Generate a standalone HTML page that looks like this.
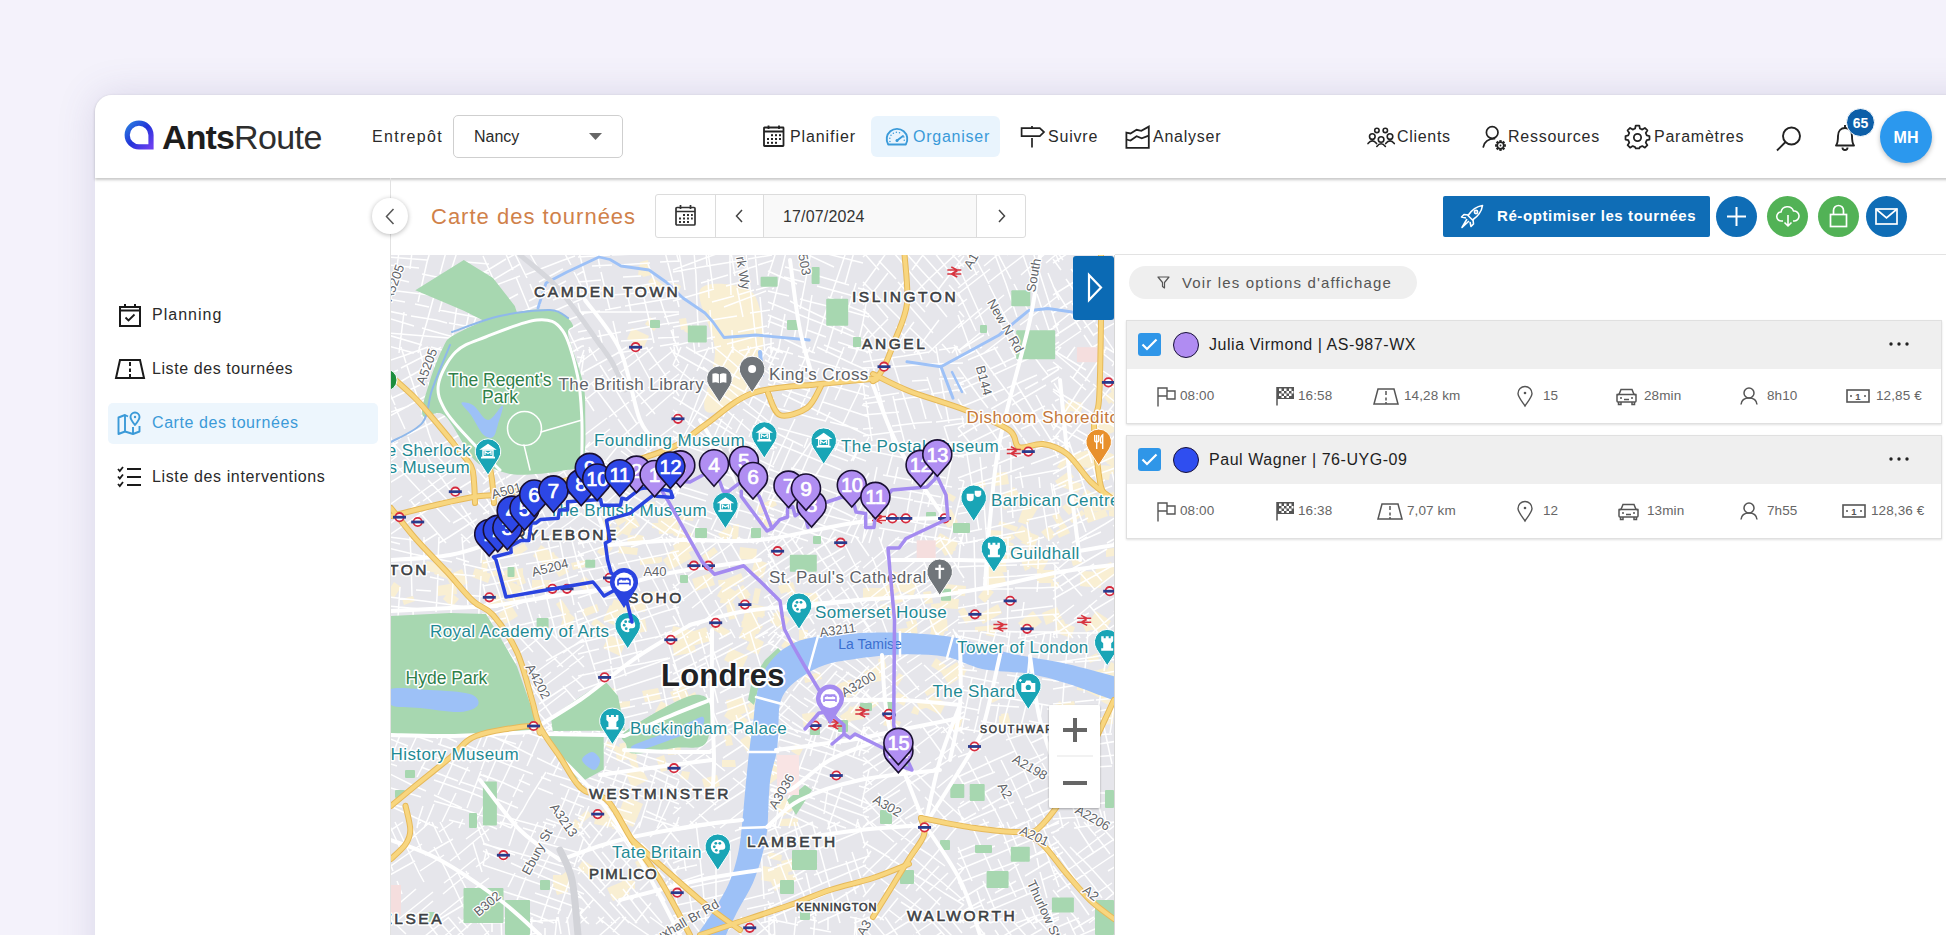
<!DOCTYPE html>
<html><head><meta charset="utf-8">
<style>
*{box-sizing:border-box;margin:0;padding:0}
html,body{width:1946px;height:935px;overflow:hidden;background:#f4f2fb;font-family:"Liberation Sans",sans-serif;color:#222}
.abs{position:absolute}
#win{position:absolute;left:95px;top:95px;width:1900px;height:900px;background:#fff;border-radius:17px 0 0 0;box-shadow:0 0 38px rgba(90,80,140,.17)}
#hdr{position:absolute;left:95px;top:95px;width:1900px;height:83px;border-radius:17px 0 0 0;background:#fff;box-shadow:0 1.5px 3px rgba(0,0,0,.22)}
.t{position:absolute;white-space:nowrap;line-height:1}
.nav{font-size:16px;color:#2a2a2a}
svg{position:absolute;overflow:visible}
</style></head><body>
<div id="win"></div>
<div id="hdr"></div>

<!-- logo -->
<svg style="left:124px;top:120px" width="31" height="30" viewBox="0 0 31 30">
 <defs><linearGradient id="lg" x1="0" y1="0" x2="1" y2="1"><stop offset="0" stop-color="#2a7de0"/><stop offset=".5" stop-color="#2233d8"/><stop offset="1" stop-color="#6a3ff0"/></linearGradient></defs>
 <path d="M15 3.2 A11.8 11.8 0 1 0 15 26.8 L27 26.8 L27 15 A12 12 0 0 0 15 3.2 Z" fill="none" stroke="url(#lg)" stroke-width="5.2"/>
</svg>
<div class="t" style="left:162px;top:120px;font-size:34px;font-weight:bold;color:#1d1d1d;letter-spacing:-0.9px">Ants<span style="font-weight:normal;letter-spacing:-0.6px;color:#2e2e2e">Route</span></div>

<div class="t nav" style="left:372px;top:129px;letter-spacing:1.3px">Entrepôt</div>
<div class="abs" style="left:453px;top:115px;width:170px;height:43px;border:1px solid #cfcfcf;border-radius:5px"></div>
<div class="t nav" style="left:474px;top:129px">Nancy</div>
<svg style="left:589px;top:133px" width="14" height="8"><path d="M0 0H13L6.5 7Z" fill="#666"/></svg>


<!-- NAV -->
<svg style="left:763px;top:125px" width="22" height="22" viewBox="0 0 22 22" fill="none" stroke="#222" stroke-width="1.8">
 <rect x="1" y="2.5" width="19.5" height="18.5" rx="0.5"/><path d="M1 6.5H20.5M5.5 0.5V4M16 0.5V4"/>
 <g fill="#222" stroke="none"><rect x="8" y="9.2" width="2" height="2"/><rect x="12" y="9.2" width="2" height="2"/><rect x="16" y="9.2" width="2" height="2"/><rect x="4" y="13" width="2" height="2"/><rect x="8" y="13" width="2" height="2"/><rect x="12" y="13" width="2" height="2"/><rect x="16" y="13" width="2" height="2"/><rect x="4" y="16.8" width="2" height="2"/><rect x="8" y="16.8" width="2" height="2"/><rect x="12" y="16.8" width="2" height="2"/></g>
</svg>
<div class="t nav" style="left:790px;top:129px;letter-spacing:.9px">Planifier</div>
<div class="abs" style="left:871px;top:116px;width:129px;height:41px;background:#e9f4fd;border-radius:6px"></div>
<svg style="left:885px;top:126px" width="24" height="20" viewBox="0 0 24 20" fill="none" stroke="#3a9ad9" stroke-width="1.9">
 <path d="M3.2 18.5A10.3 10.3 0 1 1 20.8 18.5Z" stroke-linejoin="round"/><path d="M12 14.5L18 10" stroke-width="1.9" stroke-linecap="round"/><circle cx="12" cy="14.5" r="1.5" fill="#3a9ad9" stroke="none"/>
 <g fill="#3a9ad9" stroke="none"><circle cx="4.95" cy="15.39" r="0.75"/><circle cx="4.81" cy="12.23" r="0.75"/><circle cx="6.02" cy="9.31" r="0.75"/><circle cx="8.35" cy="7.18" r="0.75"/><circle cx="11.36" cy="6.23" r="0.75"/><circle cx="14.50" cy="6.64" r="0.75"/><circle cx="18.86" cy="11.00" r="0.75"/><circle cx="19.27" cy="14.14" r="0.75"/></g>
</svg>
<div class="t nav" style="left:913px;top:129px;letter-spacing:.75px;color:#3a9ad9">Organiser</div>
<svg style="left:1020px;top:125px" width="26" height="24" viewBox="0 0 26 24" fill="none" stroke="#222" stroke-width="1.7">
 <path d="M1.6 3.1H19.8L24 7.1L19.8 11.2H1.6Z" stroke-linejoin="miter"/><path d="M12 1V3.1M12 13V22.5"/>
</svg>
<div class="t nav" style="left:1048px;top:129px;letter-spacing:.8px">Suivre</div>
<svg style="left:1125px;top:125px" width="26" height="24" viewBox="0 0 26 24" fill="none" stroke="#222" stroke-width="1.8">
 <path d="M1.4 7.7L5.5 8.5L11.6 4.8L16.3 5.8L23.8 1.6V22.8H1.4Z" stroke-linejoin="miter"/><path d="M1.4 14.5L5.5 15.6L11.6 11.2L16.7 13.4L23.8 10.6"/>
</svg>
<div class="t nav" style="left:1153px;top:129px;letter-spacing:.75px">Analyser</div>

<svg style="left:1360px;top:120px" width="40" height="35" viewBox="1360 120 40 35" fill="none" stroke="#222" stroke-width="1.6" stroke-linecap="round">
 <circle cx="1376.9" cy="130.4" r="2.2"/><circle cx="1385.3" cy="130.4" r="2.2"/>
 <circle cx="1372.3" cy="136.6" r="2.8"/><path d="M1368 143.6Q1372.3 138.2 1376.6 143.6"/>
 <circle cx="1381.1" cy="139.5" r="2.8"/><path d="M1376.8 146.4Q1381.1 141 1385.4 146.4"/>
 <circle cx="1390" cy="136.6" r="2.8"/><path d="M1385.7 143.6Q1390 138.2 1394.3 143.6"/>
</svg>
<div class="t nav" style="left:1397px;top:129px;letter-spacing:.7px">Clients</div>
<svg style="left:1478px;top:120px" width="35" height="35" viewBox="1478 120 35 35" fill="none" stroke="#222" stroke-width="1.7" stroke-linecap="round">
 <circle cx="1492.2" cy="132.5" r="5.8"/><path d="M1483.3 147Q1485 139 1494.5 138.7"/>
 <circle cx="1500.5" cy="145.5" r="3.3" stroke-width="1.7"/><circle cx="1500.5" cy="145.5" r="0.9" fill="#222" stroke="none"/><line x1="1504.10" y1="145.50" x2="1505.90" y2="145.50" stroke-width="2.3" stroke-linecap="butt"/><line x1="1503.05" y1="148.05" x2="1504.32" y2="149.32" stroke-width="2.3" stroke-linecap="butt"/><line x1="1500.50" y1="149.10" x2="1500.50" y2="150.90" stroke-width="2.3" stroke-linecap="butt"/><line x1="1497.95" y1="148.05" x2="1496.68" y2="149.32" stroke-width="2.3" stroke-linecap="butt"/><line x1="1496.90" y1="145.50" x2="1495.10" y2="145.50" stroke-width="2.3" stroke-linecap="butt"/><line x1="1497.95" y1="142.95" x2="1496.68" y2="141.68" stroke-width="2.3" stroke-linecap="butt"/><line x1="1500.50" y1="141.90" x2="1500.50" y2="140.10" stroke-width="2.3" stroke-linecap="butt"/><line x1="1503.05" y1="142.95" x2="1504.32" y2="141.68" stroke-width="2.3" stroke-linecap="butt"/>
</svg>
<div class="t nav" style="left:1508px;top:129px;letter-spacing:.75px">Ressources</div>
<svg style="left:1625px;top:125px" width="25" height="25" viewBox="0 0 24 24" fill="none" stroke="#222" stroke-width="1.7">
 <circle cx="12" cy="12" r="3.5"/>
 <path d="M10.3 1.5H13.7L14.3 4.4 16.6 5.4 19.1 3.8 21.5 6.2 19.9 8.7 20.9 11 23.5 11.6V15L20.9 15.6 19.9 17.9 21.5 20.4 19.1 22.8 16.6 21.2 14.3 22.2 13.7 23.5H10.3L9.7 22.2 7.4 21.2 4.9 22.8 2.5 20.4 4.1 17.9 3.1 15.6 0.5 15V11.6L3.1 11 4.1 8.7 2.5 6.2 4.9 3.8 7.4 5.4 9.7 4.4Z" stroke-linejoin="round" transform="translate(0,-1) scale(1,1)"/>
</svg>
<div class="t nav" style="left:1654px;top:129px;letter-spacing:.75px">Paramètres</div>
<svg style="left:1776px;top:126px" width="26" height="25" viewBox="0 0 26 25" fill="none" stroke="#222" stroke-width="1.9">
 <circle cx="15.5" cy="10" r="8.5"/><path d="M9.5 16L1 24.5"/>
</svg>
<svg style="left:1834px;top:124px" width="22" height="27" viewBox="0 0 22 27" fill="none" stroke="#222" stroke-width="1.9">
 <path d="M2 21.5C4 19 4 17 4 12C4 7 7 4 11 4S18 7 18 12C18 17 18 19 20 21.5Z" stroke-linejoin="round"/><path d="M11 1V4M8.5 23.5A2.5 2.5 0 0 0 13.5 23.5"/>
</svg>
<div class="abs" style="left:1846px;top:108px;width:29px;height:29px;border-radius:50%;background:#0d5fa8;border:1.5px solid #fff"></div>
<div class="t" style="left:1846px;top:116px;width:29px;text-align:center;font-size:14px;font-weight:bold;color:#fff">65</div>
<div class="abs" style="left:1880px;top:111px;width:52px;height:52px;border-radius:50%;background:#2b98ee;box-shadow:0 2px 5px rgba(0,0,0,.25)"></div>
<div class="t" style="left:1880px;top:130px;width:52px;text-align:center;font-size:16px;font-weight:bold;color:#fff">MH</div>

<!--MAP-->
<svg style="left:391px;top:255px;overflow:hidden" width="723" height="680" viewBox="391 255 723 680" font-family="Liberation Sans">
<defs><filter id="sh" x="-20%" y="-20%" width="140%" height="140%"><feDropShadow dx="0" dy="1" stdDeviation="1.2" flood-opacity=".3"/></filter></defs>
<rect x="391" y="255" width="723" height="680" fill="#e6e6eb"/>
<path d="M700.0,290.0 C705.0,279.7 735.0,284.7 745.0,288.0 C755.0,291.3 757.2,299.3 760.0,310.0 C762.8,320.7 765.0,337.3 762.0,352.0 C759.0,366.7 751.5,388.3 742.0,398.0 C732.5,407.7 709.5,418.0 705.0,410.0 C700.5,402.0 715.8,370.0 715.0,350.0 C714.2,330.0 695.0,300.3 700.0,290.0Z" fill="#f9efd3" stroke="none" stroke-width="0" stroke-linejoin="round" stroke-linecap="round" />
<path d="M652 523L668 523L668 529L652 528ZM659 509L673 507L673 513L659 514ZM611 514L622 507L629 519L618 526ZM636 594L657 591L658 602L637 605ZM756 507L774 498L777 505L760 514ZM619 546L638 548L637 555L618 553ZM702 556L714 547L718 552L706 561ZM633 602L646 604L645 612L632 610ZM673 545L690 538L694 550L677 557ZM692 579L711 573L715 585L696 591ZM757 518L768 512L774 524L763 529ZM678 506L695 508L693 521L677 519ZM740 547L757 549L756 560L739 559ZM673 626L694 631L691 641L671 636ZM610 605L624 612L618 627L603 620ZM646 558L662 557L662 562L646 563ZM627 518L633 514L640 526L634 529ZM640 559L660 557L660 563L640 565ZM688 633L706 627L711 641L692 646ZM666 554L684 544L692 558L674 568ZM628 535L638 536L637 546L627 545ZM642 501L655 502L654 511L641 510ZM752 604L766 607L763 618L750 615ZM609 635L626 642L620 656L603 648ZM663 560L669 555L676 565L670 570ZM611 531L618 526L623 533L616 538ZM600 523L606 518L612 525L606 530ZM740 592L748 590L750 598L742 600ZM658 518L678 517L679 533L659 534ZM677 513L685 510L687 519L680 521ZM733 524L739 524L738 540L732 540ZM623 581L629 585L622 594L617 590ZM738 604L747 600L751 608L742 613ZM724 580L741 573L744 581L727 588ZM730 648L748 656L742 669L724 660ZM718 534L730 525L735 532L724 541ZM604 542L613 548L605 558L597 552ZM672 641L693 636L696 652L674 656ZM635 534L644 536L643 543L634 541ZM744 626L757 632L752 643L739 637ZM614 599L633 606L628 619L609 612ZM676 527L693 534L690 542L673 535ZM755 559L767 563L763 578L751 574ZM627 519L635 523L629 536L621 533ZM623 624L645 619L647 631L626 636ZM755 588L761 589L758 604L752 603ZM753 636L764 642L758 655L746 649ZM721 595L732 596L731 604L720 603ZM726 605L734 603L737 618L729 620ZM746 615L763 626L758 634L741 623ZM750 612L764 611L765 616L751 617ZM718 580L737 580L737 586L719 587ZM773 613L784 614L783 625L772 624ZM778 586L793 582L795 589L781 594ZM777 610L790 619L783 630L770 622ZM744 617L758 620L755 631L741 627ZM745 612L758 616L754 631L741 627ZM788 637L796 642L789 652L781 646ZM784 588L791 584L796 592L790 596ZM724 584L738 593L731 605L717 596ZM715 623L730 631L726 637L712 629ZM797 593L818 593L818 602L797 603ZM799 630L808 630L807 640L799 640ZM734 592L743 585L751 595L742 602ZM755 606L762 608L760 616L754 615ZM541 545L559 558L550 569L533 556ZM493 561L499 559L503 572L497 574ZM496 574L515 567L520 580L500 587ZM498 614L511 605L518 616L505 624ZM487 595L497 602L494 607L484 600ZM556 604L562 600L570 612L564 616ZM584 576L593 583L587 592L577 585ZM512 550L524 543L528 549L516 557ZM499 544L508 542L511 550L502 552ZM571 563L585 560L586 567L573 570ZM482 560L488 560L487 574L481 573ZM503 578L522 587L519 593L500 584ZM532 580L551 580L551 589L532 589ZM563 619L574 622L570 635L558 632ZM556 572L566 567L569 572L559 577ZM488 599L497 594L501 599L492 605ZM581 610L597 604L599 611L584 617ZM515 577L523 574L526 583L518 586ZM595 618L607 627L603 633L591 624ZM517 569L523 568L523 578L517 578ZM540 556L554 552L555 556L542 561ZM491 572L497 570L499 575L492 577ZM508 587L522 590L519 603L505 600ZM566 610L575 618L570 625L561 617ZM498 598L512 605L510 610L495 603ZM1095 570L1111 562L1117 574L1102 583ZM1031 551L1049 559L1042 572L1025 563ZM1042 613L1057 607L1062 618L1046 625ZM945 491L956 497L953 502L943 497ZM1037 570L1053 570L1053 583L1037 583ZM941 598L959 599L958 609L940 608ZM1055 481L1069 471L1074 477L1059 487ZM986 587L994 592L985 603L978 597ZM1026 531L1039 536L1034 548L1021 543ZM1047 573L1054 570L1056 577L1050 579ZM1069 519L1082 510L1085 514L1072 523ZM987 578L1003 573L1007 585L990 589ZM1030 544L1041 551L1038 557L1027 550ZM975 627L996 625L996 630L975 632ZM1083 625L1095 620L1098 627L1086 632ZM1105 504L1120 504L1120 511L1104 510ZM1106 491L1122 501L1117 510L1100 500ZM1062 507L1078 494L1085 503L1069 515ZM941 549L952 542L956 550L945 556ZM1000 521L1018 527L1016 532L998 525ZM1086 489L1104 500L1097 511L1079 500ZM990 530L1003 531L1001 547L988 545ZM1003 538L1012 533L1015 538L1006 543ZM1085 516L1105 509L1108 516L1088 523ZM1029 500L1039 506L1031 520L1021 514ZM1081 571L1102 572L1101 588L1080 586ZM1065 478L1082 484L1078 493L1062 487ZM1052 516L1058 512L1066 526L1060 529ZM1022 525L1031 532L1023 542L1014 535ZM985 575L996 573L998 584L987 586ZM969 496L978 496L979 511L969 511ZM978 615L998 604L1002 613L983 624ZM973 485L984 480L986 486L976 490ZM985 561L1005 559L1007 572L987 574ZM1012 554L1022 547L1027 554L1017 561ZM988 625L996 626L994 637L986 635ZM1090 505L1100 503L1101 511L1091 512ZM1018 623L1033 611L1042 622L1027 634ZM946 584L966 586L965 596L944 594ZM940 533L958 543L952 555L933 545ZM1109 510L1117 510L1117 517L1109 516ZM1059 621L1075 627L1071 638L1054 632ZM1020 558L1026 556L1031 568L1025 571ZM1100 573L1110 570L1112 576L1102 579ZM1051 582L1059 582L1058 588L1051 588ZM1041 532L1049 526L1056 535L1049 541ZM992 544L1011 555L1005 565L986 554ZM1023 508L1032 510L1028 525L1018 522ZM993 473L1007 472L1009 484L995 486ZM985 577L1001 564L1006 570L989 583ZM999 537L1014 544L1011 551L996 544ZM1069 551L1078 548L1082 563L1073 566ZM1083 507L1092 504L1096 517L1086 520ZM1106 549L1115 548L1115 556L1106 557ZM1056 622L1063 619L1067 627L1059 630ZM1109 493L1116 492L1117 497L1110 498ZM1096 611L1111 621L1102 635L1087 625ZM997 500L1014 487L1022 497L1005 510ZM1056 531L1066 525L1070 533L1059 538ZM940 515L951 509L958 522L948 528ZM1103 668L1113 674L1107 686L1097 681ZM936 658L947 666L942 673L931 666ZM861 679L881 676L881 681L861 684ZM1055 705L1060 701L1063 705L1058 709ZM1089 672L1106 668L1110 682L1092 686ZM886 717L901 722L898 730L883 725ZM899 673L904 676L897 687L892 684ZM999 716L1005 716L1006 724L999 724ZM1100 717L1113 716L1113 724L1101 725ZM955 715L963 718L959 731L950 728ZM1058 705L1074 701L1076 710L1060 714ZM914 706L920 708L918 715L911 713ZM878 659L884 658L887 668L880 670ZM1108 712L1126 700L1130 707L1112 719ZM830 687L846 681L850 690L834 697ZM931 695L946 703L940 715L925 707ZM1009 663L1028 665L1027 673L1008 671ZM917 703L926 700L928 707L920 710ZM848 712L863 710L864 719L849 721ZM1112 688L1121 690L1118 704L1109 702ZM1111 662L1123 668L1117 680L1105 674ZM1087 658L1097 653L1099 659L1090 663ZM1106 693L1124 703L1119 711L1101 701ZM941 672L957 662L965 675L949 685ZM987 695L996 691L1000 699L992 703ZM864 672L878 665L883 676L869 683ZM804 676L820 672L822 679L805 683ZM864 707L876 699L879 704L867 712ZM924 691L939 683L941 689L927 696ZM1018 682L1027 688L1022 695L1013 688ZM898 692L908 698L904 706L893 700ZM1113 679L1121 675L1127 687L1118 691ZM802 714L815 712L816 726L804 728ZM1077 685L1086 686L1085 691L1077 690ZM1001 714L1008 713L1011 724L1003 726ZM958 664L967 670L961 679L952 673ZM834 687L851 679L858 693L841 701ZM840 716L857 704L863 712L846 725ZM1091 680L1109 689L1104 700L1086 691ZM850 706L859 711L854 719L846 714ZM733 706L742 707L742 716L732 716ZM661 701L670 706L663 717L655 712ZM607 741L623 749L620 754L604 745ZM619 744L633 740L636 751L622 755ZM667 742L680 741L681 754L668 755ZM670 692L685 686L689 696L674 702ZM722 760L735 760L736 767L722 767ZM617 702L630 701L630 707L618 708ZM682 694L697 699L695 704L680 699ZM724 736L731 735L733 745L726 746ZM752 702L771 709L766 724L747 717ZM730 707L748 720L742 729L724 716ZM747 705L762 694L771 707L755 717ZM656 758L664 755L669 770L661 772ZM731 703L743 697L749 711L736 717ZM642 736L652 731L654 736L644 740ZM626 774L641 767L648 780L632 788ZM726 700L740 698L742 709L728 712ZM740 740L753 732L760 744L747 752ZM759 747L771 743L775 756L763 760ZM758 742L770 741L771 754L760 755ZM628 757L635 755L639 768L633 770ZM702 779L717 775L720 786L705 790ZM600 693L609 692L610 704L601 705ZM682 771L690 772L688 780L680 778ZM604 690L615 688L616 694L605 696ZM636 743L651 745L650 752L635 750ZM676 702L695 692L698 699L680 709ZM615 747L635 745L637 758L617 761ZM642 691L658 688L661 699L645 702ZM1095 424L1115 417L1119 429L1099 437ZM1109 384L1122 379L1126 388L1112 393ZM1063 458L1068 461L1062 470L1057 467ZM1068 400L1083 403L1081 413L1066 410ZM1104 397L1113 391L1118 398L1109 404ZM1108 458L1123 466L1121 471L1106 463ZM1100 427L1117 420L1121 429L1104 436ZM1066 403L1072 405L1069 414L1063 411ZM1098 465L1115 466L1114 474L1097 472ZM1084 459L1098 462L1096 469L1082 467ZM1112 402L1131 395L1133 400L1114 407ZM1073 454L1093 449L1096 462L1076 467ZM1108 413L1117 415L1114 429L1105 428ZM1097 447L1117 456L1112 465L1093 456ZM1098 466L1111 467L1109 480L1096 479ZM652 277L665 286L662 291L648 282ZM640 262L648 260L651 275L643 277ZM640 262L646 264L644 276L638 275ZM679 319L686 318L688 329L681 330ZM687 326L705 336L702 341L684 331ZM694 336L701 332L704 338L698 342ZM632 328L649 336L644 347L627 339ZM674 283L681 286L679 291L672 289ZM644 286L656 281L658 286L646 290ZM650 317L659 324L654 331L645 324ZM780 876L796 874L797 880L781 882ZM777 864L789 864L788 877L777 876ZM769 878L775 875L782 887L775 891ZM760 772L774 761L784 773L770 784ZM780 819L798 818L798 826L780 826ZM774 873L784 870L788 885L778 888ZM769 852L782 855L781 861L767 858ZM763 866L780 869L778 883L761 880ZM774 804L785 797L793 810L782 817ZM796 744L803 749L799 756L791 751ZM780 801L800 800L801 807L780 808ZM781 861L799 857L801 869L784 873ZM893 571L911 577L907 589L889 582ZM877 591L893 582L899 591L883 601ZM906 622L916 619L918 626L908 629ZM930 619L938 616L941 622L933 625ZM893 597L900 593L904 601L896 604ZM958 611L964 607L972 620L966 624ZM898 629L917 627L918 640L900 642ZM880 605L887 603L888 611L881 612ZM863 588L882 588L882 601L863 601ZM923 592L931 591L933 603L925 604ZM934 624L946 628L942 639L930 634ZM902 576L918 583L913 596L897 590ZM930 620L947 619L948 631L931 632ZM891 604L898 607L895 616L888 613ZM931 604L941 603L942 613L932 614ZM446 576L462 569L468 583L453 590ZM449 591L459 599L452 607L443 599ZM394 582L401 587L394 598L387 593ZM437 564L452 569L448 579L434 574ZM437 586L456 583L457 594L438 596ZM475 568L491 574L488 583L472 577ZM402 599L413 596L415 601L404 605ZM427 561L439 564L436 573L424 570ZM575 819L583 825L575 835L568 830ZM593 814L610 807L614 815L596 823ZM553 875L572 875L572 887L553 887ZM596 815L617 819L616 828L594 824ZM622 880L635 881L635 889L621 888ZM553 882L564 878L568 892L557 895ZM578 818L587 810L592 815L582 823ZM612 821L622 821L622 829L612 829ZM583 860L597 869L591 877L578 868ZM625 796L643 804L637 818L620 810ZM554 881L567 871L570 875L557 885ZM635 862L644 857L647 863L638 868ZM563 875L573 882L570 887L560 881ZM619 808L638 816L633 827L615 819ZM607 888L624 881L630 894L613 901Z" fill="#f9efd3"/>
<path d="M483 252L489 253M388 257L427 260M466 262L489 264M388 265L419 268M478 272L489 273M422 274L446 279M473 283L489 286M388 277L409 282M458 294L489 301M388 290L430 295M467 299L489 301M388 299L405 302M415 304L429 307M439 310L480 318M388 311L407 315M411 316L436 320M436 320L447 323M449 323L487 330M487 330L489 330M388 318L414 326M422 328L439 333M439 333L472 342M485 346L489 347M388 333L425 336M425 336L460 339M460 339L489 341M388 335L422 345M431 347L452 353M388 346L414 353M489 275L480 305M476 317L469 339M473 293L465 333M462 344L460 353M459 291L453 334M453 334L450 353M457 252L449 277M449 277L439 312M427 352L427 353M446 252L440 274M438 281L434 296M434 296L428 318M428 318L418 353M430 252L427 262M427 262L418 302M412 252L410 269M404 312L399 353M399 252L393 295M483 273L506 259M508 258L519 252M483 286L520 264M483 290L520 276M525 275L561 261M561 261L575 256M483 313L518 294M539 282L563 269M483 326L506 314M529 301L566 281M577 275L584 271M483 327L503 319M514 315L541 304M553 300L569 293M571 292L584 287M483 342L508 331M548 314L563 307M563 307L584 298M483 353L521 338M560 323L584 314M530 353L554 339M554 339L566 331M566 331L584 321M558 348L583 338M583 338L584 338M571 353L582 346M582 346L584 346M564 252L571 265M574 272L584 291M566 291L584 325M529 252L538 268M561 315L578 351M514 252L527 278M530 284L534 294M505 252L513 270M516 277L532 316M546 350L547 353M483 256L491 274M491 274L497 288M499 292L509 314M521 341L527 353M483 285L496 314M497 317L504 333M508 340L512 350M512 350L513 353M483 329L495 353M483 352L483 353M578 257L610 255M612 255L636 254M641 254L668 252M592 266L612 265M619 265L650 263M660 262L679 261M578 282L601 280M623 277L641 276M578 294L607 290M632 287L656 283M666 282L679 281M613 295L638 293M638 293L679 290M578 314L600 311M605 310L621 307M625 306L667 299M667 299L679 297M578 312L602 312M602 312L616 312M616 312L651 312M651 312L679 312M578 332L588 330M628 323L656 318M664 317L679 314M578 340L621 332M626 331L664 324M664 324L679 322M621 341L652 339M658 338L679 337M618 353L648 348M660 346L679 343M676 252L679 262M665 252L676 294M676 294L679 307M648 264L654 280M654 280L663 308M663 308L669 325M671 330L679 353M641 285L648 315M648 315L654 343M628 297L631 312M639 348L640 353M597 252L600 268M601 272L610 310M613 321L619 347M579 252L589 292M599 330L602 343M604 351L605 353M578 303L582 318M589 349L590 353M673 254L680 252M673 270L705 258M705 258L722 252M673 272L707 266M707 266L738 261M748 259L772 255M701 283L728 275M733 273L756 266M758 265L774 260M673 301L714 289M726 286L741 282M712 302L734 296M738 295L754 290M756 290L774 285M724 307L766 291M772 289L774 288M673 327L705 321M705 321L737 316M750 313L770 310M673 346L694 341M694 341L715 337M738 332L767 326M694 353L708 349M708 349L721 346M727 344L769 333M739 351L774 343M771 333L771 353M755 252L758 285M760 297L761 308M761 308L763 333M763 333L765 353M746 252L747 266M747 266L751 295M751 295L753 314M753 314L755 332M755 332L757 350M731 252L735 276M737 288L743 317M748 346L749 353M730 252L730 264M730 264L731 295M732 330L733 353M708 252L713 288M706 252L707 265M708 279L709 298M710 310L712 340M712 342L713 353M694 252L696 275M696 275L697 304M697 304L699 347M679 252L685 290M691 324L695 353M673 329L674 341M674 347L675 353M864 252L869 254M820 252L863 263M802 252L834 267M785 267L808 273M808 273L849 285M858 288L869 291M784 277L804 282M817 286L850 295M850 295L869 300M768 271L797 284M828 297L840 302M842 303L853 308M853 308L869 314M768 291L789 296M800 299L811 302M811 302L848 311M848 311L869 317M790 301L799 306M799 306L818 315M818 315L854 332M768 302L805 317M805 317L833 328M833 328L869 343M768 315L801 328M807 330L826 337M838 342L853 347M866 352L868 353M768 321L786 328M824 345L843 353M784 339L805 349M805 349L815 353M768 347L783 353M869 291L866 304M866 304L863 322M863 322L856 353M856 283L845 320M845 320L841 334M854 252L845 284M842 296L834 326M834 326L831 336M831 336L826 353M846 252L842 264M842 264L828 305M827 308L818 336M818 336L812 353M812 295L809 313M809 313L808 323M808 323L805 340M805 340L803 353M811 252L807 273M807 273L800 309M798 316L794 339M785 314L779 347M779 347L778 353M786 252L778 285M778 285L772 310M771 315L768 328M776 252L769 273M769 273L768 276M950 252L961 264M961 264L964 267M934 252L960 285M920 252L943 278M949 285L964 302M905 252L922 271M922 271L946 297M946 297L953 305M959 311L964 317M893 252L900 260M900 260L913 276M913 276L925 290M930 296L947 317M879 261L896 279M898 282L925 312M954 345L961 353M863 252L879 270M905 301L933 333M942 344L950 353M863 282L876 295M876 295L906 325M910 328L929 346M929 346L936 353M863 288L888 318M896 327L915 349M915 349L918 353M863 309L894 341M894 341L905 353M863 324L888 353M863 342L872 353M957 346L952 353M964 320L941 341M941 341L928 353M939 320L918 348M916 351L914 353M964 256L941 286M941 286L926 307M914 322L899 342M899 342L890 353M958 252L930 278M930 278L915 293M888 319L874 333M874 333L863 344M925 252L912 270M907 278L890 301M868 331L863 338M888 273L863 305M887 252L877 266M876 268L863 286M868 252L863 257M958 257L965 252M958 267L983 252M958 288L979 271M984 266L996 256M996 256L1002 252M958 294L990 269M1007 255L1011 252M958 306L967 299M989 282L1003 271M1003 271L1028 252M958 328L982 308M1021 275L1031 266M1031 266L1047 252M975 319L1004 295M1046 263L1059 252M958 351L985 329M995 320L1021 299M958 351L984 335M984 353L1015 329M1020 325L1035 314M1035 314L1059 295M1012 353L1020 348M1022 347L1055 327M1055 327L1059 324M1031 353L1048 342M1056 336L1059 335M1054 345L1059 342M1055 252L1059 262M1048 273L1059 300M1033 252L1040 274M1040 274L1047 296M1047 296L1059 334M1022 252L1033 284M1037 294L1050 333M1050 333L1054 343M997 252L1011 279M1014 284L1031 316M1036 325L1045 343M994 252L1006 284M1006 284L1017 317M1028 347L1030 353M972 252L989 284M989 285L998 303M998 303L1018 341M966 252L977 275M991 304L1009 341M958 265L970 292M970 292L978 310M978 310L989 336M958 292L976 331M958 315L963 328M963 328L972 353M958 349L960 353M1053 263L1070 252M1087 265L1106 252M1053 295L1082 277M1112 258L1121 252M1053 313L1072 301M1082 295L1101 284M1101 284L1113 276M1053 327L1078 307M1107 284L1137 260M1146 254L1148 252M1053 337L1079 320M1079 320L1105 304M1053 350L1081 331M1084 328L1098 318M1100 317L1129 296M1132 294L1154 278M1093 335L1124 318M1136 311L1154 301M1082 353L1100 343M1142 320L1154 313M1149 327L1154 324M1127 353L1142 341M1134 252L1154 275M1121 252L1139 271M1139 271L1154 289M1111 252L1126 271M1126 271L1137 285M1137 285L1154 306M1154 306L1154 306M1120 281L1143 309M1151 320L1154 323M1097 277L1125 309M1125 309L1149 337M1149 337L1154 342M1081 263L1107 296M1125 319L1144 344M1144 344L1151 353M1057 252L1063 260M1071 269L1095 299M1101 306L1111 319M1120 330L1138 352M1053 259L1061 270M1066 279L1075 292M1075 292L1095 322M1096 324L1115 352M1115 352L1116 353M1072 303L1094 336M1099 344L1105 353M1053 286L1067 308M1069 311L1081 330M1084 335L1096 353M1080 352L1080 353M388 361L403 356M403 356L428 347M388 375L398 370M401 368L440 348M440 348L441 347M388 389L399 383M400 382L412 375M412 375L442 358M442 358L456 350M388 400L420 385M466 362L489 351M388 417L417 401M417 401L431 393M443 386L464 375M464 375L479 366M388 413L409 406M420 402L438 396M438 396L451 391M451 391L470 385M470 385L486 379M421 416L457 401M463 398L475 393M475 393L488 387M388 444L401 438M407 435L445 416M448 415L480 399M454 426L465 420M467 419L489 407M435 448L444 443M444 443L454 438M454 438L479 424M486 420L489 418M463 448L489 437M487 347L489 352M481 347L488 378M457 347L466 370M466 370L470 380M474 390L478 400M480 406L489 429M454 347L457 362M465 394L469 410M470 415L478 448M427 347L443 387M447 399L452 411M419 347L427 379M428 382L437 414M401 347L406 363M407 366L414 387M414 387L418 399M418 399L426 424M426 424L429 434M429 434L434 448M420 441L423 448M388 389L395 405M395 407L405 429M408 437L412 448M388 431L395 448M540 347L570 355M577 357L584 358M510 347L520 349M529 351L573 361M483 363L505 366M510 366L537 369M538 369L554 371M554 371L584 374M483 370L510 374M510 374L539 378M549 380L572 383M583 385L584 385M522 382L554 389M557 390L584 396M483 389L508 393M508 393L519 394M523 394L555 398M555 398L584 402M536 407L556 409M556 409L568 410M569 410L584 412M483 413L500 415M500 415L528 420M557 425L580 429M483 421L509 424M509 424L532 427M532 427L575 433M581 434L584 434M483 437L509 440M547 443L571 446M571 446L583 447M583 447L584 447M483 439L498 443M498 443L519 448M584 443L582 448M584 355L578 394M577 405L574 427M572 438L570 448M584 350L571 391M571 391L560 428M558 433L554 448M554 397L546 441M546 441L544 448M561 347L556 361M547 393L535 432M535 432L531 448M550 347L542 375M527 426L521 444M521 444L520 448M527 347L523 373M523 373L516 416M516 416L511 448M516 347L508 387M507 395L500 433M499 439L497 448M512 347L501 380M501 380L498 390M495 400L487 424M490 364L484 388M484 388L483 390M578 364L601 347M578 375L616 354M616 354L627 347M578 393L603 375M608 371L631 355M631 355L642 347M578 406L600 388M600 388L633 363M633 363L653 347M620 392L640 377M649 370L675 349M578 440L607 418M609 417L629 402M631 401L645 390M648 388L670 371M675 367L679 364M586 448L610 429M641 404L661 388M661 388L679 374M609 448L639 422M646 416L677 389M645 448L679 422M658 448L679 436M670 347L679 363M646 347L657 363M657 363L666 376M676 391L679 396M632 347L653 385M599 347L607 356M613 364L633 388M635 390L655 414M673 436L679 443M589 347L597 361M600 365L619 395M619 395L637 424M643 434L652 448M592 384L617 417M618 419L632 438M639 447L639 448M578 386L594 411M770 347L774 349M756 347L774 359M765 360L774 365M731 347L760 367M760 367L774 377M714 347L733 363M733 363L760 387M686 347L715 364M715 364L740 379M748 384L768 395M768 395L774 399M673 352L696 365M696 365L727 382M727 382L741 390M741 390L754 397M754 397L773 408M703 367L728 388M728 388L747 404M747 404L774 426M705 383L718 392M718 392L738 405M743 409L766 425M772 429L774 430M673 365L707 393M707 393L740 422M740 422L756 436M757 437L771 448M714 415L732 429M673 397L697 412M697 412L725 429M725 429L756 448M702 421L711 426M673 410L695 428M695 428L713 443M673 431L702 448M774 436L769 445M768 448L768 448M774 412L764 437M760 446L759 448M774 386L755 424M754 425L749 437M745 445L743 448M774 347L768 362M763 373L749 405M743 419L736 433M734 439L730 448M768 347L760 361M749 384L738 405M734 414L716 448M757 347L742 378M729 405L723 417M722 419L709 448M751 347L731 380M727 385L720 398M698 432L688 448M734 347L723 366M708 392L702 404M702 404L686 432M686 432L677 448M702 388L688 425M709 347L697 371M694 377L680 405M677 411L673 418M688 364L673 394M681 347L673 365M848 347L869 352M817 347L853 364M853 364L869 371M769 347L782 351M782 351L793 354M798 356L840 368M842 368L869 376M768 356L779 359M799 365L812 369M855 382L869 387M768 368L788 374M798 376L815 381M815 381L832 386M832 386L869 396M768 379L797 387M797 387L810 391M862 405L869 407M768 384L786 390M786 390L813 399M823 402L848 410M848 410L869 417M782 394L815 410M815 410L852 428M852 428L869 436M768 406L792 412M792 412L813 418M813 418L826 421M830 422L858 429M832 438L858 448M778 428L822 440M822 440L843 446M768 429L803 446M768 445L777 448M869 437L863 448M849 438L843 448M869 369L862 383M862 383L857 395M857 395L842 426M832 447L832 448M859 347L851 364M848 372L835 400M830 412L825 422M821 431L813 448M844 347L828 388M828 388L817 415M808 438L804 448M819 368L801 407M795 419L783 444M783 445L781 448M810 347L799 372M799 372L784 407M789 347L773 387M770 395L768 400M779 347L768 370M863 362L904 356M904 356L929 352M939 350L958 347M863 368L890 367M890 367L930 364M930 364L963 363M912 381L928 380M939 379L964 378M863 399L880 396M880 396L899 393M912 392L929 389M954 385L964 384M863 404L885 401M894 400L922 396M931 394L964 389M863 415L899 412M959 407L964 407M863 429L873 428M892 426L917 423M917 423L932 422M936 422L959 419M959 419L964 419M863 436L901 431M945 426L964 423M863 446L904 444M911 444L937 443M937 443L960 442M955 347L958 357M962 416L964 428M936 347L941 376M941 380L949 423M952 444L953 448M917 347L922 360M927 377L938 409M938 409L942 419M944 426L951 448M918 390L926 419M888 347L897 375M897 375L900 385M900 385L907 406M907 406L915 429M893 396L897 413M897 413L906 448M868 347L874 370M874 370L879 391M879 392L888 425M888 425L892 440M892 440L894 448M863 383L865 399M866 401L872 441M958 359L975 351M980 348L982 347M968 360L996 348M996 348L998 347M958 384L978 375M990 369L1024 353M1030 350L1036 347M958 391L983 380M993 375L1032 357M1037 354L1053 347M958 408L973 402M973 402L1004 389M1007 388L1037 375M1047 371L1059 366M958 428L980 416M991 409L1022 391M1025 389L1038 382M1042 380L1059 369M958 437L990 418M1012 405L1046 385M1051 382L1059 377M959 448L998 429M998 429L1011 423M1011 423L1035 411M1035 411L1045 406M1055 401L1059 399M979 448L1010 435M1021 429L1041 420M1050 417L1059 413M1038 448L1059 436M1057 448L1059 447M1058 347L1059 348M1057 367L1059 369M1027 347L1041 366M1041 366L1048 375M1054 383L1059 391M1052 404L1059 415M1010 347L1018 361M1036 395L1043 408M1043 408L1054 429M994 347L1006 367M1014 379L1019 388M1019 388L1041 424M1041 424L1056 448M974 347L999 381M999 381L1014 401M1014 401L1040 436M1043 440L1049 448M986 385L997 401M1010 420L1022 437M1023 438L1030 448M958 367L978 395M978 395L988 408M1017 447L1017 448M958 382L966 394M977 411L995 436M995 436L1003 448M958 399L977 431M958 428L974 448M1125 347L1154 365M1105 347L1123 358M1135 365L1154 377M1095 347L1127 373M1127 373L1147 388M1147 388L1154 394M1103 371L1127 387M1128 387L1150 402M1150 402L1154 405M1053 350L1086 370M1105 382L1133 399M1147 407L1154 411M1053 351L1061 358M1061 358L1090 382M1093 384L1120 406M1053 362L1062 369M1070 376L1086 390M1109 409L1138 432M1138 432L1152 444M1152 444L1154 446M1053 389L1078 404M1078 404L1092 413M1093 414L1112 425M1112 425L1126 434M1135 439L1148 447M1053 391L1086 418M1086 418L1112 440M1053 417L1072 427M1077 430L1109 448M1053 424L1089 444M1091 445L1096 448M1053 436L1070 447M1070 447L1071 448M1154 432L1142 448M1154 420L1143 432M1140 435L1130 445M1137 418L1125 436M1154 386L1127 420M1127 420L1105 448M1145 386L1130 402M1131 382L1105 416M1105 416L1083 444M1143 347L1119 377M1111 387L1099 402M1090 413L1067 441M1127 347L1118 358M1118 358L1112 366M1095 388L1072 416M1072 416L1055 437M1107 347L1085 381M1083 384L1069 406M1069 406L1053 430M1094 347L1088 356M1087 357L1073 378M1075 347L1067 358M1061 347L1053 356M388 448L398 442M388 463L397 456M388 476L404 467M388 484L420 464M388 506L402 496M439 469L451 460M456 457L477 442M409 501L441 478M441 478L477 452M487 445L489 443M388 525L420 502M423 501L456 478M483 459L489 454M388 536L413 519M413 519L443 500M460 488L473 480M483 473L489 469M486 479L489 477M422 543L438 533M453 523L471 513M439 543L449 537M449 537L477 519M483 514L489 511M462 543L483 526M472 442L485 457M485 457L489 462M456 442L463 451M477 469L487 481M435 442L444 451M425 442L435 454M437 456L451 471M468 491L489 514M417 442L434 467M436 470L459 503M461 505L485 541M485 541L487 543M392 442L407 458M407 458L425 477M428 480L452 505M452 506L477 531M477 531L488 543M397 466L420 491M421 491L450 522M461 534L470 543M411 501L422 515M422 515L446 543M408 528L415 536M421 542L421 543M483 446L488 442M483 460L504 446M483 469L494 463M517 449L528 442M483 484L505 465M505 465L527 446M483 492L505 478M506 478L528 464M483 509L498 496M498 496L509 488M513 485L537 465M483 525L505 507M505 507L538 479M571 451L581 442M539 488L575 464M581 459L584 457M483 530L494 523M529 503L566 482M572 478L584 471M533 519L542 512M556 502L576 487M576 487L584 482M507 543L543 522M552 517L578 501M583 498L584 498M529 543L556 521M560 517L584 497M541 543L569 523M569 523L582 513M563 543L574 534M574 534L584 527M578 543L584 539M584 464L584 465M559 442L563 451M566 456L571 466M549 442L562 468M562 468L567 477M573 488L584 509M527 442L548 473M548 473L561 493M520 451L538 478M545 489L561 513M570 527L581 543M531 488L543 513M543 513L549 526M483 445L502 482M502 482L518 514M521 521L527 532M528 534L532 543M502 508L512 523M522 539L525 543M483 493L498 517M498 517L514 543M488 532L495 543M483 537L487 543M675 442L679 445M652 442L676 457M676 457L679 459M636 442L669 465M669 465L679 473M619 442L653 471M657 474L668 483M672 487L679 493M621 451L657 478M657 478L671 488M676 492L679 494M578 446L615 467M641 482L653 489M578 445L614 471M656 501L666 508M578 464L611 483M614 485L652 507M578 463L601 479M610 485L627 497M661 521L679 534M633 512L668 535M669 536L679 542M578 483L610 506M610 506L638 527M578 499L601 514M601 514L616 524M578 512L606 531M615 537L623 543M578 532L596 543M578 536L588 543M679 539L676 543M679 518L661 537M679 487L652 517M649 520L634 538M679 478L659 496M649 505L637 516M634 518L619 532M619 532L607 543M679 442L661 464M661 464L636 493M635 494L619 513M614 519L595 541M640 472L627 484M626 485L598 510M598 510L589 518M659 442L629 467M625 470L603 488M601 490L592 497M584 504L578 509M621 442L605 462M605 462L588 482M588 482L578 494M590 442L581 453M764 442L774 446M747 442L774 449M721 442L745 453M751 456L774 467M701 442L727 452M727 452L761 466M770 469L774 471M675 442L712 455M714 456L753 469M700 467L739 478M769 485L774 487M673 461L687 466M739 483L774 494M703 476L733 491M736 492L759 503M761 504L774 510M673 484L708 495M763 512L774 516M673 491L706 501M717 504L746 512M746 512L772 520M772 520L774 521M698 507L728 520M673 508L712 519M720 521L759 531M768 534L774 535M714 530L732 536M737 538L749 541M749 541L754 543M673 517L709 533M709 533L731 543M673 529L704 543M673 540L679 543M774 531L768 543M774 495L761 526M774 451L768 471M768 471L762 493M762 493L754 520M752 527L747 543M759 442L755 456M755 456L747 480M740 503L736 518M733 528L728 543M755 442L747 457M747 457L737 477M720 511L711 530M706 538L704 543M733 442L720 472M719 473L713 487M699 519L692 534M692 534L688 543M713 442L702 471M686 514L678 536M678 536L675 543M683 481L673 500M681 442L673 461M820 442L850 455M850 455L866 461M815 449L826 453M826 453L848 461M773 442L800 453M800 453L841 470M791 468L834 480M834 480L846 484M846 484L869 490M768 469L780 473M780 473L805 482M812 485L840 495M847 497L858 501M865 504L869 505M768 477L786 485M786 485L815 499M815 499L832 507M832 507L845 513M845 513L857 519M768 499L792 505M801 508L837 518M837 518L850 521M768 507L793 516M799 518L816 523M816 523L833 529M833 529L859 538M768 517L806 531M806 531L822 537M822 537L840 543M768 528L808 541M869 527L862 543M869 503L857 529M857 529L851 543M863 503L846 534M869 473L851 503M835 529L827 543M862 442L853 461M845 479L839 491M838 494L824 524M824 526L816 543M863 442L851 461M839 442L835 451M816 497L802 529M800 535L796 543M836 442L813 480M790 518L775 542M815 442L807 460M807 460L792 495M789 502L782 517M811 442L793 468M793 468L769 504M793 442L780 472M780 472L768 500M784 442L773 465M769 473L768 475M926 452L940 454M951 455L964 457M863 450L875 452M875 452L905 458M911 471L946 478M959 480L964 481M883 475L911 480M931 483L952 487M899 489L941 497M863 492L881 495M887 496L913 500M914 501L952 507M863 513L882 516M882 516L908 521M908 521L946 528M946 528L964 532M863 525L873 527M879 528L915 534M918 535L961 542M895 539L920 543M964 530L961 543M964 481L960 498M960 498L950 538M950 538L948 543M955 442L948 477M948 477L940 513M940 513L934 543M936 473L933 485M931 494L928 507M926 519L924 528M924 528L920 543M935 442L925 485M925 485L917 522M916 524L912 543M920 442L912 484M911 490L907 513M898 467L894 484M889 505L886 522M884 529L881 542M896 442L887 475M884 487L881 498M881 498L876 518M876 518L869 543M877 467L870 503M870 503L863 540M864 442L863 450M958 457L980 450M980 450L992 445M958 456L988 451M995 450L1011 448M958 478L987 467M992 466L1009 459M1009 459L1027 453M1036 449L1055 442M971 485L990 479M990 479L1024 467M1031 464L1059 454M958 489L1001 481M1015 478L1058 470M1058 470L1059 470M958 507L968 504M1001 494L1017 489M1057 476L1059 476M958 514L984 509M1033 501L1059 496M1007 512L1031 508M958 534L982 529M985 529L1015 522M1027 520L1059 513M965 543L984 539M988 538L1025 531M1048 527L1059 524M1027 543L1044 537M1057 533L1059 532M1057 543L1059 542M1058 442L1059 449M1051 483L1057 519M1039 477L1040 488M1042 497L1049 541M1020 472L1023 488M1027 522L1030 543M1010 442L1011 454M1011 454L1011 472M1011 475L1012 504M1012 504L1013 518M999 442L999 460M1000 465L1001 502M1001 505L1002 524M1002 525L1002 543M980 457L983 489M984 503L987 543M965 442L972 485M972 487L979 530M965 522L967 543M1053 451L1070 442M1053 465L1081 451M1084 450L1096 444M1096 444L1100 442M1053 474L1089 454M1097 450L1112 442M1053 487L1072 478M1080 474L1102 462M1102 462L1121 453M1121 453L1130 448M1130 448L1142 442M1053 490L1066 485M1070 484L1090 477M1090 477L1115 468M1123 465L1137 460M1053 498L1085 487M1091 485L1105 480M1115 477L1147 466M1147 466L1154 463M1079 498L1112 486M1116 484L1154 470M1053 528L1080 514M1110 498L1137 484M1152 477L1154 476M1053 535L1088 518M1143 490L1154 485M1072 543L1105 524M1105 524L1118 516M1118 516L1149 497M1153 495L1154 494M1076 543L1092 536M1092 536L1101 532M1113 526L1151 509M1151 509L1154 508M1107 543L1127 532M1132 529L1154 517M1115 543L1144 532M1142 543L1154 538M1147 442L1154 470M1124 442L1136 478M1136 478L1142 492M1142 492L1147 508M1147 508L1154 527M1129 483L1132 497M1132 497L1140 531M1140 531L1142 543M1112 472L1116 488M1118 496L1121 509M1124 519L1130 543M1086 442L1092 463M1093 466L1103 503M1114 542L1114 543M1069 442L1082 480M1082 481L1086 493M1086 493L1095 520M1053 445L1058 458M1077 508L1086 532M1053 484L1059 513M1053 542L1053 543M487 542L489 543M389 537L421 541M388 541L400 544M456 558L469 562M388 548L413 554M413 554L452 562M463 564L476 567M476 567L489 570M388 568L430 572M454 574L475 576M430 577L444 580M416 590L431 591M465 595L489 597M388 597L424 601M424 601L452 605M452 605L472 608M388 606L431 610M482 614L489 615M416 617L445 622M447 632L471 637M483 537L481 563M481 576L479 610M479 610L478 630M478 630L478 638M462 537L463 550M463 550L466 579M466 579L468 605M453 583L451 613M439 537L438 561M438 574L437 597M437 597L436 612M435 626L435 638M424 537L424 572M423 616L423 638M410 537L411 559M411 559L412 596M413 610L414 638M400 587L398 617M483 550L498 546M498 546L527 538M483 563L496 560M498 559L537 551M537 551L559 546M483 571L519 565M526 564L566 558M566 558L584 555M483 586L508 581M508 581L521 578M540 573L550 571M550 571L562 569M574 566L584 564M483 605L504 598M510 596L545 585M549 584L578 575M483 617L521 603M521 603L534 599M534 599L557 591M557 591L577 584M483 623L506 618M483 634L504 629M506 628L525 624M525 624L566 614M577 612L584 610M523 638L558 627M558 627L584 618M563 638L584 632M580 537L584 548M571 537L579 568M559 537L564 562M564 562L567 573M567 573L570 586M570 586L574 605M575 613L580 636M547 537L552 559M560 599L566 628M566 628L568 638M535 551L543 583M543 583L550 611M550 611L557 638M528 578L536 603M539 614L547 638M507 537L513 555M515 563L527 603M527 603L538 638M489 537L504 575M507 582L518 609M483 546L488 563M488 563L495 581M495 581L507 617M507 617L514 638M483 584L489 612M490 619L494 635M494 635L494 638M483 626L486 638M578 544L592 541M592 541L611 537M578 555L614 543M615 543L634 537M578 565L592 560M595 559L619 551M631 547L662 537M578 572L614 565M618 564L661 555M661 555L679 551M594 581L613 576M613 576L630 572M578 598L602 590M604 599L635 594M578 625L605 615M605 615L618 610M628 607L650 599M650 599L679 589M604 622L632 614M632 614L666 604M670 603L679 601M585 638L616 628M621 626L642 619M642 619L659 613M659 613L679 607M665 627L679 624M655 638L672 631M666 537L671 546M675 552L679 561M662 537L672 565M672 565L679 583M643 537L655 563M657 567L661 577M663 579L679 614M639 556L651 577M652 578L670 611M673 616L679 626M615 537L623 553M623 553L634 577M634 577L640 591M643 598L661 637M661 637L662 638M600 537L606 550M612 563L630 598M631 601L646 632M586 537L602 565M602 566L618 594M629 615L642 638M578 551L584 561M589 571L601 595M601 595L607 606M610 612L624 638M578 560L592 601M592 601L597 613M578 602L584 614M584 614L595 636M578 625L586 638M673 545L684 537M673 560L697 541M697 541L701 537M700 555L724 537M673 588L686 578M686 578L704 564M704 564L722 551M722 551L730 545M730 545L740 537M673 607L708 580M708 580L717 573M756 544L764 537M692 608L725 582M752 560L774 543M722 592L743 579M743 579L774 560M681 638L695 628M697 626L729 601M729 601L752 583M752 583L761 576M761 576L774 566M764 598L774 592M739 638L765 623M765 623L774 618M755 638L774 626M772 638L774 636M761 537L774 562M755 560L761 572M766 582L774 598M727 537L749 574M769 608L774 616M715 537L733 574M738 585L752 613M752 613L760 629M763 636L764 638M699 537L713 568M728 599L740 627M743 633L745 638M703 576L712 594M715 600L727 622M730 629L735 638M673 553L679 563M679 563L691 584M691 584L697 594M697 594L718 630M720 633L723 638M673 584L684 601M706 636L707 638M673 602L684 628M687 636L688 638M768 551L779 542M779 542L784 537M768 557L795 537M768 570L791 555M791 555L803 547M768 579L779 572M785 569L803 558M803 558L836 537M783 582L804 570M807 568L831 555M831 555L843 548M768 607L792 591M803 584L818 574M821 572L845 556M797 605L827 584M832 581L861 561M768 636L784 623M804 608L816 599M816 599L826 591M845 577L859 566M777 638L813 614M816 611L849 588M851 587L869 575M804 638L815 629M819 638L841 623M843 622L869 604M837 638L858 624M858 624L869 617M855 638L867 631M867 631L869 630M869 537L869 537M856 537L869 556M841 537L853 561M853 561L869 591M820 537L832 556M832 557L844 575M847 581L853 589M853 589L863 606M814 548L827 567M827 567L835 578M841 587L862 618M863 619L869 627M791 537L815 572M827 589L851 625M851 625L860 638M782 537L790 550M790 550L796 560M816 592L839 630M839 630L843 638M768 554L788 584M788 584L796 596M796 596L814 624M768 561L780 585M790 604L799 621M799 621L807 638M768 597L788 633M768 612L776 628M863 539L865 537M863 568L884 550M884 550L899 537M863 579L891 555M891 555L906 543M906 543L913 537M863 583L874 577M904 559L941 537M863 604L890 582M900 574L908 567M908 567L938 542M938 542L945 537M863 614L894 588M898 585L925 563M930 558L956 537M863 617L872 612M875 610L887 603M887 603L926 582M926 582L956 565M863 631L876 622M901 605L935 582M897 624L918 607M918 607L937 592M917 619L929 610M947 595L957 586M963 582L964 581M898 638L930 615M938 610L948 603M954 599L964 592M913 638L945 617M963 605L964 605M932 638L959 619M959 537L964 546M939 537L960 572M960 572L964 578M925 537L930 547M930 547L947 583M922 557L931 579M931 579L936 589M953 629L957 638M912 577L926 610M926 610L934 629M934 629L938 638M879 537L886 556M886 556L901 594M901 594L913 624M872 557L889 597M875 600L879 611M880 614L889 638M863 620L873 635M958 544L978 541M989 540L1011 537M1003 547L1035 546M1046 546L1057 546M984 555L1028 553M958 567L978 566M978 566L1017 565M1020 565L1057 563M1057 563L1059 563M983 578L1017 576M1017 576L1041 574M1050 573L1059 573M958 590L997 589M997 589L1013 589M1015 588L1038 588M1038 588L1059 587M958 608L988 603M991 603L1008 600M958 617L980 614M980 614L1001 612M1011 611L1053 606M958 623L985 620M991 620L1030 616M1030 616L1059 614M958 631L978 631M990 631L1022 632M1022 632L1059 632M1018 638L1059 631M1055 565L1055 585M1055 585L1056 622M1056 622L1057 638M1039 537L1038 569M1038 581L1037 592M1036 636L1036 638M1031 537L1028 567M1024 602L1022 617M1021 625L1020 638M1008 537L1008 560M1008 570L1008 602M1008 602L1007 630M1007 630L1007 638M988 537L988 575M988 575L988 595M988 600L988 633M974 537L975 578M975 578L976 607M961 537L958 569M1077 543L1087 537M1053 573L1078 552M1053 580L1070 570M1070 570L1081 564M1081 564L1107 549M1053 591L1062 585M1062 585L1094 564M1053 599L1083 582M1083 582L1121 561M1142 549L1154 542M1053 621L1074 605M1091 592L1121 569M1121 569L1144 552M1150 547L1154 544M1074 619L1097 600M1100 597L1112 587M1112 587L1126 575M1126 575L1141 563M1146 559L1154 552M1053 635L1089 613M1094 610L1131 588M1139 583L1154 574M1086 638L1115 614M1124 607L1148 587M1096 638L1126 617M1126 617L1140 608M1140 608L1154 598M1115 638L1143 617M1149 612L1154 608M1134 638L1154 626M1147 638L1154 632M1151 537L1154 541M1140 537L1145 546M1145 546L1154 560M1120 537L1134 560M1138 587L1149 602M1149 602L1154 610M1119 573L1132 594M1132 594L1148 619M1148 619L1154 628M1073 548L1085 561M1092 569L1102 581M1053 543L1066 558M1075 567L1095 590M1114 611L1138 638M1053 563L1082 596M1089 605L1099 617M1099 617L1117 638M1053 579L1063 591M1083 614L1102 638M1078 635L1080 638M1053 614L1073 638M1053 636L1055 638M481 632L489 642M473 632L488 647M443 632L466 657M473 665L489 682M432 632L443 644M443 644L450 653M472 677L489 697M424 632L449 663M455 672L476 697M485 709L489 714M438 663L457 688M396 632L422 664M422 664L430 674M462 712L474 728M388 639L414 669M414 669L438 696M456 716L471 733M388 641L410 672M414 677L435 708M388 668L417 700M388 674L404 692M428 722L438 733M407 713L425 733M388 723L397 733M489 722L475 733M489 708L460 730M470 701L457 712M429 718L409 733M489 650L463 670M457 675L436 691M436 691L426 699M420 704L405 715M404 716L388 728M489 638L470 651M452 664L417 689M417 689L396 704M472 632L435 655M435 655L401 676M401 676L388 684M450 632L432 642M400 659L388 666M411 632L388 651M391 632L388 634M483 638L492 632M483 649L506 632M498 647L524 632M483 664L513 647M483 685L515 657M515 657L540 637M545 632L546 632M483 692L491 686M561 634L564 632M483 697L512 680M546 661L584 640M483 709L492 703M535 673L557 657M563 653L583 639M506 708L531 688M531 688L551 672M557 667L584 645M483 732L509 712M514 709L530 697M530 697L543 687M543 687L569 668M569 667L584 656M494 733L521 715M539 704L568 685M568 685L580 677M580 677L584 674M511 733L529 719M531 718L566 691M514 733L536 721M539 733L558 720M559 720L576 708M576 708L584 703M544 733L559 724M569 717L584 708M560 733L584 715M573 733L584 724M580 632L584 636M550 632L572 654M572 654L584 667M528 632L552 657M554 658L563 667M572 676L584 688M515 632L533 652M563 686L584 710M528 661L540 677M567 714L581 733M495 632L516 663M525 676L537 694M537 694L559 727M559 727L563 733M483 650L492 660M523 695L531 704M531 704L556 733M483 654L492 668M492 668L502 682M503 684L517 704M517 704L536 733M483 680L503 707M504 709L522 733M483 699L493 713M578 635L587 632M578 643L617 634M617 634L629 632M578 654L599 649M604 648L620 645M620 645L633 642M633 642L661 636M666 635L677 632M594 664L608 660M608 660L642 651M578 676L618 668M618 668L645 663M645 663L668 658M578 691L600 683M600 683L618 677M618 677L642 668M642 668L670 658M608 693L632 685M632 685L672 672M578 711L594 708M600 706L622 702M630 700L662 693M674 690L679 689M578 718L597 714M605 712L635 706M642 704L653 702M653 702L679 696M607 722L648 712M677 706L679 705M620 733L644 724M644 724L679 712M658 733L670 730M670 730L679 728M665 632L677 671M662 681L664 692M664 692L672 733M632 632L639 662M647 694L651 709M652 714L656 733M615 632L626 676M605 632L609 653M609 653L611 664M611 666L617 700M620 714L623 733M583 632L595 670M595 671L606 706M608 713L613 729M613 729L614 733M673 642L685 636M673 655L702 638M709 634L713 632M673 662L710 643M719 639L732 632M673 674L697 662M699 661L733 643M673 680L706 663M712 660L747 642M756 638L768 632M673 690L693 680M733 661L750 653M750 653L774 641M673 694L691 687M691 687L715 677M718 676L730 671M701 703L710 699M720 693L735 685M735 685L749 678M751 677L774 665M673 723L702 712M702 712L712 708M725 703L751 693M751 693L763 689M716 714L751 701M757 700L773 694M715 733L746 715M746 715L767 703M767 703L774 699M719 733L754 721M757 733L771 725M750 632L762 671M762 671L767 687M767 687L774 708M756 694L760 712M732 663L740 688M742 694L753 733M707 632L721 673M736 715L742 733M699 632L705 654M705 656L710 671M713 683L718 703M682 632L691 654M691 654L705 692M706 694L719 727M720 728L722 733M673 664L683 686M685 691L698 721M673 679L683 706M683 708L693 733M673 721L677 733M863 632L869 636M845 632L857 639M857 639L869 646M841 632L869 655M824 632L845 650M854 657L869 670M805 632L830 650M835 654L869 679M781 632L810 650M810 650L843 670M846 672L864 683M774 632L800 650M834 673L866 695M866 695L869 698M768 642L805 665M809 668L820 674M850 693L869 705M800 672L813 681M768 658L795 679M795 679L815 695M849 722L863 733M804 698L818 706M818 706L842 720M842 720L864 733M768 679L788 693M790 694L799 701M799 701L808 707M817 714L826 720M833 725L845 733M768 691L801 718M801 718L819 732M819 732L820 733M768 706L781 715M781 715L790 721M792 722L809 733M768 709L798 733M798 733L798 733M768 721L783 733M869 727L864 733M869 689L851 713M846 719L837 732M869 682L840 712M832 721L820 733M869 666L844 692M840 696L819 718M811 726L805 733M849 672L824 697M822 699L808 713M869 635L854 652M837 671L813 699M784 732L783 733M837 660L807 689M790 706L768 728M837 632L827 645M827 645L821 654M817 659L793 691M791 694L777 713M777 713L768 725M803 663L781 691M778 694L768 707M816 632L808 641M800 651L784 669M783 670L768 688M778 658L772 667M772 667L768 671M786 632L771 651M777 632L768 643M863 635L867 632M863 640L876 632M863 657L899 632M892 643L901 638M901 638L911 632M863 677L889 655M863 683L875 675M879 673L897 661M897 661L928 641M928 641L937 636M882 680L897 670M907 663L925 651M926 650L938 641M938 641L951 632M863 705L890 686M891 685L922 663M951 643L962 636M863 710L896 690M939 665L952 657M952 657L963 651M863 726L889 707M889 707L909 693M909 693L919 686M925 681L951 663M951 663L964 654M880 724L911 702M915 698L925 691M925 691L933 685M942 679L964 662M926 700L957 677M903 727L912 721M945 699L964 686M950 705L964 693M927 733L938 727M949 720L964 712M941 733L964 716M955 632L964 644M936 632L949 648M951 651L964 667M924 665L947 687M955 696L964 704M872 632L895 661M895 661L919 690M926 698L952 729M952 729L955 733M863 654L884 675M884 675L902 692M902 692L926 716M926 716L940 729M944 732L944 733M863 690L889 717M889 717L901 730M901 730L904 733M863 714L870 721M981 632L1009 637M1022 640L1038 643M1038 643L1059 647M958 636L978 640M978 640L1013 647M958 649L989 653M1002 655L1024 659M1036 660L1054 663M1054 663L1059 664M958 662L996 667M1001 667L1043 673M958 669L977 671M1007 675L1038 679M1042 679L1059 681M1059 681L1059 681M958 675L999 683M958 689L989 695M989 695L1024 701M1024 701L1057 707M1057 707L1059 707M990 705L1019 707M1047 709L1059 710M958 706L978 710M1029 721L1059 727M958 717L970 720M981 721L1023 729M1023 729L1043 733M958 728L989 733M1051 632L1048 660M1042 705L1040 718M1045 632L1038 660M1038 660L1030 689M1030 689L1021 726M1021 726L1019 733M1027 632L1024 643M1023 650L1013 688M1012 691L1002 728M1010 632L1007 653M999 703L994 732M996 632L993 642M993 642L990 657M990 657L985 680M985 680L978 714M978 716L974 733M981 632L973 671M972 678L966 707M966 707L961 733M964 632L959 658M1053 633L1090 633M1090 633L1119 633M1100 646L1120 643M1130 642L1154 638M1053 663L1093 657M1093 657L1132 650M1142 649L1153 647M1153 647L1154 647M1053 662L1073 662M1075 662L1101 660M1103 660L1147 659M1053 681L1092 675M1098 674L1129 669M1150 665L1154 665M1053 689L1083 684M1089 683L1133 676M1133 676L1154 673M1113 691L1152 690M1152 690L1154 689M1053 704L1071 702M1075 702L1094 700M1096 700L1140 696M1152 695L1154 695M1053 718L1063 717M1071 716L1110 709M1133 705L1145 703M1148 703L1154 702M1053 722L1083 720M1083 720L1113 718M1119 717L1154 715M1136 723L1154 722M1131 733L1145 732M1153 731L1154 731M1150 632L1148 669M1148 669L1146 699M1146 699L1145 710M1145 710L1144 733M1134 669L1132 696M1132 704L1131 715M1130 726L1130 733M1123 632L1118 671M1118 671L1116 692M1115 697L1111 727M1111 727L1110 733M1111 632L1104 671M1104 674L1097 716M1097 716L1095 733M1088 632L1087 645M1087 648L1085 669M1085 677L1084 693M1083 706L1081 733M1069 632L1065 670M1065 670L1062 711M1062 711L1060 733M480 727L489 730M454 727L484 735M423 727L457 742M463 744L478 750M388 727L407 733M407 733L433 742M438 744L471 755M480 758L489 762M388 738L408 746M435 757L470 771M479 774L489 778M421 767L458 781M461 782L473 786M473 786L489 792M388 763L397 766M434 780L469 792M469 792L489 800M388 773L410 784M410 784L426 791M434 795L462 808M388 787L421 797M434 801L465 810M465 810L489 818M388 803L402 807M449 820L465 824M472 826L480 828M388 805L429 824M429 824L438 828M489 795L478 817M478 817L473 828M489 749L481 770M481 771L467 808M463 819L459 828M486 727L470 763M468 767L459 785M456 793L442 822M462 743L455 757M455 757L451 767M451 767L438 795M434 804L424 828M445 727L440 744M423 806L419 818M419 818L417 828M443 727L437 739M428 756L417 777M421 727L407 757M403 727L394 751M567 727L584 735M546 727L564 735M570 738L584 745M510 727L549 740M549 740L584 752M483 734L516 744M556 755L574 760M577 761L584 763M483 732L509 744M509 744L533 756M537 758L562 770M483 752L513 762M547 773L573 781M483 755L506 764M506 764L533 774M541 777L551 781M560 784L580 792M519 780L530 785M538 788L553 794M561 798L584 807M483 775L504 783M504 783L523 792M575 814L584 818M553 811L567 815M578 818L584 820M483 794L494 798M494 798L518 808M546 819L571 828M483 810L520 821M520 821L546 828M483 817L501 824M502 824L511 828M584 817L579 828M584 782L567 821M567 821L564 828M584 751L574 777M569 789L557 819M555 824L553 828M576 727L559 763M559 763L553 776M574 727L551 764M546 772L529 799M529 799L523 810M523 810L511 828M544 727L527 766M524 774L513 797M512 801L500 828M528 727L523 737M522 741L504 779M504 779L497 793M492 804L483 823M511 727L500 751M499 753L486 783M484 789L483 790M491 727L483 747M637 727L663 734M663 734L679 739M643 735L659 740M671 744L679 746M584 727L600 732M651 746L676 754M578 736L592 740M592 740L615 747M625 750L664 762M665 763L679 767M606 749L642 764M642 764L669 776M669 776L679 780M679 780L679 780M603 752L612 757M612 757L644 772M650 775L677 788M605 770L622 774M622 774L655 783M667 786L679 789M578 766L588 770M601 775L638 788M656 795L679 804M578 774L604 783M610 785L650 799M674 807L679 809M578 780L601 791M608 794L634 805M646 811L666 820M673 823L679 826M578 796L588 799M588 799L599 803M599 803L615 808M615 808L632 813M642 816L668 824M668 824L679 828M620 818L635 824M612 825L619 828M679 817L675 828M679 781L666 809M666 809L657 828M668 775L664 792M664 792L656 819M657 768L650 791M648 799L639 828M656 727L649 747M649 747L643 769M626 822L624 828M627 775L616 804M616 804L607 828M633 727L622 761M619 767L609 796M622 727L607 763M606 766L599 783M599 783L593 797M589 806L580 828M612 727L597 766M581 808L578 816M594 727L583 767M583 767L578 783M579 727L578 730M673 749L690 736M683 761L714 737M714 737L724 729M724 729L727 727M673 775L706 753M706 753L726 740M736 733L745 727M723 758L743 745M673 800L692 788M763 743L774 736M673 814L681 807M686 804L713 785M713 785L748 760M768 746L774 741M686 828L720 799M728 792L761 766M761 766L774 754M714 810L748 788M720 828L734 817M734 817L753 802M758 805L773 794M745 828L769 811M768 727L774 735M741 727L758 745M758 745L774 762M724 727L739 741M739 741L761 762M764 765L774 775M743 771L771 803M771 803L774 806M706 755L714 762M714 762L725 771M733 778L757 797M767 806L774 811M673 749L704 777M704 777L713 785M673 769L689 783M689 783L716 805M673 788L694 808M699 814L715 828M690 821L697 828M866 727L869 728M826 727L853 738M853 738L869 744M785 727L809 734M820 737L841 744M856 748L869 752M772 727L801 737M805 739L838 751M838 751L869 763M768 736L809 748M809 748L839 757M779 747L790 752M819 764L842 774M845 775L857 781M768 758L802 768M802 768L833 778M859 786L869 789M768 762L801 776M801 776L818 782M841 792L869 804M768 770L809 786M812 787L850 802M850 802L869 810M768 784L796 793M798 794L815 799M820 801L835 806M835 806L867 817M867 817L869 817M804 802L842 819M842 819L861 828M768 797L779 801M786 804L825 820M825 820L840 826M840 826L846 828M768 804L783 811M783 811L818 828M768 825L781 828M869 770L861 807M858 819L856 828M865 727L859 756M864 727L853 757M842 787L828 828M838 727L833 758M828 787L824 814M835 727L828 747M827 752L813 791M818 727L810 756M797 801L792 818M792 818L789 828M815 727L801 764M801 764L788 800M788 800L778 828M778 809L775 828M782 727L770 768M770 768L768 773M863 732L870 727M863 743L878 731M863 754L876 744M863 765L883 752M920 728L922 727M863 773L898 752M863 788L894 764M894 764L925 740M925 740L942 727M863 794L898 770M954 732L961 727M863 810L891 791M891 791L907 779M907 779L931 762M935 760L958 743M962 741L964 739M863 813L900 790M908 785L944 763M944 763L956 755M963 750L964 750M863 827L874 820M874 820L906 798M886 828L915 805M937 788L953 775M957 771L964 766M889 828L902 820M905 819L924 808M932 828L953 810M960 804L964 801M957 727L964 734M943 727L962 753M923 727L946 759M897 727L920 753M868 727L887 745M910 767L941 798M941 798L964 819M863 731L872 740M894 763L912 783M912 783L920 791M925 797L941 814M941 814L954 828M863 757L878 771M916 808L936 827M863 775L872 785M878 793L893 810M900 818L909 828M863 797L870 805M870 805L891 828M863 815L874 828M958 731L969 727M972 746L995 734M995 734L1007 727M958 757L981 749M1006 740L1027 733M1027 733L1044 727M958 777L988 763M988 763L1015 751M1031 743L1059 730M958 786L995 772M1016 765L1044 754M1058 749L1059 749M958 808L996 786M1005 781L1024 771M1024 771L1047 757M958 823L976 813M982 809L1005 796M1007 795L1043 775M1050 771L1059 765M958 825L996 809M999 808L1014 802M1025 798L1053 786M1026 811L1052 797M1055 795L1059 793M1015 828L1046 812M1046 812L1059 806M1046 828L1059 821M1055 727L1059 733M1022 727L1041 761M1042 763L1051 779M1058 790L1059 793M1004 727L1022 766M1022 766L1033 792M1038 803L1049 828M1001 760L1009 776M1011 779L1023 805M1025 808L1032 822M985 756L993 772M999 784L1008 801M1008 801L1017 819M968 762L980 784M982 788L996 812M996 812L1004 828M958 775L964 785M970 795L979 811M983 819L988 828M958 809L964 824M1053 737L1083 735M1093 735L1112 734M1053 751L1084 746M1084 746L1099 744M1099 744L1118 741M1081 758L1117 755M1117 755L1142 753M1151 752L1154 752M1053 769L1079 768M1080 768L1112 766M1118 766L1145 764M1145 764L1154 764M1119 768L1152 762M1053 790L1089 786M1063 793L1090 793M1090 793L1113 793M1113 793L1137 792M1149 792L1154 792M1093 804L1125 801M1125 801L1144 799M1144 799L1154 798M1053 819L1079 817M1079 817L1098 815M1124 813L1154 810M1074 828L1094 825M1099 824L1129 820M1148 727L1151 740M1151 740L1154 749M1140 727L1148 758M1135 771L1144 798M1144 798L1154 828M1115 727L1120 749M1122 757L1127 778M1127 778L1133 806M1137 821L1139 828M1104 727L1112 764M1118 792L1123 815M1125 821L1126 828M1088 727L1091 742M1091 742L1098 778M1104 811L1107 828M1074 727L1081 750M1095 795L1099 807M1099 807L1105 828M1065 727L1071 752M1071 752L1076 772M1076 772L1078 783M1087 818L1089 828M1065 784L1069 796M1069 796L1080 828M1053 785L1057 804M1059 812L1063 828M388 832L403 822M417 825L421 822M388 859L411 839M411 839L430 822M388 868L399 860M399 860L422 844M439 832L453 822M388 876L415 861M425 855L453 839M420 871L444 855M466 839L489 822M388 913L416 889M450 861L459 854M459 854L489 829M394 923L409 911M409 911L433 892M444 883L461 870M461 870L476 858M407 923L433 901M443 894L455 884M455 884L469 873M476 867L489 857M430 923L459 900M459 900L489 878M433 923L470 901M470 901L488 890M459 923L487 906M477 923L489 916M479 822L489 841M476 822L484 843M486 849L489 857M473 843L482 872M440 822L460 860M466 871L471 881M432 822L442 843M457 871L471 898M471 898L480 915M480 915L484 923M434 847L446 870M446 870L456 891M456 891L462 904M462 904L472 923M410 822L421 849M395 822L408 850M408 850L419 873M419 873L424 882M388 822L400 848M388 858L393 871M397 881L402 894M410 914L413 923M388 886L393 896M393 896L400 912M388 920L389 923M543 822L556 826M563 828L584 834M500 822L512 825M523 828L536 832M543 833L566 839M540 842L580 853M580 853L584 854M483 823L497 829M537 847L558 857M558 857L575 864M583 868L584 868M483 844L510 851M510 851L542 860M542 860L562 866M562 866L575 869M575 869L584 872M483 843L515 855M523 859L561 874M483 851L506 861M511 863L522 868M528 870L563 885M563 885L584 894M483 865L519 877M519 877L551 888M551 888L582 898M535 893L550 898M550 898L573 906M576 907L584 910M496 889L521 897M521 897L561 910M483 894L522 910M527 912L552 922M552 922L554 923M525 918L543 923M504 918L516 923M575 902L566 923M584 837L574 867M571 876L558 914M556 921L555 923M574 822L571 832M553 884L547 902M547 902L540 923M565 822L554 844M550 854L538 878M524 907L517 920M517 920L516 923M546 822L533 858M532 860L528 871M526 877L520 892M520 892L516 903M513 910L509 923M538 822L521 859M515 873L508 887M502 900L497 910M497 910L491 923M517 822L509 846M486 853L483 865M662 822L677 840M677 840L679 842M674 849L679 855M657 847L679 879M641 843L653 855M653 855L670 872M676 878L679 881M611 822L629 841M651 864L665 878M670 883L679 893M611 822L636 857M642 867L649 877M657 888L665 901M589 822L602 836M609 843L638 876M674 915L679 921M578 823L590 838M602 852L628 883M628 883L639 896M639 896L662 923M578 831L603 863M603 863L615 879M623 889L635 905M635 905L649 923M578 855L605 886M611 894L637 923M578 867L605 896M610 902L629 923M578 883L607 913M607 913L616 923M578 893L590 908M599 918L603 923M578 912L587 923M679 919L676 923M679 866L669 880M668 881L656 896M651 903L635 923M679 846L656 873M649 881L640 890M638 892L631 901M612 922L611 923M678 822L662 844M635 882L617 906M664 822L650 837M632 857L609 883M609 883L599 893M594 899L578 917M640 822L628 841M622 849L600 882M583 909L578 916M625 822L602 848M580 872L578 874M607 822L585 852M585 852L578 862M591 822L578 836M673 831L698 827M698 827L710 825M710 825L729 822M735 831L754 824M673 863L705 851M713 848L754 832M754 832L774 825M673 870L697 865M743 854L774 847M673 884L704 874M756 857L774 851M673 891L706 884M706 884L741 877M744 876L756 873M768 871L774 869M673 906L714 897M714 897L744 890M673 916L704 909M704 909L717 906M730 903L771 893M771 893L774 892M682 923L697 920M697 920L719 915M747 909L774 903M761 923L774 920M760 822L762 864M762 864L764 899M765 907L765 923M748 921L748 923M730 851L731 893M731 893L731 922M716 843L716 873M716 873L716 910M696 822L700 858M700 858L703 888M703 888L706 923M683 850L686 871M687 880L692 911M673 873L678 912M678 912L679 923M768 831L777 827M768 842L797 829M797 829L813 822M768 859L807 839M807 839L821 832M827 829L840 822M768 870L787 863M787 863L825 846M825 846L861 831M861 831L869 828M768 891L785 881M793 877L817 863M768 890L803 878M814 875L824 871M824 871L839 866M839 866L869 856M768 908L801 893M801 893L826 882M826 882L866 865M768 919L795 907M798 906L835 890M835 890L860 879M797 923L825 907M825 907L859 886M818 923L855 906M855 906L869 900M854 923L869 917M858 822L865 845M867 849L869 857M852 852L866 894M868 900L869 903M834 822L837 832M846 861L856 894M828 822L838 862M846 892L850 907M812 822L819 847M819 847L826 873M826 873L834 902M834 902L840 923M797 822L805 842M805 842L822 884M794 822L803 860M806 873L816 916M773 822L787 857M787 857L803 893M803 893L809 909M813 916L815 923M780 864L789 887M768 856L771 866M774 879L787 922M768 901L777 921M777 921L777 923M910 822L924 834M957 863L964 869M882 822L891 828M891 828L916 846M919 848L930 855M930 855L945 866M871 822L894 842M903 849L924 867M924 867L955 893M955 893L964 901M863 842L890 858M890 859L902 866M904 868L932 885M932 885L944 893M944 893L964 905M900 871L920 887M920 887L940 905M950 914L961 923M863 865L898 892M898 892L927 914M901 902L933 923M889 910L902 920M863 908L884 920M863 921L866 923M964 904L954 914M964 868L946 890M941 897L929 911M924 918L919 923M948 873L929 891M921 898L905 914M905 914L895 923M939 866L916 891M961 822L945 841M943 845L916 877M914 879L906 889M898 898L880 920M942 822L925 842M920 848L905 867M905 867L884 892M865 914L863 917M922 830L908 845M908 845L885 871M875 883L863 897M919 822L901 840M897 843L870 869M870 869L863 876M871 851L863 863M868 841L863 848M868 822L863 828M958 823L960 822M978 826L989 822M991 830L1004 825M958 852L975 845M987 839L1025 822M958 859L995 846M1004 843L1021 836M1022 836L1059 823M958 870L992 856M992 856L1031 840M1051 833L1059 830M958 883L982 874M982 874L1005 866M1005 866L1021 860M1021 860L1059 847M958 901L986 884M988 883L1009 871M1009 871L1019 864M1025 861L1059 841M958 914L985 899M995 893L1016 881M1025 876L1050 861M1055 859L1059 856M958 915L982 905M987 903L1004 896M1004 896L1029 886M1042 880L1058 873M1058 873L1059 873M958 922L970 918M975 916L1000 906M1000 906L1031 893M990 923L1017 913M1057 899L1059 898M1016 923L1053 910M1053 910L1059 908M1033 923L1053 915M1053 915L1059 913M1041 822L1047 837M1047 837L1056 860M1035 822L1049 860M1049 860L1058 884M1058 884L1059 887M1028 822L1036 853M1037 858L1039 868M1040 872L1047 898M1050 910L1054 923M1007 822L1020 854M1037 892L1050 923M999 822L1013 860M1013 860L1027 894M1031 906L1035 917M1035 917L1037 923M998 859L1016 897M1022 909L1029 923M970 822L979 842M979 842L989 865M989 865L999 889M983 881L996 912M958 847L972 881M977 891L981 903M981 903L990 923M958 879L962 890M1146 822L1154 834M1126 822L1143 839M1143 839L1154 850M1114 822L1134 848M1134 848L1154 875M1097 822L1122 849M1148 876L1154 882M1084 822L1096 836M1097 837L1110 854M1115 859L1126 873M1135 884L1144 894M1074 822L1094 853M1115 882L1129 904M1129 904L1142 923M1070 847L1089 866M1089 866L1118 898M1126 907L1141 923M1053 836L1067 853M1067 853L1093 885M1093 885L1102 898M1106 902L1115 913M1115 913L1122 923M1053 847L1075 879M1075 879L1082 889M1087 895L1105 922M1053 866L1070 889M1071 891L1080 902M1080 902L1089 915M1053 890L1069 910M1069 910L1080 923M1154 907L1127 923M1154 891L1121 909M1121 909L1095 923M1154 874L1138 886M1134 889L1113 905M1103 912L1089 923M1119 889L1092 911M1154 855L1129 872M1112 883L1097 893M1154 843L1140 851M1134 855L1108 871M1061 900L1053 905M1154 828L1118 852M1118 852L1109 858M1109 858L1088 872M1088 872L1057 892M1119 836L1087 857M1087 857L1059 876M1059 876L1053 880M1119 822L1109 830M1105 833L1076 855M1056 870L1053 872M1113 822L1095 833M1063 852L1053 858M1069 822L1053 833M485 917L489 923M476 917L489 935M458 917L468 928M448 917L475 949M435 917L453 937M455 939L479 964M423 917L450 951M450 951L459 964M459 964L476 985M425 936L449 964M449 964L467 984M470 988L486 1006M388 917L406 934M410 939L435 964M435 964L452 980M457 985L484 1011M394 917L400 926M415 947L432 971M439 981L465 1016M465 1016L466 1018M388 937L402 952M431 980L442 991M442 991L452 1001M457 1007L469 1018M388 943L404 963M413 976L433 1003M433 1003L445 1018M418 996L425 1005M388 984L412 1007M419 1015L423 1018M399 1008L407 1018M388 1006L397 1018M489 1016L486 1018M489 1002L479 1008M479 1008L464 1018M464 1005L454 1014M453 1014L450 1018M489 959L471 976M458 988L450 995M439 1005L424 1018M489 956L462 973M450 981L424 998M399 1015L394 1018M489 931L477 942M474 943L454 962M452 963L438 975M435 978L407 1003M478 917L457 936M431 959L402 984M455 927L447 934M447 934L426 951M426 951L395 976M395 976L388 982M449 917L415 944M415 944L405 952M396 958L388 965M483 923L520 922M520 922L558 920M483 943L504 939M504 939L538 933M483 953L526 947M527 947L567 941M572 940L584 939M483 958L501 956M501 956L513 955M520 955L552 952M552 952L579 950M483 964L518 962M518 962L562 961M483 975L507 975M513 974L536 974M536 974L558 974M559 974L583 973M483 991L501 988M504 988L547 980M547 980L584 974M483 1000L513 998M553 995L580 994M584 994L584 994M537 1006L577 1006M577 1006L584 1006M496 1016L516 1015M516 1015L536 1014M562 1013L584 1011M567 917L571 945M571 945L573 963M573 963L578 1006M578 1006L579 1018M558 917L561 934M566 979L570 1009M571 1016L571 1018M557 917L554 947M554 947L552 976M552 977L549 1014M545 928L545 941M545 950L544 970M544 978L543 1018M532 917L531 940M531 940L531 955M530 965L530 990M529 1001L529 1018M526 917L525 954M522 1016L521 1018M510 917L509 946M508 978L507 997M507 1002L506 1018M501 917L502 948M502 955L503 997M492 917L492 932M492 939L491 971M483 997L484 1008M650 917L679 938M622 917L638 928M638 928L657 941M657 941L678 956M678 956L679 956M645 942L675 967M598 917L618 934M618 934L652 961M655 964L663 970M663 970L679 983M581 917L589 924M639 965L647 971M578 935L590 943M663 992L679 1002M578 948L604 969M632 992L642 1001M594 971L618 990M578 987L589 996M609 1011L617 1018M578 1003L603 1018M679 1002L665 1018M679 988L653 1018M679 976L668 985M666 987L633 1016M633 1016L631 1018M679 953L660 970M628 999L608 1018M656 957L626 988M626 988L606 1009M605 1009L597 1018M679 917L671 925M671 925L661 935M625 971L605 991M595 1001L586 1010M585 1011L578 1018M642 949L628 961M602 983L580 1001M628 938L605 963M605 963L582 986M626 917L613 932M607 939L579 973M620 917L607 929M607 929L592 942M592 942L582 951M604 917L596 924M587 917L578 925M774 917L774 917M754 917L774 938M725 917L735 928M735 928L764 960M764 960L774 971M709 917L716 924M740 951L755 968M699 917L725 948M726 948L738 963M753 981L774 1007M688 917L701 934M701 934L725 965M725 965L752 1000M752 1000L758 1008M765 1017L766 1018M701 957L727 985M727 985L751 1012M673 943L698 973M698 973L721 1001M673 971L700 997M707 1004L721 1018M673 981L695 1014M673 999L690 1018M774 1003L765 1011M758 1017L757 1018M743 1009L733 1018M774 960L748 982M748 982L727 1001M724 1004L708 1018M774 934L755 952M755 952L743 964M743 964L716 990M774 921L752 939M752 939L732 956M732 956L716 969M716 969L681 997M681 997L673 1004M742 917L714 943M714 943L683 972M683 973L673 982M725 917L696 944M688 926L673 940M850 917L869 921M798 917L817 921M768 919L798 925M810 928L831 932M852 936L869 940M768 935L803 938M808 939L851 943M851 943L869 944M768 946L802 949M768 953L812 956M812 956L833 958M833 958L847 959M768 956L801 962M817 965L852 971M852 971L869 975M781 963L823 974M825 974L861 984M792 974L819 980M819 980L853 988M855 989L869 992M768 984L797 989M797 989L838 996M840 996L855 999M863 1000L869 1001M768 988L806 998M807 998L849 1009M861 1012L869 1014M768 1001L797 1005M855 1011L869 1013M768 1004L812 1012M820 1013L836 1016M836 1016L845 1018M768 1013L791 1018M869 917L869 922M855 917L858 948M860 968L863 1003M863 1003L865 1017M856 917L853 952M853 952L852 974M851 987L849 1010M849 1010L848 1018M840 939L841 965M828 917L828 930M828 985L829 1018M822 979L821 1004M815 917L813 945M812 983L811 1001M811 1001L810 1018M800 936L802 972M802 972L804 1004M796 917L793 947M793 953L789 995M789 1001L787 1018M774 917L775 941M775 941L778 980M769 917L769 934M768 939L768 945M958 917L964 923M949 917L962 933M933 917L958 942M960 945L964 949M928 917L955 947M955 947L964 957M908 917L924 941M940 964L960 993M960 993L964 1000M916 948L934 973M940 981L947 991M885 917L907 949M907 949L915 961M928 980L941 997M941 997L955 1018M869 917L886 937M893 945L922 979M922 979L941 1000M941 1000L956 1018M863 927L885 950M892 957L901 967M901 967L926 993M932 1000L949 1018M863 936L889 970M894 976L920 1011M863 956L892 985M892 985L914 1006M914 1006L924 1016M887 997L902 1018M863 976L882 998M882 998L900 1018M863 991L882 1018M863 1008L870 1018M964 1014L956 1018M964 991L945 1003M942 1004L925 1015M923 1016L920 1018M912 1006L891 1018M964 962L928 982M922 985L894 1002M880 1010L866 1018M964 936L944 950M944 950L915 972M899 983L889 990M881 996L863 1009M942 932L910 953M909 954L883 972M879 974L863 985M940 917L916 933M914 935L904 942M894 949L863 970M917 917L906 923M906 923L888 934M888 934L865 946M878 917L863 924M1048 917L1059 931M1035 917L1059 943M1027 917L1036 929M1050 947L1059 960M1009 917L1028 938M1030 941L1046 959M1053 967L1059 974M997 917L1021 948M1027 957L1049 986M1054 993L1059 999M995 930L1001 939M1023 968L1048 1001M1048 1001L1058 1014M971 917L997 951M1015 976L1032 999M1032 999L1046 1018M965 936L976 948M984 957L1000 975M1000 975L1027 1004M958 937L982 967M982 967L1009 1002M1009 1002L1022 1018M958 958L989 991M989 991L1008 1011M958 974L984 1003M992 1011L998 1018M958 1018L958 1018M1059 1001L1033 1017M1059 984L1037 998M1036 999L1006 1018M1027 991L1014 998M1009 1001L979 1018M1059 949L1042 959M1042 959L1025 969M1025 969L997 986M979 998L958 1010M1059 942L1030 957M1030 957L990 977M978 983L960 992M1059 919L1046 926M1042 929L1028 937M998 954L970 971M970 971L958 978M1037 917L1014 930M1014 930L975 952M964 957L958 961M985 933L958 950M991 917L970 928M959 917L958 917M1053 919L1059 917M1053 929L1079 918M1053 941L1066 934M1072 930L1094 917M1053 947L1074 938M1074 938L1095 929M1095 929L1108 924M1108 924L1119 919M1053 958L1064 954M1064 954L1105 936M1109 935L1142 921M1142 921L1150 917M1053 974L1073 963M1073 963L1107 944M1107 944L1134 929M1053 976L1063 973M1116 953L1147 941M1153 939L1154 939M1053 994L1087 979M1091 977L1101 973M1101 973L1113 968M1121 965L1152 951M1053 1011L1082 995M1064 1018L1090 1002M1092 1001L1116 987M1054 1018L1074 1011M1096 1003L1118 995M1118 995L1132 991M1091 1018L1126 1003M1117 1018L1133 1009M1148 917L1154 930M1146 938L1154 950M1111 917L1125 943M1125 943L1134 960M1144 977L1150 989M1097 917L1107 936M1133 988L1147 1015M1075 917L1084 932M1091 945L1106 968M1134 1015L1136 1018M1067 917L1084 953M1099 987L1110 1010M1053 935L1071 972M1053 992L1063 1009M1063 1009L1068 1018" stroke="#fff" stroke-width="1.5" fill="none"/>
<path d="M422.6,415.2 C420.2,409.5 426.4,392.5 429.8,381.2 C433.2,369.9 439.1,354.9 443.2,347.2 C447.2,339.5 445.8,340.0 454.1,335.1 C462.4,330.2 479.2,322.4 493.0,318.1 C506.8,313.9 525.3,310.4 536.6,309.6 C547.9,308.8 554.8,310.7 560.9,313.3 C567.0,315.9 571.8,321.8 573.0,325.4 C574.2,329.0 566.6,325.8 568.2,335.1 C569.8,344.4 579.9,368.2 582.7,381.2 C585.5,394.1 585.2,399.4 585.2,412.8 C585.2,426.2 586.8,451.6 582.7,461.3 C578.7,471.0 571.8,468.8 560.9,471.0 C550.0,473.2 528.5,475.1 517.2,474.7 C505.9,474.3 500.3,471.2 493.0,468.6 C485.7,466.0 481.6,467.8 473.5,458.9 C465.4,450.0 452.9,422.5 444.4,415.2 C435.9,407.9 425.0,420.9 422.6,415.2Z" fill="#a7d7b0" stroke="none" stroke-width="0" stroke-linejoin="round" stroke-linecap="round" />
<polygon points="415.3,290.2 463.8,259.9 493.0,278.0 514.8,306.0 517.2,313.3 483.2,320.5 463.8,310.8 446.8,303.5" fill="#a7d7b0" />
<polygon points="391.0,616.0 450.0,613.0 486.0,614.0 500.0,637.0 517.0,666.5 532.0,709.0 538.0,726.0 530.0,733.0 470.0,735.0 391.0,736.0" fill="#a7d7b0" />
<polygon points="550.8,717.0 604.7,680.4 618.0,696.0 625.0,730.6 552.7,731.0" fill="#a7d7b0" />
<polygon points="545.7,736.0 603.7,734.0 603.7,769.4 582.0,781.5 565.0,769.4" fill="#a7d7b0" />
<path d="M626.0,731.0 C635.0,723.6 667.2,705.6 680.0,699.7 C692.8,693.8 697.9,693.9 703.0,695.8 C708.1,697.7 710.3,703.0 710.6,711.0 C710.9,719.0 711.1,737.8 705.0,744.0 C698.9,750.2 685.9,746.4 674.0,748.0 C662.1,749.6 641.6,754.3 633.6,753.6 C625.6,752.9 627.3,747.8 626.0,744.0 C624.7,740.2 617.0,738.4 626.0,731.0Z" fill="#a7d7b0" stroke="none" stroke-width="0" stroke-linejoin="round" stroke-linecap="round" />
<polygon points="748.0,700.0 752.0,680.0 765.0,660.0 778.0,648.0 782.0,652.0 770.0,668.0 758.0,690.0 754.0,705.0" fill="#a7d7b0" />
<polygon points="787.0,800.0 805.0,785.0 812.0,790.0 796.0,815.0" fill="#a7d7b0" />
<rect x="687.8" y="325.4" width="19" height="17" fill="#a7d7b0" rx="1"/>
<rect x="826.2" y="298.7" width="22" height="27" fill="#a7d7b0" rx="1"/>
<rect x="760.6" y="276.8" width="17" height="10" fill="#a7d7b0" rx="1"/>
<rect x="811.6" y="267" width="8" height="17" fill="#a7d7b0" rx="1"/>
<rect x="787" y="320" width="12" height="10" fill="#a7d7b0" rx="1"/>
<rect x="853" y="337" width="8" height="10" fill="#a7d7b0" rx="1"/>
<rect x="1011.3" y="290.2" width="19" height="16" fill="#a7d7b0" rx="1"/>
<rect x="1016.2" y="330.2" width="39" height="29" fill="#a7d7b0" rx="1"/>
<rect x="980" y="325" width="7" height="8" fill="#a7d7b0" rx="1"/>
<rect x="507.5" y="567" width="7" height="10" fill="#a7d7b0" rx="1"/>
<rect x="536.6" y="617.9" width="12" height="10" fill="#a7d7b0" rx="1"/>
<rect x="585.2" y="559.7" width="10" height="8" fill="#a7d7b0" rx="1"/>
<rect x="789.8" y="554.8" width="27" height="17" fill="#a7d7b0" rx="1"/>
<rect x="695" y="528" width="12" height="10" fill="#a7d7b0" rx="1"/>
<rect x="751" y="528" width="10" height="10" fill="#a7d7b0" rx="1"/>
<rect x="813" y="536" width="8" height="8" fill="#a7d7b0" rx="1"/>
<rect x="680" y="575" width="8" height="8" fill="#a7d7b0" rx="1"/>
<rect x="953" y="523" width="17" height="10" fill="#a7d7b0" rx="1"/>
<rect x="941" y="588.8" width="10" height="12" fill="#a7d7b0" rx="1"/>
<rect x="926" y="512" width="10" height="8" fill="#a7d7b0" rx="1"/>
<rect x="950.3" y="784" width="14" height="14" fill="#a7d7b0" rx="1"/>
<rect x="969.7" y="784" width="15" height="17" fill="#a7d7b0" rx="1"/>
<rect x="1010.8" y="846.8" width="19" height="15" fill="#a7d7b0" rx="1"/>
<rect x="986.6" y="871" width="22" height="17" fill="#a7d7b0" rx="1"/>
<rect x="1051.9" y="897.5" width="22" height="15" fill="#a7d7b0" rx="1"/>
<rect x="975" y="845" width="17" height="8" fill="#a7d7b0" rx="1"/>
<rect x="940" y="840" width="10" height="10" fill="#a7d7b0" rx="1"/>
<rect x="482.9" y="781.5" width="14" height="44" fill="#a7d7b0" rx="1"/>
<rect x="469" y="813" width="8" height="15" fill="#a7d7b0" rx="1"/>
<rect x="463.5" y="888" width="40" height="35" fill="#a7d7b0" rx="1"/>
<rect x="505" y="900" width="25" height="35" fill="#a7d7b0" rx="1"/>
<rect x="405" y="770" width="10" height="8" fill="#a7d7b0" rx="1"/>
<rect x="395" y="790" width="10" height="8" fill="#a7d7b0" rx="1"/>
<rect x="540" y="880" width="10" height="10" fill="#a7d7b0" rx="1"/>
<rect x="810" y="725" width="10" height="10" fill="#a7d7b0" rx="1"/>
<rect x="860" y="703" width="12" height="8" fill="#a7d7b0" rx="1"/>
<rect x="885" y="700" width="8" height="10" fill="#a7d7b0" rx="1"/>
<rect x="880" y="810" width="12" height="14" fill="#a7d7b0" rx="1"/>
<rect x="900" y="870" width="14" height="14" fill="#a7d7b0" rx="1"/>
<rect x="1105" y="790" width="9" height="18" fill="#a7d7b0" rx="1"/>
<rect x="1095" y="900" width="19" height="35" fill="#a7d7b0" rx="1"/>
<rect x="420" y="912" width="15" height="10" fill="#a7d7b0" rx="1"/>
<rect x="792" y="850" width="25" height="20" fill="#a7d7b0" rx="1"/>
<rect x="780" y="880" width="14" height="14" fill="#a7d7b0" rx="1"/>
<rect x="838" y="720" width="10" height="12" fill="#a7d7b0" rx="1"/>
<rect x="900" y="760" width="10" height="10" fill="#a7d7b0" rx="1"/>
<rect x="800" y="900" width="10" height="20" fill="#a7d7b0" rx="1"/>
<rect x="650" y="320" width="10" height="8" fill="#a7d7b0" rx="1"/>
<rect x="445" y="280" width="20" height="10" fill="#a7d7b0" rx="1"/>
<rect x="916.7" y="540.3" width="19" height="19" fill="#f5dede"/>
<rect x="1076.9" y="347.2" width="22" height="15" fill="#f5dede"/>
<rect x="777" y="755" width="22" height="40" fill="#f9e4e4"/>
<rect x="391" y="885" width="10" height="30" fill="#f5dede"/>
<path d="M697.0,935.0 C699.8,930.8 708.7,918.7 714.0,910.0 C719.3,901.3 725.0,892.3 729.0,883.0 C733.0,873.7 735.8,863.7 738.0,854.0 C740.2,844.3 740.7,837.0 742.0,825.0 C743.3,813.0 744.7,795.3 746.0,782.0 C747.3,768.7 748.8,754.5 750.0,745.0 C751.2,735.5 752.0,732.8 753.0,725.0 C754.0,717.2 754.3,706.8 756.0,698.0 C757.7,689.2 759.9,679.7 763.4,672.4 C766.9,665.1 771.6,659.4 776.9,654.4 C782.1,649.4 788.2,645.5 794.9,642.5 C801.6,639.5 808.6,638.0 817.3,636.5 C826.0,635.0 833.5,634.1 847.3,633.5 C861.1,632.9 882.4,632.1 900.0,632.7 C917.6,633.3 937.3,634.5 953.0,637.3 C968.7,640.1 981.9,646.2 994.4,649.5 C1006.9,652.8 1016.2,654.4 1028.3,656.8 C1040.4,659.2 1052.9,660.8 1067.2,664.0 C1081.5,667.2 1103.5,673.5 1114.0,676.2 C1124.5,678.9 1127.3,679.4 1130.0,680.0 L1130.0,705.0 C1127.3,704.2 1124.5,704.0 1114.0,700.4 C1103.5,696.8 1081.5,688.0 1067.2,683.5 C1052.9,679.0 1042.5,676.1 1028.3,673.7 C1014.1,671.3 996.0,671.7 982.2,668.9 C968.5,666.1 959.5,659.2 945.8,656.8 C932.1,654.4 915.2,654.0 900.0,654.4 C884.8,654.8 867.3,657.1 854.8,658.9 C842.3,660.6 833.3,662.1 824.8,664.9 C816.3,667.6 810.1,671.4 803.9,675.4 C797.7,679.4 791.4,684.1 787.4,688.9 C783.4,693.6 781.4,697.9 779.9,703.9 C778.4,709.9 778.9,717.1 778.4,724.8 C777.9,732.5 778.4,740.5 777.0,750.0 C775.6,759.5 771.6,768.6 770.0,781.5 C768.4,794.4 768.6,815.3 767.4,827.4 C766.1,839.5 764.9,844.7 762.5,854.0 C760.1,863.3 756.9,873.7 752.9,883.0 C748.9,892.3 742.9,900.9 738.4,909.6 C733.9,918.3 729.1,928.3 726.0,935.0 C722.9,941.7 726.0,947.5 720.0,950.0 C714.0,952.5 695.0,950.0 690.0,950.0Z" fill="#9dc1f7" stroke="none" stroke-width="0" stroke-linejoin="round" stroke-linecap="round" />
<path d="M461.4,403.0 C461.8,401.4 469.1,402.7 473.5,405.5 C477.9,408.3 483.2,420.0 488.1,420.0 C493.0,420.0 501.1,404.7 502.7,405.5 C504.3,406.3 499.4,419.6 497.8,424.9 C496.2,430.1 495.4,435.4 493.0,437.0 C490.6,438.6 486.8,438.2 483.2,434.6 C479.6,431.0 474.7,420.5 471.1,415.2 C467.5,409.9 461.0,404.6 461.4,403.0Z" fill="#9dc1f7" stroke="none" stroke-width="0" stroke-linejoin="round" stroke-linecap="round" />
<path d="M391.0,689.0 C397.5,686.5 416.8,689.2 430.0,690.0 C443.2,690.8 462.0,691.5 470.0,694.0 C478.0,696.5 479.7,702.0 478.0,705.0 C476.3,708.0 469.7,711.5 460.0,712.0 C450.3,712.5 431.5,709.2 420.0,708.0 C408.5,706.8 395.8,708.2 391.0,705.0 C386.2,701.8 384.5,691.5 391.0,689.0Z" fill="#9dc1f7" stroke="none" stroke-width="0" stroke-linejoin="round" stroke-linecap="round" />
<path d="M632.0,746.0 C635.3,743.5 650.3,739.0 660.0,735.0 C669.7,731.0 682.8,725.0 690.0,722.0 C697.2,719.0 701.3,716.0 703.0,717.0 C704.7,718.0 705.5,724.2 700.0,728.0 C694.5,731.8 680.0,736.3 670.0,740.0 C660.0,743.7 646.3,749.0 640.0,750.0 C633.7,751.0 628.7,748.5 632.0,746.0Z" fill="#9dc1f7" stroke="none" stroke-width="0" stroke-linejoin="round" stroke-linecap="round" />
<path d="M582.0,760.0 C581.7,757.0 589.0,752.0 592.0,752.0 C595.0,752.0 599.7,757.0 600.0,760.0 C600.3,763.0 597.0,770.0 594.0,770.0 C591.0,770.0 582.3,763.0 582.0,760.0Z" fill="#9dc1f7" stroke="none" stroke-width="0" stroke-linejoin="round" stroke-linecap="round" />
<polyline points="538.0,308.0 546.0,283.0 567.0,272.0 599.0,257.0 610.0,259.5 621.0,266.0 649.0,270.0 666.0,282.0 683.0,298.0 705.0,313.0 713.0,322.0 724.0,337.5 755.8,335.0 809.2,340.0" fill="none" stroke="#9dc1f7" stroke-width="2.8" stroke-linejoin="round" stroke-linecap="round" />
<polyline points="907.0,361.8 941.0,366.7 999.2,335.0 1028.3,310.8 1047.8,308.4 1114.0,318.0" fill="none" stroke="#9dc1f7" stroke-width="3" stroke-linejoin="round" stroke-linecap="round" />
<polyline points="941.0,366.7 953.0,398.2" fill="none" stroke="#9dc1f7" stroke-width="3" stroke-linejoin="round" stroke-linecap="round" />
<polyline points="952.0,372.0 962.0,392.0" fill="none" stroke="#9dc1f7" stroke-width="2.5" stroke-linejoin="round" stroke-linecap="round" />
<path d="M452.0,332.0 C460.0,329.3 483.7,319.7 500.0,316.0 C516.3,312.3 538.7,309.7 550.0,310.0 C561.3,310.3 565.0,316.7 568.0,318.0" fill="none" stroke="#8fb8ea" stroke-width="2" stroke-linejoin="round" stroke-linecap="round" />
<path d="M391.0,442.0 C396.3,438.8 415.8,431.2 422.6,422.5 C429.4,413.8 427.4,402.9 432.0,390.0 C436.6,377.1 447.0,352.5 450.0,345.0" fill="none" stroke="#8fb8ea" stroke-width="2" stroke-linejoin="round" stroke-linecap="round" />
<polyline points="760.0,352.0 762.0,375.0" fill="none" stroke="#9dc1f7" stroke-width="4" stroke-linejoin="round" stroke-linecap="round" />
<path d="M391.0,611.0 C400.8,610.5 432.3,608.8 450.0,608.0 C467.7,607.2 489.2,606.3 497.0,606.0" fill="none" stroke="#fff" stroke-width="4" stroke-linejoin="round" stroke-linecap="round" />
<path d="M493.0,606.0 C504.2,604.2 540.5,598.0 560.0,595.0 C579.5,592.0 593.3,591.3 610.0,588.0 C626.7,584.7 645.0,578.3 660.0,575.0 C675.0,571.7 683.3,570.5 700.0,568.0 C716.7,565.5 750.0,561.3 760.0,560.0" fill="none" stroke="#fff" stroke-width="4" stroke-linejoin="round" stroke-linecap="round" />
<path d="M537.0,727.0 C544.2,722.5 568.8,707.5 580.0,700.0 C591.2,692.5 594.0,689.5 604.0,682.0 C614.0,674.5 625.7,664.5 640.0,655.0 C654.3,645.5 681.7,630.0 690.0,625.0" fill="none" stroke="#fff" stroke-width="4" stroke-linejoin="round" stroke-linecap="round" />
<path d="M545.0,734.0 C554.7,734.2 589.8,734.7 603.0,735.0 C616.2,735.3 620.5,735.8 624.0,736.0" fill="none" stroke="#fff" stroke-width="4" stroke-linejoin="round" stroke-linecap="round" />
<path d="M624.0,736.0 C631.7,732.7 655.7,722.0 670.0,716.0 C684.3,710.0 703.3,702.7 710.0,700.0" fill="none" stroke="#fff" stroke-width="4" stroke-linejoin="round" stroke-linecap="round" />
<path d="M624.0,750.0 C631.7,750.3 655.7,751.7 670.0,752.0 C684.3,752.3 703.3,752.0 710.0,752.0" fill="none" stroke="#fff" stroke-width="4" stroke-linejoin="round" stroke-linecap="round" />
<path d="M600.0,775.0 C608.3,773.8 631.3,770.5 650.0,768.0 C668.7,765.5 701.7,761.3 712.0,760.0" fill="none" stroke="#fff" stroke-width="4" stroke-linejoin="round" stroke-linecap="round" />
<path d="M712.0,630.0 C712.0,641.7 711.7,678.3 712.0,700.0 C712.3,721.7 714.0,743.3 714.0,760.0 C714.0,776.7 712.3,793.3 712.0,800.0" fill="none" stroke="#fff" stroke-width="4" stroke-linejoin="round" stroke-linecap="round" />
<path d="M690.0,625.0 C698.3,622.8 721.7,615.3 740.0,612.0 C758.3,608.7 780.0,607.0 800.0,605.0 C820.0,603.0 850.0,600.8 860.0,600.0" fill="none" stroke="#fff" stroke-width="4" stroke-linejoin="round" stroke-linecap="round" />
<path d="M610.0,545.0 C621.7,544.2 655.0,540.8 680.0,540.0 C705.0,539.2 730.0,543.0 760.0,540.0 C790.0,537.0 830.0,525.7 860.0,522.0 C890.0,518.3 926.7,518.7 940.0,518.0" fill="none" stroke="#fff" stroke-width="4" stroke-linejoin="round" stroke-linecap="round" />
<path d="M780.0,610.0 C793.3,608.3 833.3,602.5 860.0,600.0 C886.7,597.5 916.7,597.5 940.0,595.0 C963.3,592.5 980.0,588.8 1000.0,585.0 C1020.0,581.2 1041.0,575.3 1060.0,572.0 C1079.0,568.7 1105.0,566.2 1114.0,565.0" fill="none" stroke="#fff" stroke-width="4" stroke-linejoin="round" stroke-linecap="round" />
<path d="M830.0,700.0 C841.7,700.0 878.3,699.2 900.0,700.0 C921.7,700.8 950.0,704.2 960.0,705.0" fill="none" stroke="#fff" stroke-width="4" stroke-linejoin="round" stroke-linecap="round" />
<path d="M882.0,655.0 C883.3,667.5 882.8,701.7 890.0,730.0 C897.2,758.3 919.2,809.2 925.0,825.0" fill="none" stroke="#fff" stroke-width="4" stroke-linejoin="round" stroke-linecap="round" />
<path d="M1000.0,655.0 C997.5,665.8 989.2,705.0 985.0,720.0 C980.8,735.0 985.0,727.5 975.0,745.0 C965.0,762.5 933.3,811.7 925.0,825.0" fill="none" stroke="#fff" stroke-width="4" stroke-linejoin="round" stroke-linecap="round" />
<path d="M790.0,840.0 C801.7,838.3 837.5,832.5 860.0,830.0 C882.5,827.5 914.2,825.8 925.0,825.0" fill="none" stroke="#fff" stroke-width="4" stroke-linejoin="round" stroke-linecap="round" />
<path d="M772.0,790.0 C775.0,790.0 780.3,795.0 790.0,790.0 C799.7,785.0 815.0,768.3 830.0,760.0 C845.0,751.7 871.7,743.3 880.0,740.0" fill="none" stroke="#fff" stroke-width="4" stroke-linejoin="round" stroke-linecap="round" />
<path d="M585.0,300.0 C590.8,308.3 610.8,330.0 620.0,350.0 C629.2,370.0 633.3,404.0 640.0,420.0 C646.7,436.0 656.7,441.7 660.0,446.0" fill="none" stroke="#fff" stroke-width="4" stroke-linejoin="round" stroke-linecap="round" />
<path d="M790.0,260.0 C791.7,271.7 795.8,309.2 800.0,330.0 C804.2,350.8 812.5,375.8 815.0,385.0" fill="none" stroke="#fff" stroke-width="4" stroke-linejoin="round" stroke-linecap="round" />
<path d="M873.0,385.0 C877.5,395.8 887.8,427.5 900.0,450.0 C912.2,472.5 938.3,508.3 946.0,520.0" fill="none" stroke="#fff" stroke-width="4" stroke-linejoin="round" stroke-linecap="round" />
<path d="M1040.0,255.0 C1038.3,265.8 1036.7,289.2 1030.0,320.0 C1023.3,350.8 1006.7,406.7 1000.0,440.0 C993.3,473.3 992.5,495.8 990.0,520.0 C987.5,544.2 985.8,574.2 985.0,585.0" fill="none" stroke="#fff" stroke-width="4" stroke-linejoin="round" stroke-linecap="round" />
<path d="M391.0,735.0 C400.8,735.2 426.8,736.5 450.0,736.0 C473.2,735.5 516.7,732.7 530.0,732.0" fill="none" stroke="#fff" stroke-width="4" stroke-linejoin="round" stroke-linecap="round" />
<path d="M560.0,860.0 C570.0,856.7 596.7,845.8 620.0,840.0 C643.3,834.2 679.7,828.3 700.0,825.0 C720.3,821.7 735.0,820.8 742.0,820.0" fill="none" stroke="#fff" stroke-width="4" stroke-linejoin="round" stroke-linecap="round" />
<path d="M560.0,757.0 C566.7,764.2 586.7,782.8 600.0,800.0 C613.3,817.2 626.7,837.5 640.0,860.0 C653.3,882.5 673.3,922.5 680.0,935.0" fill="none" stroke="#fff" stroke-width="4" stroke-linejoin="round" stroke-linecap="round" />
<path d="M767.0,827.0 C772.5,822.5 784.5,807.8 800.0,800.0 C815.5,792.2 836.7,785.0 860.0,780.0 C883.3,775.0 926.7,771.7 940.0,770.0" fill="none" stroke="#fff" stroke-width="4" stroke-linejoin="round" stroke-linecap="round" />
<path d="M960.0,640.0 C960.0,650.8 961.7,685.0 960.0,705.0 C958.3,725.0 951.7,750.8 950.0,760.0" fill="none" stroke="#fff" stroke-width="4" stroke-linejoin="round" stroke-linecap="round" />
<path d="M1030.0,656.0 C1031.7,666.7 1035.0,699.3 1040.0,720.0 C1045.0,740.7 1056.7,770.0 1060.0,780.0" fill="none" stroke="#fff" stroke-width="4" stroke-linejoin="round" stroke-linecap="round" />
<path d="M391.0,560.0 C400.8,559.2 431.8,558.3 450.0,555.0 C468.2,551.7 491.7,542.5 500.0,540.0" fill="none" stroke="#fff" stroke-width="4" stroke-linejoin="round" stroke-linecap="round" />
<path d="M582.0,470.0 C585.0,478.3 595.3,507.5 600.0,520.0 C604.7,532.5 608.3,540.8 610.0,545.0" fill="none" stroke="#fff" stroke-width="4" stroke-linejoin="round" stroke-linecap="round" />
<path d="M700.0,420.0 C705.0,428.3 723.2,458.2 730.0,470.0 C736.8,481.8 739.2,487.5 741.0,491.0" fill="none" stroke="#fff" stroke-width="4" stroke-linejoin="round" stroke-linecap="round" />
<path d="M890.0,560.0 C901.7,560.0 938.3,560.0 960.0,560.0 C981.7,560.0 994.3,562.5 1020.0,560.0 C1045.7,557.5 1098.3,547.5 1114.0,545.0" fill="none" stroke="#fff" stroke-width="4" stroke-linejoin="round" stroke-linecap="round" />
<path d="M1060.0,380.0 C1061.7,396.7 1066.7,450.0 1070.0,480.0 C1073.3,510.0 1078.3,546.7 1080.0,560.0" fill="none" stroke="#fff" stroke-width="4" stroke-linejoin="round" stroke-linecap="round" />
<path d="M480.0,780.0 C486.7,788.3 506.7,816.7 520.0,830.0 C533.3,843.3 553.3,855.0 560.0,860.0" fill="none" stroke="#fff" stroke-width="4" stroke-linejoin="round" stroke-linecap="round" />
<path d="M391.0,840.0 C399.2,843.3 421.8,850.0 440.0,860.0 C458.2,870.0 483.3,887.5 500.0,900.0 C516.7,912.5 533.3,929.2 540.0,935.0" fill="none" stroke="#fff" stroke-width="4" stroke-linejoin="round" stroke-linecap="round" />
<path d="M620.0,900.0 C633.3,896.7 676.7,885.0 700.0,880.0 C723.3,875.0 750.0,871.7 760.0,870.0" fill="none" stroke="#fff" stroke-width="4" stroke-linejoin="round" stroke-linecap="round" />
<path d="M925.0,825.0 C930.8,834.2 950.8,861.7 960.0,880.0 C969.2,898.3 976.7,925.8 980.0,935.0" fill="none" stroke="#fff" stroke-width="4" stroke-linejoin="round" stroke-linecap="round" />
<path d="M925.0,825.0 C927.5,814.2 934.2,780.0 940.0,760.0 C945.8,740.0 956.7,714.2 960.0,705.0" fill="none" stroke="#fff" stroke-width="4" stroke-linejoin="round" stroke-linecap="round" />
<path d="M776.0,750.0 C788.3,748.3 829.3,743.3 850.0,740.0 C870.7,736.7 881.7,733.7 900.0,730.0 C918.3,726.3 950.0,720.0 960.0,718.0" fill="none" stroke="#fff" stroke-width="4" stroke-linejoin="round" stroke-linecap="round" />
<path d="M500.0,470.0 C495.0,465.0 479.2,450.0 470.0,440.0 C460.8,430.0 450.2,419.3 445.0,410.0 C439.8,400.7 436.7,393.7 438.5,384.0 C440.3,374.3 447.8,359.8 455.6,352.0 C463.5,344.2 472.0,342.3 485.6,337.0 C499.2,331.7 524.2,321.1 537.0,320.0 C549.8,318.9 555.9,321.3 562.6,330.6 C569.4,339.9 574.3,361.0 577.5,375.6 C580.7,390.2 581.1,404.1 581.8,418.3 C582.5,432.5 581.8,453.9 581.8,461.0" fill="none" stroke="#fff" stroke-width="3" stroke-linejoin="round" stroke-linecap="round" />
<circle cx="524.5" cy="428.5" r="17" fill="none" stroke="#fff" stroke-width="1.5"/>
<polyline points="541.0,432.0 582.0,420.0" fill="none" stroke="#fff" stroke-width="1.5" stroke-linejoin="round" stroke-linecap="round" />
<polyline points="524.0,445.0 530.0,470.0" fill="none" stroke="#fff" stroke-width="1.5" stroke-linejoin="round" stroke-linecap="round" />
<polyline points="748.0,752.0 778.0,752.0" fill="none" stroke="#fff" stroke-width="2.5" stroke-linejoin="round" stroke-linecap="round" />
<polyline points="740.0,828.0 770.0,827.0" fill="none" stroke="#fff" stroke-width="2.5" stroke-linejoin="round" stroke-linecap="round" />
<polyline points="756.0,697.0 782.0,704.0" fill="none" stroke="#fff" stroke-width="2.5" stroke-linejoin="round" stroke-linecap="round" />
<polyline points="818.0,636.0 808.0,672.0" fill="none" stroke="#fff" stroke-width="2.5" stroke-linejoin="round" stroke-linecap="round" />
<polyline points="900.0,632.0 900.0,656.0" fill="none" stroke="#fff" stroke-width="2.5" stroke-linejoin="round" stroke-linecap="round" />
<polyline points="953.0,636.0 947.0,658.0" fill="none" stroke="#fff" stroke-width="2.5" stroke-linejoin="round" stroke-linecap="round" />
<polyline points="1030.0,655.0 1028.0,675.0" fill="none" stroke="#fff" stroke-width="2.5" stroke-linejoin="round" stroke-linecap="round" />
<path d="M560.0,850.0 C562.0,855.0 569.0,865.8 572.0,880.0 C575.0,894.2 577.0,925.8 578.0,935.0" fill="none" stroke="#d2d3d8" stroke-width="7" stroke-linejoin="round" stroke-linecap="round" />
<path d="M720.0,440.0 C722.5,445.0 731.5,461.5 735.0,470.0 C738.5,478.5 740.0,487.5 741.0,491.0" fill="none" stroke="#d8d9de" stroke-width="5" stroke-linejoin="round" stroke-linecap="round" />
<path d="M520.0,255.0 C525.5,259.7 543.7,273.7 553.0,283.0 C562.3,292.3 568.5,301.2 576.0,311.0 C583.5,320.8 592.0,333.5 598.0,342.0 C604.0,350.5 607.5,354.0 612.0,362.0 C616.5,370.0 622.8,385.3 625.0,390.0" fill="none" stroke="#d6d7dc" stroke-width="5" stroke-linejoin="round" stroke-linecap="round" />
<path d="M391.0,508.0 C395.0,513.0 405.7,527.3 415.0,538.0 C424.3,548.7 437.3,561.5 447.0,572.0 C456.7,582.5 465.3,593.8 473.0,601.0 C480.7,608.2 485.7,606.5 493.0,615.0 C500.3,623.5 510.5,637.8 517.0,652.0 C523.5,666.2 528.2,687.5 532.0,700.0 C535.8,712.5 535.3,717.5 540.0,727.0 C544.7,736.5 554.2,748.0 560.0,757.0 C565.8,766.0 570.8,775.3 575.0,781.0 C579.2,786.7 579.5,787.7 585.0,791.0 C590.5,794.3 600.2,792.8 608.0,801.0 C615.8,809.2 623.3,826.8 632.0,840.0 C640.7,853.2 650.3,864.2 660.0,880.0 C669.7,895.8 685.0,925.8 690.0,935.0" fill="none" stroke="#e6b95a" stroke-width="6" stroke-linejoin="round" stroke-linecap="round" />
<path d="M391.0,516.0 C399.2,514.0 426.3,507.2 440.0,504.0 C453.7,500.8 463.0,498.7 473.0,497.0 C483.0,495.3 485.5,496.5 500.0,494.0 C514.5,491.5 540.0,486.8 560.0,482.0 C580.0,477.2 601.2,470.8 620.0,465.0 C638.8,459.2 658.8,453.7 673.0,447.0 C687.2,440.3 691.7,434.0 705.0,425.0 C718.3,416.0 733.7,399.8 753.0,393.0 C772.3,386.2 801.0,386.3 821.0,384.0 C841.0,381.7 864.3,379.5 873.0,379.0 C881.7,378.5 873.0,380.7 873.0,381.0" fill="none" stroke="#e6b95a" stroke-width="6" stroke-linejoin="round" stroke-linecap="round" />
<path d="M768.0,393.0 C770.0,396.7 773.5,412.5 780.0,415.0 C786.5,417.5 800.2,412.8 807.0,408.0 C813.8,403.2 818.7,389.7 821.0,386.0" fill="none" stroke="#e6b95a" stroke-width="6" stroke-linejoin="round" stroke-linecap="round" />
<path d="M873.0,374.0 C879.0,376.8 893.7,385.0 909.0,391.0 C924.3,397.0 948.3,403.5 965.0,410.0 C981.7,416.5 1000.0,423.8 1009.0,430.0 C1018.0,436.2 1013.3,444.7 1019.0,447.0 C1024.7,449.3 1035.0,442.8 1043.0,444.0 C1051.0,445.2 1059.0,447.7 1067.0,454.0 C1075.0,460.3 1083.2,474.3 1091.0,482.0 C1098.8,489.7 1110.2,497.0 1114.0,500.0" fill="none" stroke="#e6b95a" stroke-width="6" stroke-linejoin="round" stroke-linecap="round" />
<path d="M904.6,255.0 C905.0,263.1 908.6,289.3 907.0,303.5 C905.4,317.7 899.0,329.1 895.0,340.0 C891.0,350.9 886.7,362.2 883.0,369.0 C879.3,375.8 874.7,379.0 873.0,381.0" fill="none" stroke="#e6b95a" stroke-width="6" stroke-linejoin="round" stroke-linecap="round" />
<path d="M1101.0,255.0 C1101.0,265.8 1101.3,295.8 1101.0,320.0 C1100.7,344.2 1100.2,382.5 1099.0,400.0 C1097.8,417.5 1093.8,411.3 1094.0,425.0 C1094.2,438.7 1098.0,470.2 1100.0,482.0 C1102.0,493.8 1105.0,493.7 1106.0,496.0" fill="none" stroke="#e6b95a" stroke-width="6" stroke-linejoin="round" stroke-linecap="round" />
<path d="M391.0,806.0 C395.0,802.7 405.0,794.2 415.0,786.0 C425.0,777.8 440.8,765.3 451.0,757.0 C461.2,748.7 462.7,741.2 476.0,736.0 C489.3,730.8 520.3,726.5 531.0,726.0 C541.7,725.5 538.5,731.8 540.0,733.0" fill="none" stroke="#e6b95a" stroke-width="6" stroke-linejoin="round" stroke-linecap="round" />
<path d="M405.5,805.7 C406.3,809.7 410.3,823.5 410.3,829.9 C410.3,836.3 408.7,839.5 405.5,844.4 C402.3,849.2 393.4,856.6 391.0,859.0" fill="none" stroke="#e6b95a" stroke-width="6" stroke-linejoin="round" stroke-linecap="round" />
<path d="M391.0,376.0 C395.0,379.7 408.5,391.5 415.0,398.0 C421.5,404.5 423.5,407.3 430.0,415.0 C436.5,422.7 447.2,435.5 454.0,444.0 C460.8,452.5 467.7,459.7 471.0,466.0 C474.3,472.3 473.3,475.8 474.0,482.0 C474.7,488.2 474.8,499.5 475.0,503.0" fill="none" stroke="#e6b95a" stroke-width="6" stroke-linejoin="round" stroke-linecap="round" />
<path d="M488.0,458.0 C488.7,461.7 491.0,472.5 492.0,480.0 C493.0,487.5 493.7,499.2 494.0,503.0" fill="none" stroke="#e6b95a" stroke-width="6" stroke-linejoin="round" stroke-linecap="round" />
<path d="M921.0,818.0 C930.0,819.7 958.5,825.7 975.0,828.0 C991.5,830.3 1008.8,832.5 1020.0,832.0 C1031.2,831.5 1032.0,835.3 1042.0,825.0 C1052.0,814.7 1068.0,790.8 1080.0,770.0 C1092.0,749.2 1108.3,711.7 1114.0,700.0" fill="none" stroke="#e6b95a" stroke-width="6" stroke-linejoin="round" stroke-linecap="round" />
<path d="M1020.0,832.0 C1023.7,834.0 1034.3,837.2 1042.0,844.0 C1049.7,850.8 1058.0,863.7 1066.0,873.0 C1074.0,882.3 1082.0,892.3 1090.0,900.0 C1098.0,907.7 1110.0,915.8 1114.0,919.0" fill="none" stroke="#e6b95a" stroke-width="6" stroke-linejoin="round" stroke-linecap="round" />
<path d="M921.0,818.0 C921.5,820.8 926.0,828.2 924.0,835.0 C922.0,841.8 915.0,849.3 909.0,859.0 C903.0,868.7 894.0,883.3 888.0,893.0 C882.0,902.7 875.5,913.0 873.0,917.0" fill="none" stroke="#e6b95a" stroke-width="6" stroke-linejoin="round" stroke-linecap="round" />
<path d="M909.0,864.0 C903.0,866.3 886.2,873.7 873.0,878.0 C859.8,882.3 843.8,885.5 830.0,890.0 C816.2,894.5 806.7,899.2 790.0,905.0 C773.3,910.8 745.0,920.0 730.0,925.0 C715.0,930.0 705.0,933.3 700.0,935.0" fill="none" stroke="#e6b95a" stroke-width="6" stroke-linejoin="round" stroke-linecap="round" />
<path d="M632.0,840.0 C643.3,850.0 682.0,885.0 700.0,900.0 C718.0,915.0 733.3,925.0 740.0,930.0" fill="none" stroke="#e6b95a" stroke-width="6" stroke-linejoin="round" stroke-linecap="round" />
<path d="M391.0,508.0 C395.0,513.0 405.7,527.3 415.0,538.0 C424.3,548.7 437.3,561.5 447.0,572.0 C456.7,582.5 465.3,593.8 473.0,601.0 C480.7,608.2 485.7,606.5 493.0,615.0 C500.3,623.5 510.5,637.8 517.0,652.0 C523.5,666.2 528.2,687.5 532.0,700.0 C535.8,712.5 535.3,717.5 540.0,727.0 C544.7,736.5 554.2,748.0 560.0,757.0 C565.8,766.0 570.8,775.3 575.0,781.0 C579.2,786.7 579.5,787.7 585.0,791.0 C590.5,794.3 600.2,792.8 608.0,801.0 C615.8,809.2 623.3,826.8 632.0,840.0 C640.7,853.2 650.3,864.2 660.0,880.0 C669.7,895.8 685.0,925.8 690.0,935.0" fill="none" stroke="#f8d67f" stroke-width="4" stroke-linejoin="round" stroke-linecap="round" />
<path d="M391.0,516.0 C399.2,514.0 426.3,507.2 440.0,504.0 C453.7,500.8 463.0,498.7 473.0,497.0 C483.0,495.3 485.5,496.5 500.0,494.0 C514.5,491.5 540.0,486.8 560.0,482.0 C580.0,477.2 601.2,470.8 620.0,465.0 C638.8,459.2 658.8,453.7 673.0,447.0 C687.2,440.3 691.7,434.0 705.0,425.0 C718.3,416.0 733.7,399.8 753.0,393.0 C772.3,386.2 801.0,386.3 821.0,384.0 C841.0,381.7 864.3,379.5 873.0,379.0 C881.7,378.5 873.0,380.7 873.0,381.0" fill="none" stroke="#f8d67f" stroke-width="4" stroke-linejoin="round" stroke-linecap="round" />
<path d="M768.0,393.0 C770.0,396.7 773.5,412.5 780.0,415.0 C786.5,417.5 800.2,412.8 807.0,408.0 C813.8,403.2 818.7,389.7 821.0,386.0" fill="none" stroke="#f8d67f" stroke-width="4" stroke-linejoin="round" stroke-linecap="round" />
<path d="M873.0,374.0 C879.0,376.8 893.7,385.0 909.0,391.0 C924.3,397.0 948.3,403.5 965.0,410.0 C981.7,416.5 1000.0,423.8 1009.0,430.0 C1018.0,436.2 1013.3,444.7 1019.0,447.0 C1024.7,449.3 1035.0,442.8 1043.0,444.0 C1051.0,445.2 1059.0,447.7 1067.0,454.0 C1075.0,460.3 1083.2,474.3 1091.0,482.0 C1098.8,489.7 1110.2,497.0 1114.0,500.0" fill="none" stroke="#f8d67f" stroke-width="4" stroke-linejoin="round" stroke-linecap="round" />
<path d="M904.6,255.0 C905.0,263.1 908.6,289.3 907.0,303.5 C905.4,317.7 899.0,329.1 895.0,340.0 C891.0,350.9 886.7,362.2 883.0,369.0 C879.3,375.8 874.7,379.0 873.0,381.0" fill="none" stroke="#f8d67f" stroke-width="4" stroke-linejoin="round" stroke-linecap="round" />
<path d="M1101.0,255.0 C1101.0,265.8 1101.3,295.8 1101.0,320.0 C1100.7,344.2 1100.2,382.5 1099.0,400.0 C1097.8,417.5 1093.8,411.3 1094.0,425.0 C1094.2,438.7 1098.0,470.2 1100.0,482.0 C1102.0,493.8 1105.0,493.7 1106.0,496.0" fill="none" stroke="#f8d67f" stroke-width="4" stroke-linejoin="round" stroke-linecap="round" />
<path d="M391.0,806.0 C395.0,802.7 405.0,794.2 415.0,786.0 C425.0,777.8 440.8,765.3 451.0,757.0 C461.2,748.7 462.7,741.2 476.0,736.0 C489.3,730.8 520.3,726.5 531.0,726.0 C541.7,725.5 538.5,731.8 540.0,733.0" fill="none" stroke="#f8d67f" stroke-width="4" stroke-linejoin="round" stroke-linecap="round" />
<path d="M405.5,805.7 C406.3,809.7 410.3,823.5 410.3,829.9 C410.3,836.3 408.7,839.5 405.5,844.4 C402.3,849.2 393.4,856.6 391.0,859.0" fill="none" stroke="#f8d67f" stroke-width="4" stroke-linejoin="round" stroke-linecap="round" />
<path d="M391.0,376.0 C395.0,379.7 408.5,391.5 415.0,398.0 C421.5,404.5 423.5,407.3 430.0,415.0 C436.5,422.7 447.2,435.5 454.0,444.0 C460.8,452.5 467.7,459.7 471.0,466.0 C474.3,472.3 473.3,475.8 474.0,482.0 C474.7,488.2 474.8,499.5 475.0,503.0" fill="none" stroke="#f8d67f" stroke-width="4" stroke-linejoin="round" stroke-linecap="round" />
<path d="M488.0,458.0 C488.7,461.7 491.0,472.5 492.0,480.0 C493.0,487.5 493.7,499.2 494.0,503.0" fill="none" stroke="#f8d67f" stroke-width="4" stroke-linejoin="round" stroke-linecap="round" />
<path d="M921.0,818.0 C930.0,819.7 958.5,825.7 975.0,828.0 C991.5,830.3 1008.8,832.5 1020.0,832.0 C1031.2,831.5 1032.0,835.3 1042.0,825.0 C1052.0,814.7 1068.0,790.8 1080.0,770.0 C1092.0,749.2 1108.3,711.7 1114.0,700.0" fill="none" stroke="#f8d67f" stroke-width="4" stroke-linejoin="round" stroke-linecap="round" />
<path d="M1020.0,832.0 C1023.7,834.0 1034.3,837.2 1042.0,844.0 C1049.7,850.8 1058.0,863.7 1066.0,873.0 C1074.0,882.3 1082.0,892.3 1090.0,900.0 C1098.0,907.7 1110.0,915.8 1114.0,919.0" fill="none" stroke="#f8d67f" stroke-width="4" stroke-linejoin="round" stroke-linecap="round" />
<path d="M921.0,818.0 C921.5,820.8 926.0,828.2 924.0,835.0 C922.0,841.8 915.0,849.3 909.0,859.0 C903.0,868.7 894.0,883.3 888.0,893.0 C882.0,902.7 875.5,913.0 873.0,917.0" fill="none" stroke="#f8d67f" stroke-width="4" stroke-linejoin="round" stroke-linecap="round" />
<path d="M909.0,864.0 C903.0,866.3 886.2,873.7 873.0,878.0 C859.8,882.3 843.8,885.5 830.0,890.0 C816.2,894.5 806.7,899.2 790.0,905.0 C773.3,910.8 745.0,920.0 730.0,925.0 C715.0,930.0 705.0,933.3 700.0,935.0" fill="none" stroke="#f8d67f" stroke-width="4" stroke-linejoin="round" stroke-linecap="round" />
<path d="M632.0,840.0 C643.3,850.0 682.0,885.0 700.0,900.0 C718.0,915.0 733.3,925.0 740.0,930.0" fill="none" stroke="#f8d67f" stroke-width="4" stroke-linejoin="round" stroke-linecap="round" />
<text x="534" y="296.7" font-size="15.5" fill="#3c4043" text-anchor="start" letter-spacing="2.55" stroke="#fff" stroke-width="3.5" stroke-linejoin="round">CAMDEN TOWN</text>
<text x="534" y="296.7" font-size="15.5" fill="#3c4043" text-anchor="start" letter-spacing="2.55" stroke="#3c4043" stroke-width="0.55">CAMDEN TOWN</text>
<text x="852" y="301.6" font-size="15.5" fill="#3c4043" text-anchor="start" letter-spacing="2.55" stroke="#fff" stroke-width="3.5" stroke-linejoin="round">ISLINGTON</text>
<text x="852" y="301.6" font-size="15.5" fill="#3c4043" text-anchor="start" letter-spacing="2.55" stroke="#3c4043" stroke-width="0.55">ISLINGTON</text>
<text x="862" y="349" font-size="15.5" fill="#3c4043" text-anchor="start" letter-spacing="2.55" stroke="#fff" stroke-width="3.5" stroke-linejoin="round">ANGEL</text>
<text x="862" y="349" font-size="15.5" fill="#3c4043" text-anchor="start" letter-spacing="2.55" stroke="#3c4043" stroke-width="0.55">ANGEL</text>
<text x="619" y="540.2" font-size="15.5" fill="#3c4043" text-anchor="end" letter-spacing="2.55" stroke="#fff" stroke-width="3.5" stroke-linejoin="round">MARYLEBONE</text>
<text x="619" y="540.2" font-size="15.5" fill="#3c4043" text-anchor="end" letter-spacing="2.55" stroke="#3c4043" stroke-width="0.55">MARYLEBONE</text>
<text x="429" y="575.4" font-size="15.5" fill="#3c4043" text-anchor="end" letter-spacing="2.55" stroke="#fff" stroke-width="3.5" stroke-linejoin="round">PADDINGTON</text>
<text x="429" y="575.4" font-size="15.5" fill="#3c4043" text-anchor="end" letter-spacing="2.55" stroke="#3c4043" stroke-width="0.55">PADDINGTON</text>
<text x="628" y="603.4" font-size="15.5" fill="#3c4043" text-anchor="start" letter-spacing="2.55" stroke="#fff" stroke-width="3.5" stroke-linejoin="round">SOHO</text>
<text x="628" y="603.4" font-size="15.5" fill="#3c4043" text-anchor="start" letter-spacing="2.55" stroke="#3c4043" stroke-width="0.55">SOHO</text>
<text x="589" y="798.9" font-size="15.5" fill="#3c4043" text-anchor="start" letter-spacing="2.5" stroke="#fff" stroke-width="3.5" stroke-linejoin="round">WESTMINSTER</text>
<text x="589" y="798.9" font-size="15.5" fill="#3c4043" text-anchor="start" letter-spacing="2.5" stroke="#3c4043" stroke-width="0.55">WESTMINSTER</text>
<text x="747" y="846.8" font-size="15.5" fill="#3c4043" text-anchor="start" letter-spacing="2.5" stroke="#fff" stroke-width="3.5" stroke-linejoin="round">LAMBETH</text>
<text x="747" y="846.8" font-size="15.5" fill="#3c4043" text-anchor="start" letter-spacing="2.5" stroke="#3c4043" stroke-width="0.55">LAMBETH</text>
<text x="589" y="879.4" font-size="15" fill="#3c4043" text-anchor="start" letter-spacing="1.0" stroke="#fff" stroke-width="3.5" stroke-linejoin="round">PIMLICO</text>
<text x="589" y="879.4" font-size="15" fill="#3c4043" text-anchor="start" letter-spacing="1.0" stroke="#3c4043" stroke-width="0.55">PIMLICO</text>
<text x="796" y="910.8" font-size="11" fill="#3c4043" text-anchor="start" letter-spacing="0.8" stroke="#fff" stroke-width="3.5" stroke-linejoin="round">KENNINGTON</text>
<text x="796" y="910.8" font-size="11" fill="#3c4043" text-anchor="start" letter-spacing="0.8" stroke="#3c4043" stroke-width="0.55">KENNINGTON</text>
<text x="907" y="920.5" font-size="15.5" fill="#3c4043" text-anchor="start" letter-spacing="2.5" stroke="#fff" stroke-width="3.5" stroke-linejoin="round">WALWORTH</text>
<text x="907" y="920.5" font-size="15.5" fill="#3c4043" text-anchor="start" letter-spacing="2.5" stroke="#3c4043" stroke-width="0.55">WALWORTH</text>
<text x="980" y="733.2" font-size="10.5" fill="#3c4043" text-anchor="start" letter-spacing="1.7" stroke="#fff" stroke-width="3.5" stroke-linejoin="round">SOUTHWARK</text>
<text x="980" y="733.2" font-size="10.5" fill="#3c4043" text-anchor="start" letter-spacing="1.7" stroke="#3c4043" stroke-width="0.55">SOUTHWARK</text>
<text x="444" y="924.1" font-size="15.5" fill="#3c4043" text-anchor="end" letter-spacing="2.5" stroke="#fff" stroke-width="3.5" stroke-linejoin="round">CHELSEA</text>
<text x="444" y="924.1" font-size="15.5" fill="#3c4043" text-anchor="end" letter-spacing="2.5" stroke="#3c4043" stroke-width="0.55">CHELSEA</text>
<text x="661" y="686" font-size="31" fill="#202124" font-weight="bold" text-anchor="start" letter-spacing="0.2" stroke="#fff" stroke-width="4" paint-order="stroke" stroke-linejoin="round">Londres</text>
<text x="471" y="456" font-size="17" fill="#1f8a94" font-weight="normal" text-anchor="end" letter-spacing="0.4" stroke="#fff" stroke-width="3" paint-order="stroke" stroke-linejoin="round">The Sherlock</text>
<text x="470" y="473.4" font-size="17" fill="#1f8a94" font-weight="normal" text-anchor="end" letter-spacing="0.4" stroke="#fff" stroke-width="3" paint-order="stroke" stroke-linejoin="round">Holmes Museum</text>
<text x="594" y="445.5" font-size="17" fill="#1f8a94" font-weight="normal" text-anchor="start" letter-spacing="0.4" stroke="#fff" stroke-width="3" paint-order="stroke" stroke-linejoin="round">Foundling Museum</text>
<text x="841" y="452" font-size="17" fill="#1f8a94" font-weight="normal" text-anchor="start" letter-spacing="0.4" stroke="#fff" stroke-width="3" paint-order="stroke" stroke-linejoin="round">The Postal Museum</text>
<text x="707" y="516" font-size="17" fill="#1f8a94" font-weight="normal" text-anchor="end" letter-spacing="0.4" stroke="#fff" stroke-width="3" paint-order="stroke" stroke-linejoin="round">The British Museum</text>
<text x="991" y="506.3" font-size="17" fill="#1f8a94" font-weight="normal" text-anchor="start" letter-spacing="0.4" stroke="#fff" stroke-width="3" paint-order="stroke" stroke-linejoin="round">Barbican Centre</text>
<text x="1010" y="559.2" font-size="17" fill="#1f8a94" font-weight="normal" text-anchor="start" letter-spacing="0.4" stroke="#fff" stroke-width="3" paint-order="stroke" stroke-linejoin="round">Guildhall</text>
<text x="815" y="618" font-size="17" fill="#1f8a94" font-weight="normal" text-anchor="start" letter-spacing="0.4" stroke="#fff" stroke-width="3" paint-order="stroke" stroke-linejoin="round">Somerset House</text>
<text x="430" y="637.3" font-size="17" fill="#1f8a94" font-weight="normal" text-anchor="start" letter-spacing="0.4" stroke="#fff" stroke-width="3" paint-order="stroke" stroke-linejoin="round">Royal Academy of Arts</text>
<text x="957" y="653.1" font-size="17" fill="#1f8a94" font-weight="normal" text-anchor="start" letter-spacing="0.4" stroke="#fff" stroke-width="3" paint-order="stroke" stroke-linejoin="round">Tower of London</text>
<text x="932.5" y="696.8" font-size="17" fill="#1f8a94" font-weight="normal" text-anchor="start" letter-spacing="0.4" stroke="#fff" stroke-width="3" paint-order="stroke" stroke-linejoin="round">The Shard</text>
<text x="630" y="734.4" font-size="17" fill="#1f8a94" font-weight="normal" text-anchor="start" letter-spacing="0.4" stroke="#fff" stroke-width="3" paint-order="stroke" stroke-linejoin="round">Buckingham Palace</text>
<text x="519" y="760.2" font-size="17" fill="#1f8a94" font-weight="normal" text-anchor="end" letter-spacing="0.4" stroke="#fff" stroke-width="3" paint-order="stroke" stroke-linejoin="round">Natural History Museum</text>
<text x="612" y="857.7" font-size="17" fill="#1f8a94" font-weight="normal" text-anchor="start" letter-spacing="0.4" stroke="#fff" stroke-width="3" paint-order="stroke" stroke-linejoin="round">Tate Britain</text>
<text x="448" y="386" font-size="17.5" fill="#2e8049" font-weight="normal" text-anchor="start" letter-spacing="0" stroke="#fff" stroke-width="3" paint-order="stroke" stroke-linejoin="round">The Regent's</text>
<text x="482" y="403" font-size="17.5" fill="#2e8049" font-weight="normal" text-anchor="start" letter-spacing="0" stroke="#fff" stroke-width="3" paint-order="stroke" stroke-linejoin="round">Park</text>
<text x="405.6" y="683.5" font-size="17.5" fill="#2e8049" font-weight="normal" text-anchor="start" letter-spacing="0" stroke="#fff" stroke-width="3" paint-order="stroke" stroke-linejoin="round">Hyde Park</text>
<text x="558.5" y="389.7" font-size="17" fill="#5f6368" font-weight="normal" text-anchor="start" letter-spacing="0.4" stroke="#fff" stroke-width="3" paint-order="stroke" stroke-linejoin="round">The British Library</text>
<text x="769" y="380" font-size="17" fill="#5f6368" font-weight="normal" text-anchor="start" letter-spacing="0.4" stroke="#fff" stroke-width="3" paint-order="stroke" stroke-linejoin="round">King's Cross</text>
<text x="769" y="582.7" font-size="17" fill="#5f6368" font-weight="normal" text-anchor="start" letter-spacing="0.4" stroke="#fff" stroke-width="3" paint-order="stroke" stroke-linejoin="round">St. Paul's Cathedral</text>
<text x="966.4" y="422.5" font-size="17" fill="#c4773a" font-weight="normal" text-anchor="start" letter-spacing="0.5" stroke="#fff" stroke-width="3" paint-order="stroke" stroke-linejoin="round">Dishoom Shoreditch</text>
<text x="838.3" y="649.2" font-size="14" fill="#3a6fd0" font-weight="normal" text-anchor="start" letter-spacing="0">La Tamise</text>
<text x="431" y="368" font-size="13" fill="#5f6368" font-weight="normal" text-anchor="middle" letter-spacing="0" stroke="#fff" stroke-width="2.5" paint-order="stroke" stroke-linejoin="round" transform="rotate(-70 431 368)">A5205</text>
<text x="398" y="284" font-size="13" fill="#5f6368" font-weight="normal" text-anchor="middle" letter-spacing="0" stroke="#fff" stroke-width="2.5" paint-order="stroke" stroke-linejoin="round" transform="rotate(-70 398 284)">A5205</text>
<text x="507.5" y="495" font-size="13" fill="#5f6368" font-weight="normal" text-anchor="middle" letter-spacing="0" stroke="#fff" stroke-width="2.5" paint-order="stroke" stroke-linejoin="round" transform="rotate(-15 507.5 495)">A501</text>
<text x="551.2" y="572" font-size="13" fill="#5f6368" font-weight="normal" text-anchor="middle" letter-spacing="0" stroke="#fff" stroke-width="2.5" paint-order="stroke" stroke-linejoin="round" transform="rotate(-15 551.2 572)">A5204</text>
<text x="655" y="576" font-size="13" fill="#5f6368" font-weight="normal" text-anchor="middle" letter-spacing="0" stroke="#fff" stroke-width="2.5" paint-order="stroke" stroke-linejoin="round" transform="rotate(0 655 576)">A40</text>
<text x="534.2" y="683.5" font-size="13" fill="#5f6368" font-weight="normal" text-anchor="middle" letter-spacing="0" stroke="#fff" stroke-width="2.5" paint-order="stroke" stroke-linejoin="round" transform="rotate(62 534.2 683.5)">A4202</text>
<text x="560.2" y="822.6" font-size="13" fill="#5f6368" font-weight="normal" text-anchor="middle" letter-spacing="0" stroke="#fff" stroke-width="2.5" paint-order="stroke" stroke-linejoin="round" transform="rotate(55 560.2 822.6)">A3213</text>
<text x="540.9" y="854" font-size="13" fill="#5f6368" font-weight="normal" text-anchor="middle" letter-spacing="0" stroke="#fff" stroke-width="2.5" paint-order="stroke" stroke-linejoin="round" transform="rotate(-62 540.9 854)">Ebury St</text>
<text x="490.1" y="907.2" font-size="13" fill="#5f6368" font-weight="normal" text-anchor="middle" letter-spacing="0" stroke="#fff" stroke-width="2.5" paint-order="stroke" stroke-linejoin="round" transform="rotate(-40 490.1 907.2)">B302</text>
<text x="838.3" y="634.5" font-size="13" fill="#5f6368" font-weight="normal" text-anchor="middle" letter-spacing="0" stroke="#fff" stroke-width="2.5" paint-order="stroke" stroke-linejoin="round" transform="rotate(-8 838.3 634.5)">A3211</text>
<text x="860.8" y="688" font-size="13" fill="#5f6368" font-weight="normal" text-anchor="middle" letter-spacing="0" stroke="#fff" stroke-width="2.5" paint-order="stroke" stroke-linejoin="round" transform="rotate(-30 860.8 688)">A3200</text>
<text x="785.5" y="793.6" font-size="13" fill="#5f6368" font-weight="normal" text-anchor="middle" letter-spacing="0" stroke="#fff" stroke-width="2.5" paint-order="stroke" stroke-linejoin="round" transform="rotate(-60 785.5 793.6)">A3036</text>
<text x="1027.7" y="771" font-size="13" fill="#5f6368" font-weight="normal" text-anchor="middle" letter-spacing="0" stroke="#fff" stroke-width="2.5" paint-order="stroke" stroke-linejoin="round" transform="rotate(30 1027.7 771)">A2198</text>
<text x="1001.1" y="792.8" font-size="13" fill="#5f6368" font-weight="normal" text-anchor="middle" letter-spacing="0" stroke="#fff" stroke-width="2.5" paint-order="stroke" stroke-linejoin="round" transform="rotate(62 1001.1 792.8)">A2</text>
<text x="885.1" y="809.7" font-size="13" fill="#5f6368" font-weight="normal" text-anchor="middle" letter-spacing="0" stroke="#fff" stroke-width="2.5" paint-order="stroke" stroke-linejoin="round" transform="rotate(30 885.1 809.7)">A302</text>
<text x="1090.5" y="821.8" font-size="13" fill="#5f6368" font-weight="normal" text-anchor="middle" letter-spacing="0" stroke="#fff" stroke-width="2.5" paint-order="stroke" stroke-linejoin="round" transform="rotate(30 1090.5 821.8)">A2206</text>
<text x="1032.5" y="839.9" font-size="13" fill="#5f6368" font-weight="normal" text-anchor="middle" letter-spacing="0" stroke="#fff" stroke-width="2.5" paint-order="stroke" stroke-linejoin="round" transform="rotate(25 1032.5 839.9)">A201</text>
<text x="1088.1" y="896.7" font-size="13" fill="#5f6368" font-weight="normal" text-anchor="middle" letter-spacing="0" stroke="#fff" stroke-width="2.5" paint-order="stroke" stroke-linejoin="round" transform="rotate(38 1088.1 896.7)">A2</text>
<text x="1039.8" y="911" font-size="13" fill="#5f6368" font-weight="normal" text-anchor="middle" letter-spacing="0" stroke="#fff" stroke-width="2.5" paint-order="stroke" stroke-linejoin="round" transform="rotate(65 1039.8 911)">Thurlow St</text>
<text x="1001.6" y="328" font-size="13" fill="#5f6368" font-weight="normal" text-anchor="middle" letter-spacing="0" stroke="#fff" stroke-width="2.5" paint-order="stroke" stroke-linejoin="round" transform="rotate(60 1001.6 328)">New N Rd</text>
<text x="979.8" y="381.6" font-size="13" fill="#5f6368" font-weight="normal" text-anchor="middle" letter-spacing="0" stroke="#fff" stroke-width="2.5" paint-order="stroke" stroke-linejoin="round" transform="rotate(75 979.8 381.6)">B144</text>
<text x="1038" y="276" font-size="13" fill="#5f6368" font-weight="normal" text-anchor="middle" letter-spacing="0" stroke="#fff" stroke-width="2.5" paint-order="stroke" stroke-linejoin="round" transform="rotate(-80 1038 276)">South</text>
<text x="738.8" y="273.6" font-size="13" fill="#5f6368" font-weight="normal" text-anchor="middle" letter-spacing="0" stroke="#fff" stroke-width="2.5" paint-order="stroke" stroke-linejoin="round" transform="rotate(80 738.8 273.6)">rk Wy</text>
<text x="868" y="930" font-size="13" fill="#5f6368" font-weight="normal" text-anchor="middle" letter-spacing="0" stroke="#fff" stroke-width="2.5" paint-order="stroke" stroke-linejoin="round" transform="rotate(-60 868 930)">A3</text>
<text x="682.8" y="928" font-size="13" fill="#5f6368" font-weight="normal" text-anchor="middle" letter-spacing="0" stroke="#fff" stroke-width="2.5" paint-order="stroke" stroke-linejoin="round" transform="rotate(-30 682.8 928)">Vauxhall Br Rd</text>
<text x="975" y="263" font-size="13" fill="#5f6368" font-weight="normal" text-anchor="middle" letter-spacing="0" stroke="#fff" stroke-width="2.5" paint-order="stroke" stroke-linejoin="round" transform="rotate(-60 975 263)">A1</text>
<text x="799.5" y="261" font-size="13" fill="#5f6368" font-weight="normal" text-anchor="middle" letter-spacing="0" stroke="#fff" stroke-width="2.5" paint-order="stroke" stroke-linejoin="round" transform="rotate(80 799.5 261)">A503</text>
<path d="M488.0,475.1 L498.7,458.6 A12.8,12.8 0 1 0 477.3,458.6 Z" fill="#19a5b6" stroke="#fff" stroke-width="1"/>
<g fill="none" stroke="#fff" stroke-width="1.4"><path d="M481.5,449.1 L488,444.6 L494.5,449.1Z" fill="#fff"/><rect x="483" y="450.1" width="10" height="6.5"/><path d="M481,457.6 H495" stroke-width="1.8"/><path d="M485,455.1 V451.6 L488,453.6 L491,451.6 V455.1" stroke-width="1.2"/></g>
<path d="M764.3,458.1 L775.0,441.6 A12.8,12.8 0 1 0 753.6,441.6 Z" fill="#19a5b6" stroke="#fff" stroke-width="1"/>
<g fill="none" stroke="#fff" stroke-width="1.4"><path d="M757.8,432.1 L764.3,427.6 L770.8,432.1Z" fill="#fff"/><rect x="759.3" y="433.1" width="10" height="6.5"/><path d="M757.3,440.6 H771.3" stroke-width="1.8"/><path d="M761.3,438.1 V434.6 L764.3,436.6 L767.3,434.6 V438.1" stroke-width="1.2"/></g>
<path d="M823.7,464.2 L834.4,447.7 A12.8,12.8 0 1 0 813.0,447.7 Z" fill="#19a5b6" stroke="#fff" stroke-width="1"/>
<g fill="none" stroke="#fff" stroke-width="1.4"><path d="M817.2,438.2 L823.7,433.7 L830.2,438.2Z" fill="#fff"/><rect x="818.7" y="439.2" width="10" height="6.5"/><path d="M816.7,446.7 H830.7" stroke-width="1.8"/><path d="M820.7,444.2 V440.7 L823.7,442.7 L826.7,440.7 V444.2" stroke-width="1.2"/></g>
<path d="M725.4,528.5 L736.1,512.0 A12.8,12.8 0 1 0 714.7,512.0 Z" fill="#19a5b6" stroke="#fff" stroke-width="1"/>
<g fill="none" stroke="#fff" stroke-width="1.4"><path d="M718.9,502.5 L725.4,498 L731.9,502.5Z" fill="#fff"/><rect x="720.4" y="503.5" width="10" height="6.5"/><path d="M718.4,511 H732.4" stroke-width="1.8"/><path d="M722.4,508.5 V505 L725.4,507 L728.4,505 V508.5" stroke-width="1.2"/></g>
<path d="M973.7,521.3 L984.4,504.8 A12.8,12.8 0 1 0 963.0,504.8 Z" fill="#19a5b6" stroke="#fff" stroke-width="1"/>
<path d="M966.7,493.8 h7 v4 a3.5,3.5 0 0 1 -7,0 Z" fill="#fff"/><path d="M974.7,490.8 h6.5 v4 a3.5,3.5 0 0 1 -6.5,0 Z" fill="#fff"/>
<path d="M993.9,572.2 L1004.6,555.7 A12.8,12.8 0 1 0 983.2,555.7 Z" fill="#19a5b6" stroke="#fff" stroke-width="1"/>
<path d="M987.9,542.7 h2.5 v2 h2 v-2 h3 v2 h2 v-2 h2.5 v5 l-2,2 v5 h2 v2.5 h-12 v-2.5 h2 v-5 l-2,-2 Z" fill="#fff"/>
<path d="M799.0,629.3 L809.7,612.8 A12.8,12.8 0 1 0 788.3,612.8 Z" fill="#19a5b6" stroke="#fff" stroke-width="1"/>
<path d="M799,598.8 a7,7 0 1 0 0,14 c1.5,0 2,-1 1.5,-2 c-0.5,-1 0,-2 1.5,-2 h1.5 a3,3 0 0 0 3,-3 c0,-4 -3,-7 -7.5,-7 z" fill="#fff"/><g fill="#1aa3b3"><circle cx="795.5" cy="605.8" r="1.4"/><circle cx="797" cy="602.3" r="1.4"/><circle cx="801" cy="602.3" r="1.4"/><circle cx="797.5" cy="609.3" r="1.4"/></g>
<path d="M627.7,648.7 L638.4,632.2 A12.8,12.8 0 1 0 617.0,632.2 Z" fill="#19a5b6" stroke="#fff" stroke-width="1"/>
<path d="M627.7,618.2 a7,7 0 1 0 0,14 c1.5,0 2,-1 1.5,-2 c-0.5,-1 0,-2 1.5,-2 h1.5 a3,3 0 0 0 3,-3 c0,-4 -3,-7 -7.5,-7 z" fill="#fff"/><g fill="#1aa3b3"><circle cx="624.2" cy="625.2" r="1.4"/><circle cx="625.7" cy="621.7" r="1.4"/><circle cx="629.7" cy="621.7" r="1.4"/><circle cx="626.2" cy="628.7" r="1.4"/></g>
<path d="M1107.2,665.7 L1117.9,649.2 A12.8,12.8 0 1 0 1096.5,649.2 Z" fill="#19a5b6" stroke="#fff" stroke-width="1"/>
<path d="M1101.2,636.2 h2.5 v2 h2 v-2 h3 v2 h2 v-2 h2.5 v5 l-2,2 v5 h2 v2.5 h-12 v-2.5 h2 v-5 l-2,-2 Z" fill="#fff"/>
<path d="M1028.3,709.4 L1039.0,692.9 A12.8,12.8 0 1 0 1017.6,692.9 Z" fill="#19a5b6" stroke="#fff" stroke-width="1"/>
<path d="M1021.3,682.9 h3.5 l1.5,-2.5 h4 l1.5,2.5 h3.5 v9 h-14 Z" fill="#fff"/><circle cx="1028.3" cy="687.4" r="2.6" fill="#1aa3b3"/><path d="M1020.3,678.9 v3 M1018.8,680.4 h3" stroke="#fff" stroke-width="1.2"/>
<path d="M612.4,744.4 L623.1,727.9 A12.8,12.8 0 1 0 601.7,727.9 Z" fill="#19a5b6" stroke="#fff" stroke-width="1"/>
<path d="M606.4,714.9 h2.5 v2 h2 v-2 h3 v2 h2 v-2 h2.5 v5 l-2,2 v5 h2 v2.5 h-12 v-2.5 h2 v-5 l-2,-2 Z" fill="#fff"/>
<path d="M717.8,870.3 L728.5,853.8 A12.8,12.8 0 1 0 707.1,853.8 Z" fill="#19a5b6" stroke="#fff" stroke-width="1"/>
<path d="M717.8,839.8 a7,7 0 1 0 0,14 c1.5,0 2,-1 1.5,-2 c-0.5,-1 0,-2 1.5,-2 h1.5 a3,3 0 0 0 3,-3 c0,-4 -3,-7 -7.5,-7 z" fill="#fff"/><g fill="#1aa3b3"><circle cx="714.3" cy="846.8" r="1.4"/><circle cx="715.8" cy="843.3" r="1.4"/><circle cx="719.8" cy="843.3" r="1.4"/><circle cx="716.3" cy="850.3" r="1.4"/></g>
<path d="M719.4,402.3 L730.1,385.8 A12.8,12.8 0 1 0 708.7,385.8 Z" fill="#70757a" stroke="#fff" stroke-width="1"/>
<path d="M712.4,373.8 q3.5,-1.5 6.5,0.5 v9 q-3,-2 -6.5,-0.5 Z M726.4,373.8 q-3.5,-1.5 -6.5,0.5 v9 q3,-2 6.5,-0.5 Z" fill="#fff"/>
<path d="M752.1,392.5 L762.8,376.0 A12.8,12.8 0 1 0 741.4,376.0 Z" fill="#70757a" stroke="#fff" stroke-width="1"/>
<circle cx="752.1" cy="369" r="4" fill="#fff"/>
<path d="M939.7,595.3 L950.4,578.8 A12.8,12.8 0 1 0 929.0,578.8 Z" fill="#70757a" stroke="#fff" stroke-width="1"/>
<path d="M939.7,564.8 V578.8 M935.2,568.8 H944.2" stroke="#fff" stroke-width="2.2"/>
<path d="M1098.7,465.4 L1109.4,448.9 A12.8,12.8 0 1 0 1088.0,448.9 Z" fill="#e8902c" stroke="#fff" stroke-width="1"/>
<path d="M1094.7,434.9 v5 a2,2 0 0 0 4,0 v-5 M1096.7,434.9 v14 M1102.7,448.9 v-14 q-3,2 -2,8 h2" stroke="#fff" stroke-width="1.4" fill="none"/>
<circle cx="386" cy="380" r="11" fill="#1e8e3e" stroke="#fff" stroke-width="1"/>
<g><circle cx="635.6" cy="347.2" r="4.2" fill="#fff" stroke="#d62a3d" stroke-width="1.8"/><rect x="629.1" y="345.8" width="13" height="2.8" fill="#2a3b8c"/></g>
<g><circle cx="678" cy="418.8" r="4.2" fill="#fff" stroke="#d62a3d" stroke-width="1.8"/><rect x="671.5" y="417.40000000000003" width="13" height="2.8" fill="#2a3b8c"/></g>
<g><circle cx="455.3" cy="491.7" r="4.2" fill="#fff" stroke="#d62a3d" stroke-width="1.8"/><rect x="448.8" y="490.3" width="13" height="2.8" fill="#2a3b8c"/></g>
<g><circle cx="399.5" cy="517.2" r="4.2" fill="#fff" stroke="#d62a3d" stroke-width="1.8"/><rect x="393.0" y="515.8000000000001" width="13" height="2.8" fill="#2a3b8c"/></g>
<g><circle cx="417.7" cy="522" r="4.2" fill="#fff" stroke="#d62a3d" stroke-width="1.8"/><rect x="411.2" y="520.6" width="13" height="2.8" fill="#2a3b8c"/></g>
<g><circle cx="489.3" cy="597.3" r="4.2" fill="#fff" stroke="#d62a3d" stroke-width="1.8"/><rect x="482.8" y="595.9" width="13" height="2.8" fill="#2a3b8c"/></g>
<g><circle cx="552.4" cy="588.8" r="4.2" fill="#fff" stroke="#d62a3d" stroke-width="1.8"/><rect x="545.9" y="587.4" width="13" height="2.8" fill="#2a3b8c"/></g>
<g><circle cx="567" cy="588.8" r="4.2" fill="#fff" stroke="#d62a3d" stroke-width="1.8"/><rect x="560.5" y="587.4" width="13" height="2.8" fill="#2a3b8c"/></g>
<g><circle cx="604.6" cy="677.4" r="4.2" fill="#fff" stroke="#d62a3d" stroke-width="1.8"/><rect x="598.1" y="676.0" width="13" height="2.8" fill="#2a3b8c"/></g>
<g><circle cx="609.5" cy="577.9" r="4.2" fill="#fff" stroke="#d62a3d" stroke-width="1.8"/><rect x="603.0" y="576.5" width="13" height="2.8" fill="#2a3b8c"/></g>
<g><circle cx="693.9" cy="565.7" r="4.2" fill="#fff" stroke="#d62a3d" stroke-width="1.8"/><rect x="687.4" y="564.3000000000001" width="13" height="2.8" fill="#2a3b8c"/></g>
<g><circle cx="708.5" cy="565.7" r="4.2" fill="#fff" stroke="#d62a3d" stroke-width="1.8"/><rect x="702.0" y="564.3000000000001" width="13" height="2.8" fill="#2a3b8c"/></g>
<g><circle cx="777.6" cy="551.2" r="4.2" fill="#fff" stroke="#d62a3d" stroke-width="1.8"/><rect x="771.1" y="549.8000000000001" width="13" height="2.8" fill="#2a3b8c"/></g>
<g><circle cx="840.7" cy="542.7" r="4.2" fill="#fff" stroke="#d62a3d" stroke-width="1.8"/><rect x="834.2" y="541.3000000000001" width="13" height="2.8" fill="#2a3b8c"/></g>
<g><circle cx="744.9" cy="604.6" r="4.2" fill="#fff" stroke="#d62a3d" stroke-width="1.8"/><rect x="738.4" y="603.2" width="13" height="2.8" fill="#2a3b8c"/></g>
<g><circle cx="715.7" cy="622.8" r="4.2" fill="#fff" stroke="#d62a3d" stroke-width="1.8"/><rect x="709.2" y="621.4" width="13" height="2.8" fill="#2a3b8c"/></g>
<g><circle cx="670.8" cy="639.8" r="4.2" fill="#fff" stroke="#d62a3d" stroke-width="1.8"/><rect x="664.3" y="638.4" width="13" height="2.8" fill="#2a3b8c"/></g>
<g><circle cx="884" cy="366.7" r="4.2" fill="#fff" stroke="#d62a3d" stroke-width="1.8"/><rect x="877.5" y="365.3" width="13" height="2.8" fill="#2a3b8c"/></g>
<g><circle cx="1028.3" cy="451.6" r="4.2" fill="#fff" stroke="#d62a3d" stroke-width="1.8"/><rect x="1021.8" y="450.20000000000005" width="13" height="2.8" fill="#2a3b8c"/></g>
<g><circle cx="1108.4" cy="382.4" r="4.2" fill="#fff" stroke="#d62a3d" stroke-width="1.8"/><rect x="1101.9" y="381.0" width="13" height="2.8" fill="#2a3b8c"/></g>
<g><circle cx="892.4" cy="518.4" r="4.2" fill="#fff" stroke="#d62a3d" stroke-width="1.8"/><rect x="885.9" y="517.0" width="13" height="2.8" fill="#2a3b8c"/></g>
<g><circle cx="905.8" cy="518.4" r="4.2" fill="#fff" stroke="#d62a3d" stroke-width="1.8"/><rect x="899.3" y="517.0" width="13" height="2.8" fill="#2a3b8c"/></g>
<g><circle cx="944.6" cy="518.4" r="4.2" fill="#fff" stroke="#d62a3d" stroke-width="1.8"/><rect x="938.1" y="517.0" width="13" height="2.8" fill="#2a3b8c"/></g>
<g><circle cx="1010.1" cy="600.9" r="4.2" fill="#fff" stroke="#d62a3d" stroke-width="1.8"/><rect x="1003.6" y="599.5" width="13" height="2.8" fill="#2a3b8c"/></g>
<g><circle cx="974.9" cy="614.3" r="4.2" fill="#fff" stroke="#d62a3d" stroke-width="1.8"/><rect x="968.4" y="612.9" width="13" height="2.8" fill="#2a3b8c"/></g>
<g><circle cx="1027.1" cy="628.8" r="4.2" fill="#fff" stroke="#d62a3d" stroke-width="1.8"/><rect x="1020.5999999999999" y="627.4" width="13" height="2.8" fill="#2a3b8c"/></g>
<g><circle cx="1109.7" cy="591.2" r="4.2" fill="#fff" stroke="#d62a3d" stroke-width="1.8"/><rect x="1103.2" y="589.8000000000001" width="13" height="2.8" fill="#2a3b8c"/></g>
<g><circle cx="533.6" cy="726" r="4.2" fill="#fff" stroke="#d62a3d" stroke-width="1.8"/><rect x="527.1" y="724.6" width="13" height="2.8" fill="#2a3b8c"/></g>
<g><circle cx="597.7" cy="814.1" r="4.2" fill="#fff" stroke="#d62a3d" stroke-width="1.8"/><rect x="591.2" y="812.7" width="13" height="2.8" fill="#2a3b8c"/></g>
<g><circle cx="503.4" cy="855.2" r="4.2" fill="#fff" stroke="#d62a3d" stroke-width="1.8"/><rect x="496.9" y="853.8000000000001" width="13" height="2.8" fill="#2a3b8c"/></g>
<g><circle cx="815" cy="725.6" r="4.2" fill="#fff" stroke="#d62a3d" stroke-width="1.8"/><rect x="808.5" y="724.2" width="13" height="2.8" fill="#2a3b8c"/></g>
<g><circle cx="889.2" cy="715" r="4.2" fill="#fff" stroke="#d62a3d" stroke-width="1.8"/><rect x="882.7" y="713.6" width="13" height="2.8" fill="#2a3b8c"/></g>
<g><circle cx="974.5" cy="746.5" r="4.2" fill="#fff" stroke="#d62a3d" stroke-width="1.8"/><rect x="968.0" y="745.1" width="13" height="2.8" fill="#2a3b8c"/></g>
<g><circle cx="924.5" cy="827.4" r="4.2" fill="#fff" stroke="#d62a3d" stroke-width="1.8"/><rect x="918.0" y="826.0" width="13" height="2.8" fill="#2a3b8c"/></g>
<g><circle cx="888.7" cy="713.8" r="4.2" fill="#fff" stroke="#d62a3d" stroke-width="1.8"/><rect x="882.2" y="712.4" width="13" height="2.8" fill="#2a3b8c"/></g>
<g><circle cx="674" cy="768.2" r="4.2" fill="#fff" stroke="#d62a3d" stroke-width="1.8"/><rect x="667.5" y="766.8000000000001" width="13" height="2.8" fill="#2a3b8c"/></g>
<g><circle cx="836.3" cy="775.5" r="4.2" fill="#fff" stroke="#d62a3d" stroke-width="1.8"/><rect x="829.8" y="774.1" width="13" height="2.8" fill="#2a3b8c"/></g>
<g><circle cx="677.2" cy="892.7" r="4.2" fill="#fff" stroke="#d62a3d" stroke-width="1.8"/><rect x="670.7" y="891.3000000000001" width="13" height="2.8" fill="#2a3b8c"/></g>
<g><circle cx="749.7" cy="927.8" r="4.2" fill="#fff" stroke="#d62a3d" stroke-width="1.8"/><rect x="743.2" y="926.4" width="13" height="2.8" fill="#2a3b8c"/></g>
<path d="M947.3,270 H961.3 M947.3,274 H961.3 M951.3,267 L957.3,270 L951.3,274 M957.3,271 L951.3,274 L957.3,277" stroke="#d8343f" stroke-width="1.5" fill="none"/>
<path d="M1006.8,449.6 H1020.8 M1006.8,453.6 H1020.8 M1010.8,446.6 L1016.8,449.6 L1010.8,453.6 M1016.8,450.6 L1010.8,453.6 L1016.8,456.6" stroke="#d8343f" stroke-width="1.5" fill="none"/>
<path d="M872,516.4 H886 M872,520.4 H886 M876,513.4 L882,516.4 L876,520.4 M882,517.4 L876,520.4 L882,523.4" stroke="#d8343f" stroke-width="1.5" fill="none"/>
<path d="M993.4,624.4 H1007.4 M993.4,628.4 H1007.4 M997.4,621.4 L1003.4,624.4 L997.4,628.4 M1003.4,625.4 L997.4,628.4 L1003.4,631.4" stroke="#d8343f" stroke-width="1.5" fill="none"/>
<path d="M1077.2,618.3 H1091.2 M1077.2,622.3 H1091.2 M1081.2,615.3 L1087.2,618.3 L1081.2,622.3 M1087.2,619.3 L1081.2,622.3 L1087.2,625.3" stroke="#d8343f" stroke-width="1.5" fill="none"/>
<path d="M855.3,710 H869.3 M855.3,714 H869.3 M859.3,707 L865.3,710 L859.3,714 M865.3,711 L859.3,714 L865.3,717" stroke="#d8343f" stroke-width="1.5" fill="none"/>
<path d="M828.3,722 H842.3 M828.3,726 H842.3 M832.3,719 L838.3,722 L832.3,726 M838.3,723 L832.3,726 L838.3,729" stroke="#d8343f" stroke-width="1.5" fill="none"/>
<polyline points="830,698 819,690 804,665 792,644 784.4,629 782.5,618 780,601 763,584 743.7,565.7 714.5,574.2 702.4,562.1 668.4,501.4 655,480" fill="none" stroke="#a48bf0" stroke-width="3.5" stroke-linejoin="round" stroke-linecap="round"/>
<polyline points="655,480 690,482 703,475" fill="none" stroke="#a48bf0" stroke-width="3.5" stroke-linejoin="round" stroke-linecap="round"/>
<polyline points="719.5,481 723.4,491.3 728.5,491.3 738.8,483.6" fill="none" stroke="#a48bf0" stroke-width="3.5" stroke-linejoin="round" stroke-linecap="round"/>
<polyline points="741.3,491.3 741.3,496.5 767,531 772,528.5 759.3,496.5 756.7,494" fill="none" stroke="#a48bf0" stroke-width="3.5" stroke-linejoin="round" stroke-linecap="round"/>
<polyline points="772,528.5 779.8,519.6 787.5,517 787.5,508 792.7,506.7 795.2,515.7 799,513.1 799,504.2" fill="none" stroke="#a48bf0" stroke-width="3.5" stroke-linejoin="round" stroke-linecap="round"/>
<polyline points="805.5,517 808,527.3" fill="none" stroke="#a48bf0" stroke-width="3.5" stroke-linejoin="round" stroke-linecap="round"/>
<polyline points="809,510 827,502 842,497 852,500 854.6,506.5 856,512 865.7,513.4 865.7,527.4 874,527.4 875.4,515" fill="none" stroke="#a48bf0" stroke-width="3.5" stroke-linejoin="round" stroke-linecap="round"/>
<polyline points="875,510 892,490 927,487 935,479 937,470" fill="none" stroke="#a48bf0" stroke-width="3.5" stroke-linejoin="round" stroke-linecap="round"/>
<polyline points="937,476 946,495 948,519 941,522 906,538.5 899,548 888,548 889,560 894.5,620 893.7,724.8 898,750" fill="none" stroke="#a48bf0" stroke-width="3.5" stroke-linejoin="round" stroke-linecap="round"/>
<polyline points="898,752 885,749 855,734 850,738 844,734 844,725 837,719 830,712" fill="none" stroke="#a48bf0" stroke-width="3.5" stroke-linejoin="round" stroke-linecap="round"/>
<polyline points="830,712 819,713 805,729" fill="none" stroke="#a48bf0" stroke-width="3.5" stroke-linejoin="round" stroke-linecap="round"/>
<polyline points="844,734 832,744" fill="none" stroke="#a48bf0" stroke-width="3.5" stroke-linejoin="round" stroke-linecap="round"/>
<polyline points="898,765 912,770 905,755" fill="none" stroke="#a48bf0" stroke-width="3.5" stroke-linejoin="round" stroke-linecap="round"/>
<polyline points="624,585 604,596 598,588 593,582 552,589 506,597 496,560 493.5,557 511.2,552.4 510.6,545.9 520.6,540.6 528.8,540.6 531.2,523 535.9,523 540.6,519.4 558.2,518.2 559.4,510 567.6,510 567.6,501.8 600.6,499.4 601.8,505.3 620.6,505.3 621.8,498.2 626.5,499.4 640,488.8 646,487.8 665.3,490 670.6,491 672.8,497.4 656.7,496.3 654.6,494.2" fill="none" stroke="#2a44e0" stroke-width="3.5" stroke-linejoin="round" stroke-linecap="round"/>
<polyline points="654.6,494.2 630,513.4 608.8,519.4 606.5,520.6 610,540.6 605.3,543 607.6,560 611,572.6 619.7,581" fill="none" stroke="#2a44e0" stroke-width="3.5" stroke-linejoin="round" stroke-linecap="round"/>
<polyline points="624,590 632,622" fill="none" stroke="#2a44e0" stroke-width="3.5" stroke-linejoin="round" stroke-linecap="round"/>
<polyline points="489,540 512,515 535,500 555,495 583,490 598,482 620,478 670,470" fill="none" stroke="#2a44e0" stroke-width="3.5" stroke-linejoin="round" stroke-linecap="round"/>
<path d="M830.0,724.6 L841.8,706.1 A14,14 0 1 0 818.2,706.1 Z" fill="#a48bf0"/>
<circle cx="830" cy="698.6" r="9.5" fill="#fff"/>
<path d="M824,702.1 V697.6 q0,-2 2,-2 h8 q2,0 2,2 V702.1 M824,700.1 H836 M825.5,697.1 v-2 h3.5 v2 M831,697.1 v-2 h3.5 v2" fill="none" stroke="#a48bf0" stroke-width="1.6"/>
<path d="M624.0,608.0 L635.8,589.5 A14,14 0 1 0 612.2,589.5 Z" fill="#2a44e0"/>
<circle cx="624" cy="582" r="9.5" fill="#fff"/>
<path d="M618,585.5 V581 q0,-2 2,-2 h8 q2,0 2,2 V585.5 M618,583.5 H630 M619.5,580.5 v-2 h3.5 v2 M625,580.5 v-2 h3.5 v2" fill="none" stroke="#2a44e0" stroke-width="1.6"/>
<path d="M636.4,492.6 L647.3,480.2 A14.5,14.5 0 1 0 625.5,480.2 Z" fill="#b08ef2" stroke="#1a1033" stroke-width="1.6"/>
<text x="636.4" y="477.90000000000003" font-size="21" fill="#fff" stroke="#fff" stroke-width="0.7" text-anchor="middle" letter-spacing="0">2</text>
<path d="M654.6,496.9 L665.5,484.5 A14.5,14.5 0 1 0 643.7,484.5 Z" fill="#b08ef2" stroke="#1a1033" stroke-width="1.6"/>
<text x="654.6" y="482.2" font-size="21" fill="#fff" stroke="#fff" stroke-width="0.7" text-anchor="middle" letter-spacing="0">1</text>
<path d="M680.3,487.3 L691.2,474.9 A14.5,14.5 0 1 0 669.4,474.9 Z" fill="#b08ef2" stroke="#1a1033" stroke-width="1.6"/>
<text x="680.3" y="472.6" font-size="21" fill="#fff" stroke="#fff" stroke-width="0.7" text-anchor="middle" letter-spacing="0">3</text>
<path d="M714.0,486.2 L724.9,473.8 A14.5,14.5 0 1 0 703.1,473.8 Z" fill="#b08ef2" stroke="#1a1033" stroke-width="1.6"/>
<text x="714" y="471.5" font-size="21" fill="#fff" stroke="#fff" stroke-width="0.7" text-anchor="middle" letter-spacing="0">4</text>
<path d="M743.9,483.0 L754.8,470.6 A14.5,14.5 0 1 0 733.0,470.6 Z" fill="#b08ef2" stroke="#1a1033" stroke-width="1.6"/>
<text x="743.9" y="468.3" font-size="21" fill="#fff" stroke="#fff" stroke-width="0.7" text-anchor="middle" letter-spacing="0">5</text>
<path d="M753.0,499.0 L763.9,486.6 A14.5,14.5 0 1 0 742.1,486.6 Z" fill="#b08ef2" stroke="#1a1033" stroke-width="1.6"/>
<text x="753" y="484.3" font-size="21" fill="#fff" stroke="#fff" stroke-width="0.7" text-anchor="middle" letter-spacing="0">6</text>
<path d="M788.5,507.6 L799.4,495.2 A14.5,14.5 0 1 0 777.6,495.2 Z" fill="#b08ef2" stroke="#1a1033" stroke-width="1.6"/>
<text x="788.5" y="492.90000000000003" font-size="21" fill="#fff" stroke="#fff" stroke-width="0.7" text-anchor="middle" letter-spacing="0">7</text>
<path d="M811.5,527.1 L822.4,514.7 A14.5,14.5 0 1 0 800.6,514.7 Z" fill="#b08ef2" stroke="#1a1033" stroke-width="1.6"/>
<text x="811.5" y="512.4" font-size="21" fill="#fff" stroke="#fff" stroke-width="0.7" text-anchor="middle" letter-spacing="0">8</text>
<path d="M806.0,510.4 L816.9,498.0 A14.5,14.5 0 1 0 795.1,498.0 Z" fill="#b08ef2" stroke="#1a1033" stroke-width="1.6"/>
<text x="806" y="495.7" font-size="21" fill="#fff" stroke="#fff" stroke-width="0.7" text-anchor="middle" letter-spacing="0">9</text>
<path d="M851.8,507.0 L862.7,494.6 A14.5,14.5 0 1 0 840.9,494.6 Z" fill="#b08ef2" stroke="#1a1033" stroke-width="1.6"/>
<text x="851.8" y="492.3" font-size="20" fill="#fff" stroke="#fff" stroke-width="0.7" text-anchor="middle" letter-spacing="-0.3">10</text>
<path d="M875.4,518.8 L886.3,506.4 A14.5,14.5 0 1 0 864.5,506.4 Z" fill="#b08ef2" stroke="#1a1033" stroke-width="1.6"/>
<text x="875.4" y="504.1" font-size="20" fill="#fff" stroke="#fff" stroke-width="0.7" text-anchor="middle" letter-spacing="-0.3">11</text>
<path d="M920.6,486.8 L931.5,474.4 A14.5,14.5 0 1 0 909.7,474.4 Z" fill="#b08ef2" stroke="#1a1033" stroke-width="1.6"/>
<text x="920.6" y="472.1" font-size="20" fill="#fff" stroke="#fff" stroke-width="0.7" text-anchor="middle" letter-spacing="-0.3">12</text>
<path d="M937.3,476.3 L948.2,463.9 A14.5,14.5 0 1 0 926.4,463.9 Z" fill="#b08ef2" stroke="#1a1033" stroke-width="1.6"/>
<text x="937.3" y="461.6" font-size="20" fill="#fff" stroke="#fff" stroke-width="0.7" text-anchor="middle" letter-spacing="-0.3">13</text>
<path d="M898.4,772.8 L909.3,760.4 A14.5,14.5 0 1 0 887.5,760.4 Z" fill="#b08ef2" stroke="#1a1033" stroke-width="1.6"/>
<text x="898.4" y="758.0999999999999" font-size="20" fill="#fff" stroke="#fff" stroke-width="0.7" text-anchor="middle" letter-spacing="-0.3">14</text>
<path d="M898.4,764.8 L909.3,752.4 A14.5,14.5 0 1 0 887.5,752.4 Z" fill="#b08ef2" stroke="#1a1033" stroke-width="1.6"/>
<text x="898.4" y="750.0999999999999" font-size="20" fill="#fff" stroke="#fff" stroke-width="0.7" text-anchor="middle" letter-spacing="-0.3">15</text>
<path d="M489.2,556.0 L500.1,543.6 A14.5,14.5 0 1 0 478.3,543.6 Z" fill="#2d47e6" stroke="#1a1033" stroke-width="1.6"/>
<text x="489.2" y="541.3" font-size="21" fill="#fff" stroke="#fff" stroke-width="0.7" text-anchor="middle" letter-spacing="0">1</text>
<path d="M497.8,551.8 L508.7,539.4 A14.5,14.5 0 1 0 486.9,539.4 Z" fill="#2d47e6" stroke="#1a1033" stroke-width="1.6"/>
<text x="497.8" y="537.0999999999999" font-size="21" fill="#fff" stroke="#fff" stroke-width="0.7" text-anchor="middle" letter-spacing="0">2</text>
<path d="M507.4,549.7 L518.3,537.3 A14.5,14.5 0 1 0 496.5,537.3 Z" fill="#2d47e6" stroke="#1a1033" stroke-width="1.6"/>
<text x="507.4" y="535.0" font-size="21" fill="#fff" stroke="#fff" stroke-width="0.7" text-anchor="middle" letter-spacing="0">3</text>
<path d="M511.7,532.6 L522.6,520.2 A14.5,14.5 0 1 0 500.8,520.2 Z" fill="#2d47e6" stroke="#1a1033" stroke-width="1.6"/>
<text x="511.7" y="517.9" font-size="21" fill="#fff" stroke="#fff" stroke-width="0.7" text-anchor="middle" letter-spacing="0">4</text>
<path d="M524.5,530.4 L535.4,518.0 A14.5,14.5 0 1 0 513.6,518.0 Z" fill="#2d47e6" stroke="#1a1033" stroke-width="1.6"/>
<text x="524.5" y="515.6999999999999" font-size="21" fill="#fff" stroke="#fff" stroke-width="0.7" text-anchor="middle" letter-spacing="0">5</text>
<path d="M534.2,516.5 L545.1,504.1 A14.5,14.5 0 1 0 523.3,504.1 Z" fill="#2d47e6" stroke="#1a1033" stroke-width="1.6"/>
<text x="534.2" y="501.8" font-size="21" fill="#fff" stroke="#fff" stroke-width="0.7" text-anchor="middle" letter-spacing="0">6</text>
<path d="M553.4,512.3 L564.3,499.9 A14.5,14.5 0 1 0 542.5,499.9 Z" fill="#2d47e6" stroke="#1a1033" stroke-width="1.6"/>
<text x="553.4" y="497.6" font-size="21" fill="#fff" stroke="#fff" stroke-width="0.7" text-anchor="middle" letter-spacing="0">7</text>
<path d="M581.2,505.8 L592.1,493.4 A14.5,14.5 0 1 0 570.3,493.4 Z" fill="#2d47e6" stroke="#1a1033" stroke-width="1.6"/>
<text x="581.2" y="491.1" font-size="21" fill="#fff" stroke="#fff" stroke-width="0.7" text-anchor="middle" letter-spacing="0">8</text>
<path d="M589.8,489.8 L600.7,477.4 A14.5,14.5 0 1 0 578.9,477.4 Z" fill="#2d47e6" stroke="#1a1033" stroke-width="1.6"/>
<text x="589.8" y="475.1" font-size="21" fill="#fff" stroke="#fff" stroke-width="0.7" text-anchor="middle" letter-spacing="0">9</text>
<path d="M597.2,500.5 L608.1,488.1 A14.5,14.5 0 1 0 586.3,488.1 Z" fill="#2d47e6" stroke="#1a1033" stroke-width="1.6"/>
<text x="597.2" y="485.8" font-size="20" fill="#fff" stroke="#fff" stroke-width="0.7" text-anchor="middle" letter-spacing="-0.3">10</text>
<path d="M619.7,496.2 L630.6,483.8 A14.5,14.5 0 1 0 608.8,483.8 Z" fill="#2d47e6" stroke="#1a1033" stroke-width="1.6"/>
<text x="619.7" y="481.5" font-size="20" fill="#fff" stroke="#fff" stroke-width="0.7" text-anchor="middle" letter-spacing="-0.3">11</text>
<path d="M670.4,488.5 L681.3,476.1 A14.5,14.5 0 1 0 659.5,476.1 Z" fill="#2d47e6" stroke="#1a1033" stroke-width="1.6"/>
<text x="670.4" y="473.8" font-size="20" fill="#fff" stroke="#fff" stroke-width="0.7" text-anchor="middle" letter-spacing="-0.3">12</text>
<rect x="1049" y="705" width="51" height="103" fill="#fff" rx="2" filter="url(#sh)"/>
<rect x="1057" y="755.5" width="36" height="1" fill="#e6e6e6"/>
<path d="M1063,730 H1087 M1075,718 V742" stroke="#666" stroke-width="4"/>
<path d="M1063,783 H1087" stroke="#666" stroke-width="4"/>
<rect x="1073" y="256" width="41" height="64" rx="3" fill="#0b6ab4"/>
<path d="M1089,275 L1101,287.5 L1089,300 Z" fill="none" stroke="#fff" stroke-width="2.2" stroke-linejoin="miter"/>
</svg>
<!--/MAP-->
<!-- SIDEBAR -->
<div class="abs" style="left:390px;top:178px;width:1px;height:760px;background:#e2e2e2"></div>
<div class="abs" style="left:372px;top:198px;width:36px;height:36px;border-radius:50%;background:#fff;box-shadow:0 1px 5px rgba(0,0,0,.28)"></div>
<svg style="left:385px;top:208px" width="10" height="17" viewBox="0 0 10 17" fill="none" stroke="#555" stroke-width="1.5"><path d="M8.5 1L1.5 8.5L8.5 16"/></svg>

<svg style="left:119px;top:304px" width="22" height="23" viewBox="0 0 22 23" fill="none" stroke="#1a1a1a" stroke-width="2">
 <rect x="1" y="3" width="20" height="19"/><path d="M1 6.5H21M6 0V3M16 0V3"/><path d="M6.5 13.5L9.5 16.5L15.5 10.5" stroke-width="1.8"/>
</svg>
<div class="t nav" style="left:152px;top:307px;letter-spacing:1px">Planning</div>
<svg style="left:115px;top:359px" width="30" height="20" viewBox="0 0 30 20" fill="none" stroke="#1a1a1a" stroke-width="2">
 <path d="M5 1H25L29 19H1Z" stroke-linejoin="miter"/><path d="M15 3V7M15 9.5V13M15 15V19" stroke-width="2"/>
</svg>
<div class="t nav" style="left:152px;top:361px;letter-spacing:.58px">Liste des tournées</div>
<div class="abs" style="left:108px;top:403px;width:270px;height:41px;background:#edf6fd;border-radius:5px"></div>
<svg style="left:117px;top:411px" width="26" height="24" viewBox="0 0 26 24" fill="none" stroke="#3b9ad8" stroke-width="1.9" stroke-linejoin="round">
 <path d="M11 5.5L8 4L1.5 6.5V23L8 20.5L16 23L22.5 20.5V15"/><path d="M8 4V20.5M16 16V23"/>
 <path d="M18 14C15.5 11 13.5 8.5 13.5 6A4.5 4.5 0 0 1 22.5 6C22.5 8.5 20.5 11 18 14Z"/><circle cx="18" cy="6" r="1.2" fill="#3b9ad8" stroke="none"/>
</svg>
<div class="t nav" style="left:152px;top:415px;letter-spacing:.58px;color:#3b9ad8">Carte des tournées</div>
<svg style="left:117px;top:466px" width="25" height="22" viewBox="0 0 25 22" fill="none" stroke="#1a1a1a" stroke-width="2">
 <path d="M1 3L2.8 5L6 1M1 10.5L2.8 12.5L6 8.5M1 18L2.8 20L6 16" stroke-width="1.8"/><path d="M10 3H24M10 11H24M10 19H24"/>
</svg>
<div class="t nav" style="left:152px;top:469px;letter-spacing:.62px">Liste des interventions</div>

<!-- TOOLBAR -->
<div class="t" style="left:431px;top:206px;font-size:22px;color:#d0814a;letter-spacing:1px">Carte des tournées</div>
<div class="abs" style="left:655px;top:194px;width:371px;height:44px;border:1px solid #dcdcdc;border-radius:3px;background:#fff"></div>
<div class="abs" style="left:763px;top:195px;width:214px;height:42px;background:#f9f9f9;border-left:1px solid #dcdcdc;border-right:1px solid #dcdcdc"></div>
<div class="abs" style="left:715px;top:195px;width:1px;height:42px;background:#dcdcdc"></div>
<svg style="left:675px;top:205px" width="21" height="21" viewBox="0 0 21 21" fill="none" stroke="#333" stroke-width="1.7">
 <rect x="1" y="2.5" width="19" height="17.5" rx="1"/><path d="M1 6.5H20M5.5 0V4M15.5 0V4"/>
 <g fill="#333" stroke="none"><rect x="8" y="9" width="2" height="2"/><rect x="12" y="9" width="2" height="2"/><rect x="16" y="9" width="1.8" height="2"/><rect x="4" y="12.5" width="2" height="2"/><rect x="8" y="12.5" width="2" height="2"/><rect x="12" y="12.5" width="2" height="2"/><rect x="16" y="12.5" width="1.8" height="2"/><rect x="4" y="16" width="2" height="2"/><rect x="8" y="16" width="2" height="2"/><rect x="12" y="16" width="2" height="2"/></g>
</svg>
<svg style="left:735px;top:209px" width="8" height="14" viewBox="0 0 8 14" fill="none" stroke="#444" stroke-width="1.5"><path d="M7 1L1.5 7L7 13"/></svg>
<div class="t" style="left:783px;top:209px;font-size:16px;color:#333;letter-spacing:.15px">17/07/2024</div>
<svg style="left:998px;top:209px" width="8" height="14" viewBox="0 0 8 14" fill="none" stroke="#444" stroke-width="1.5"><path d="M1 1L6.5 7L1 13"/></svg>

<div class="abs" style="left:1443px;top:196px;width:267px;height:41px;background:#0f6db6;border-radius:2px"></div>
<svg style="left:1459px;top:204px" width="25" height="25" viewBox="0 0 25 25" fill="none" stroke="#fff" stroke-width="1.6" stroke-linejoin="round">
 <path d="M9 11.5L13.5 16C18 13 22.5 8 23.5 1.5C17 2.5 12 7 9 11.5Z"/><circle cx="17" cy="8" r="1.6"/>
 <path d="M9.5 11L5 10.5L2.5 13L7 14M14 15.5L14.5 20L12 22.5L11 18M8 15L3 23.5L10 17"/>
</svg>
<div class="t" style="left:1497px;top:208px;font-size:15px;font-weight:bold;color:#fff;letter-spacing:.6px">Ré-optimiser les tournées</div>
<div class="abs" style="left:1716px;top:196px;width:41px;height:41px;border-radius:50%;background:#0f6db6"></div>
<svg style="left:1726px;top:206px" width="21" height="21" viewBox="0 0 21 21" stroke="#fff" stroke-width="2"><path d="M10.5 1V20M1 10.5H20"/></svg>
<div class="abs" style="left:1767px;top:196px;width:41px;height:41px;border-radius:50%;background:#52b256"></div>
<svg style="left:1776px;top:206px" width="24" height="22" viewBox="0 0 24 22" fill="none" stroke="#fff" stroke-width="1.6" stroke-linejoin="round">
 <path d="M7 15H5.5A4.5 4.5 0 0 1 5 6A6.5 6.5 0 0 1 17.5 5A4.8 4.8 0 0 1 18.5 15H17"/><path d="M12 9V20M8.5 16.5L12 20L15.5 16.5"/>
</svg>
<div class="abs" style="left:1818px;top:196px;width:41px;height:41px;border-radius:50%;background:#52b256"></div>
<svg style="left:1829px;top:204px" width="19" height="24" viewBox="0 0 19 24" fill="none" stroke="#fff" stroke-width="1.7">
 <rect x="1.5" y="10.5" width="16" height="12"/><path d="M4.5 10.5V6.5A5 5 0 0 1 14.5 6.5V10.5"/>
</svg>
<div class="abs" style="left:1866px;top:196px;width:41px;height:41px;border-radius:50%;background:#0f6db6"></div>
<svg style="left:1875px;top:208px" width="23" height="17" viewBox="0 0 23 17" fill="none" stroke="#fff" stroke-width="1.7">
 <rect x="1" y="1" width="21" height="15"/><path d="M1 1L11.5 10L22 1"/>
</svg>
<div class="abs" style="left:1115px;top:254px;width:840px;height:1px;background:#e3e3e3"></div>
<div class="abs" style="left:1114px;top:255px;width:1px;height:690px;background:#d6d6d6"></div>

<!-- RIGHT PANEL -->
<div class="abs" style="left:1129px;top:266px;width:288px;height:33px;border-radius:17px;background:#efefef"></div>
<svg style="left:1157px;top:276px" width="13" height="13" viewBox="0 0 13 13" fill="none" stroke="#555" stroke-width="1.2" stroke-linejoin="round"><path d="M1 1H12L7.5 6.5V12L5.5 10.5V6.5Z"/></svg>
<div class="t" style="left:1182px;top:275px;font-size:15px;color:#555;letter-spacing:1.15px">Voir les options d'affichage</div>

<div class="abs" style="left:1126px;top:320px;width:816px;height:104px;background:#fff;border:1px solid #e0e0e0;box-shadow:0 1px 2px rgba(0,0,0,.12)"></div>
<div class="abs" style="left:1127px;top:321px;width:814px;height:48px;background:#efefef"></div>
<div class="abs" style="left:1138px;top:333px;width:23px;height:23px;border-radius:3px;background:#2f96e8"></div>
<svg style="left:1141px;top:338px" width="17" height="13" viewBox="0 0 17 13" fill="none" stroke="#fff" stroke-width="2.2"><path d="M1.5 6.5L6 11L15.5 1.5"/></svg>
<div class="abs" style="left:1173px;top:332px;width:26px;height:26px;border-radius:50%;background:#b08cf2;border:1.5px solid #160f38"></div>
<div class="t" style="left:1209px;top:337px;font-size:16px;color:#1e1e1e;letter-spacing:.55px">Julia Virmond | AS-987-WX</div>
<svg style="left:1889px;top:342px" width="20" height="4"><circle cx="2" cy="2" r="1.7" fill="#222"/><circle cx="10" cy="2" r="1.7" fill="#222"/><circle cx="18" cy="2" r="1.7" fill="#222"/></svg>
<svg style="left:1157px;top:387px" width="19" height="20" viewBox="0 0 19 20" fill="none" stroke="#555" stroke-width="1.4"><path d="M1 19.5V1H10V4H18V12H10V9H1.5M10 4V9"/></svg>
<svg style="left:1276px;top:386px" width="19" height="20" viewBox="0 0 19 20"><path d="M1 19.5V1" stroke="#555" stroke-width="1.5"/><rect x="1" y="1" width="17" height="12" fill="#555"/>
<g fill="#fff"><rect x="3" y="2.5" width="2.5" height="2.5"/><rect x="8" y="2.5" width="2.5" height="2.5"/><rect x="13" y="2.5" width="2.5" height="2.5"/><rect x="5.5" y="5" width="2.5" height="2.5"/><rect x="10.5" y="5" width="2.5" height="2.5"/><rect x="15.5" y="5" width="2" height="2.5"/><rect x="3" y="7.5" width="2.5" height="2.5"/><rect x="8" y="7.5" width="2.5" height="2.5"/><rect x="13" y="7.5" width="2.5" height="2.5"/><rect x="5.5" y="10" width="2.5" height="2"/><rect x="10.5" y="10" width="2.5" height="2"/></g></svg>
<svg style="left:1373px;top:388px" width="26" height="17" viewBox="0 0 26 17" fill="none" stroke="#555" stroke-width="1.5"><path d="M5 1H21L25 16H1Z"/><path d="M13 3V7M13 9.5V12.5M13 14V16"/></svg>
<svg style="left:1517px;top:386px" width="16" height="21" viewBox="0 0 16 21" fill="none" stroke="#555" stroke-width="1.4"><path d="M8 20C3.5 13.5 1 10.5 1 7.5A7 7 0 0 1 15 7.5C15 10.5 12.5 13.5 8 20Z"/><circle cx="8" cy="7" r="1.3" fill="#555" stroke="none"/></svg>
<svg style="left:1616px;top:388px" width="21" height="17" viewBox="0 0 21 17" fill="none" stroke="#555" stroke-width="1.5"><path d="M3 6.5L5 1.5H16L18 6.5"/><rect x="1" y="6.5" width="19" height="7.5" rx="1"/><path d="M2.5 14V16.5H5V14M16 14V16.5H18.5V14M4 10H6M15 10H17M8 11.5H13"/><path d="M0.5 6.5H3M18 6.5H20.5"/></svg>
<svg style="left:1740px;top:387px" width="18" height="18" viewBox="0 0 18 18" fill="none" stroke="#555" stroke-width="1.5"><circle cx="9" cy="6" r="5"/><path d="M1 17.5C1.5 13 4.5 11 9 11S16.5 13 17 17.5"/></svg>
<svg style="left:1846px;top:389px" width="24" height="14" viewBox="0 0 24 14"><rect x="1" y="1" width="22" height="12" fill="none" stroke="#555" stroke-width="1.6"/><text x="12" y="10.5" font-size="9.5" font-weight="bold" text-anchor="middle" fill="#555" font-family="Liberation Sans">1</text><circle cx="5" cy="7" r="1" fill="#555"/><circle cx="19" cy="7" r="1" fill="#555"/></svg>
<div class="t" style="left:1180px;top:389px;font-size:13.5px;color:#666;letter-spacing:.1px">08:00</div>
<div class="t" style="left:1298px;top:389px;font-size:13.5px;color:#666;letter-spacing:.1px">16:58</div>
<div class="t" style="left:1404px;top:389px;font-size:13.5px;color:#666;letter-spacing:.1px">14,28 km</div>
<div class="t" style="left:1543px;top:389px;font-size:13.5px;color:#666;letter-spacing:.1px">15</div>
<div class="t" style="left:1644px;top:389px;font-size:13.5px;color:#666;letter-spacing:.1px">28min</div>
<div class="t" style="left:1767px;top:389px;font-size:13.5px;color:#666;letter-spacing:.1px">8h10</div>
<div class="t" style="left:1876px;top:389px;font-size:13.5px;color:#666;letter-spacing:.1px">12,85 €</div>

<div class="abs" style="left:1126px;top:435px;width:816px;height:104px;background:#fff;border:1px solid #e0e0e0;box-shadow:0 1px 2px rgba(0,0,0,.12)"></div>
<div class="abs" style="left:1127px;top:436px;width:814px;height:48px;background:#efefef"></div>
<div class="abs" style="left:1138px;top:448px;width:23px;height:23px;border-radius:3px;background:#2f96e8"></div>
<svg style="left:1141px;top:453px" width="17" height="13" viewBox="0 0 17 13" fill="none" stroke="#fff" stroke-width="2.2"><path d="M1.5 6.5L6 11L15.5 1.5"/></svg>
<div class="abs" style="left:1173px;top:447px;width:26px;height:26px;border-radius:50%;background:#2f4ef0;border:1.5px solid #160f38"></div>
<div class="t" style="left:1209px;top:452px;font-size:16px;color:#1e1e1e;letter-spacing:.55px">Paul Wagner | 76-UYG-09</div>
<svg style="left:1889px;top:457px" width="20" height="4"><circle cx="2" cy="2" r="1.7" fill="#222"/><circle cx="10" cy="2" r="1.7" fill="#222"/><circle cx="18" cy="2" r="1.7" fill="#222"/></svg>
<svg style="left:1157px;top:502px" width="19" height="20" viewBox="0 0 19 20" fill="none" stroke="#555" stroke-width="1.4"><path d="M1 19.5V1H10V4H18V12H10V9H1.5M10 4V9"/></svg>
<svg style="left:1276px;top:501px" width="19" height="20" viewBox="0 0 19 20"><path d="M1 19.5V1" stroke="#555" stroke-width="1.5"/><rect x="1" y="1" width="17" height="12" fill="#555"/>
<g fill="#fff"><rect x="3" y="2.5" width="2.5" height="2.5"/><rect x="8" y="2.5" width="2.5" height="2.5"/><rect x="13" y="2.5" width="2.5" height="2.5"/><rect x="5.5" y="5" width="2.5" height="2.5"/><rect x="10.5" y="5" width="2.5" height="2.5"/><rect x="15.5" y="5" width="2" height="2.5"/><rect x="3" y="7.5" width="2.5" height="2.5"/><rect x="8" y="7.5" width="2.5" height="2.5"/><rect x="13" y="7.5" width="2.5" height="2.5"/><rect x="5.5" y="10" width="2.5" height="2"/><rect x="10.5" y="10" width="2.5" height="2"/></g></svg>
<svg style="left:1377px;top:503px" width="26" height="17" viewBox="0 0 26 17" fill="none" stroke="#555" stroke-width="1.5"><path d="M5 1H21L25 16H1Z"/><path d="M13 3V7M13 9.5V12.5M13 14V16"/></svg>
<svg style="left:1517px;top:501px" width="16" height="21" viewBox="0 0 16 21" fill="none" stroke="#555" stroke-width="1.4"><path d="M8 20C3.5 13.5 1 10.5 1 7.5A7 7 0 0 1 15 7.5C15 10.5 12.5 13.5 8 20Z"/><circle cx="8" cy="7" r="1.3" fill="#555" stroke="none"/></svg>
<svg style="left:1618px;top:503px" width="21" height="17" viewBox="0 0 21 17" fill="none" stroke="#555" stroke-width="1.5"><path d="M3 6.5L5 1.5H16L18 6.5"/><rect x="1" y="6.5" width="19" height="7.5" rx="1"/><path d="M2.5 14V16.5H5V14M16 14V16.5H18.5V14M4 10H6M15 10H17M8 11.5H13"/><path d="M0.5 6.5H3M18 6.5H20.5"/></svg>
<svg style="left:1740px;top:502px" width="18" height="18" viewBox="0 0 18 18" fill="none" stroke="#555" stroke-width="1.5"><circle cx="9" cy="6" r="5"/><path d="M1 17.5C1.5 13 4.5 11 9 11S16.5 13 17 17.5"/></svg>
<svg style="left:1842px;top:504px" width="24" height="14" viewBox="0 0 24 14"><rect x="1" y="1" width="22" height="12" fill="none" stroke="#555" stroke-width="1.6"/><text x="12" y="10.5" font-size="9.5" font-weight="bold" text-anchor="middle" fill="#555" font-family="Liberation Sans">1</text><circle cx="5" cy="7" r="1" fill="#555"/><circle cx="19" cy="7" r="1" fill="#555"/></svg>
<div class="t" style="left:1180px;top:504px;font-size:13.5px;color:#666;letter-spacing:.1px">08:00</div>
<div class="t" style="left:1298px;top:504px;font-size:13.5px;color:#666;letter-spacing:.1px">16:38</div>
<div class="t" style="left:1407px;top:504px;font-size:13.5px;color:#666;letter-spacing:.1px">7,07 km</div>
<div class="t" style="left:1543px;top:504px;font-size:13.5px;color:#666;letter-spacing:.1px">12</div>
<div class="t" style="left:1647px;top:504px;font-size:13.5px;color:#666;letter-spacing:.1px">13min</div>
<div class="t" style="left:1767px;top:504px;font-size:13.5px;color:#666;letter-spacing:.1px">7h55</div>
<div class="t" style="left:1871px;top:504px;font-size:13.5px;color:#666;letter-spacing:.1px">128,36 €</div>
</body></html>
